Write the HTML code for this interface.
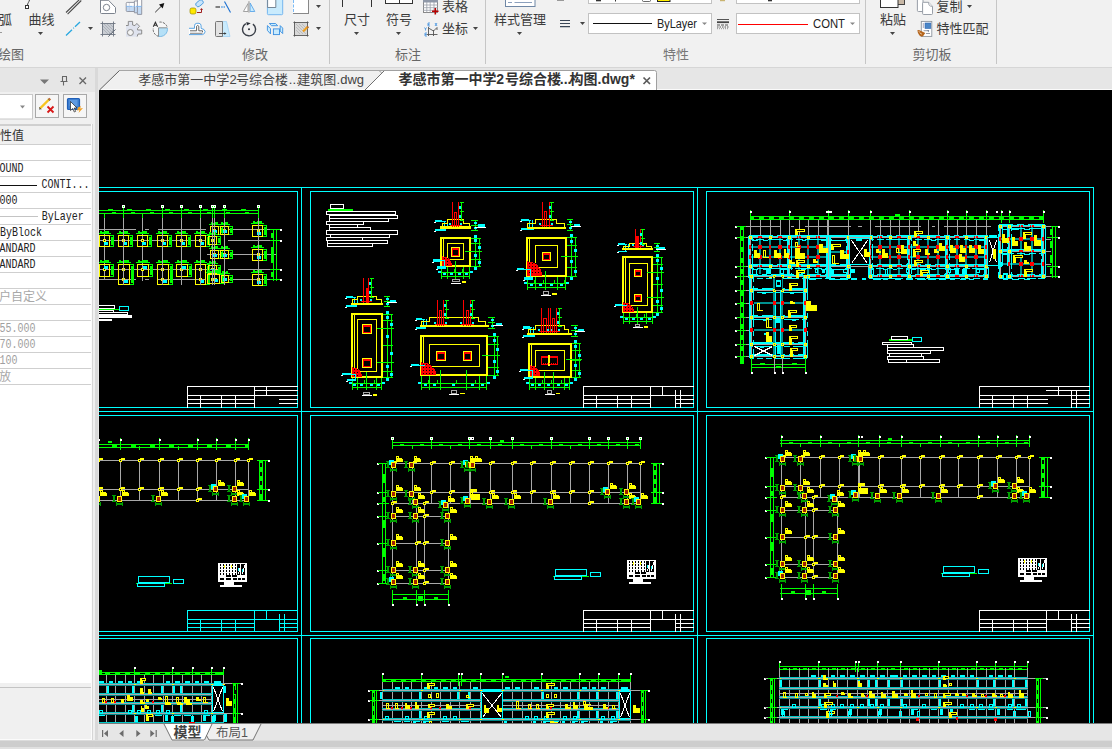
<!DOCTYPE html>
<html><head><meta charset="utf-8"><title>CAD</title>
<style>
html,body{margin:0;padding:0;background:#f0f0f0;overflow:hidden;}
body{width:1112px;height:749px;font-family:"Liberation Sans",sans-serif;}
svg{display:block;position:absolute;left:0;top:0;}
text{font-family:"Liberation Sans",sans-serif;}
.mono{font-family:"Liberation Mono",monospace;}
.serif{font-family:"Liberation Serif",serif;}
.cjk{font-family:"Liberation Sans","Noto Sans CJK SC",sans-serif;}
</style></head><body>
<svg width="1112" height="749" viewBox="0 0 1112 749">
<rect x="0" y="0" width="1112" height="749" fill="#f1f1f1"/>
<rect x="0" y="67" width="1112" height="1" fill="#d6d6d6"/>
<rect x="0" y="68" width="1112" height="22" fill="#e6e6e6"/>
<rect x="99" y="90" width="1013" height="634" fill="#000"/>
<rect x="99" y="724" width="1013" height="17" fill="#e6e6e6"/>
<rect x="99" y="723" width="1013" height="1" fill="#7a7a7a"/>
<rect x="0" y="740" width="1112" height="1" fill="#dcdcdc"/>
<rect x="0" y="741" width="1112" height="6" fill="#cdcdcd"/>
<rect x="0" y="747" width="1112" height="2" fill="#e0e0e0"/>
<rect x="179" y="0" width="1" height="64" fill="#c6c6c6"/>
<rect x="329" y="0" width="1" height="64" fill="#c6c6c6"/>
<rect x="485" y="0" width="1" height="64" fill="#c6c6c6"/>
<rect x="865" y="0" width="1" height="64" fill="#c6c6c6"/>
<rect x="996" y="0" width="1" height="64" fill="#c6c6c6"/>
<text class="cjk" x="-1" y="24" font-size="13" fill="#3c3c3c">弧</text>
<text class="cjk" x="28.5" y="24" font-size="13" fill="#3c3c3c">曲线</text>
<path d="M38 32h5l-2.5 3z" fill="#444"/>
<text class="cjk" x="-2" y="59" font-size="13" fill="#666">绘图</text>
<text class="cjk" x="242" y="59" font-size="13" fill="#666">修改</text>
<text class="cjk" x="344" y="24" font-size="13" fill="#3c3c3c">尺寸</text>
<path d="M354 32h5l-2.5 3z" fill="#444"/>
<text class="cjk" x="386" y="24" font-size="13" fill="#3c3c3c">符号</text>
<path d="M396 32h5l-2.5 3z" fill="#444"/>
<text class="cjk" x="395" y="59" font-size="13" fill="#666">标注</text>
<text class="cjk" x="442" y="10.5" font-size="13" fill="#3c3c3c">表格</text>
<text class="cjk" x="442" y="33" font-size="13" fill="#3c3c3c">坐标</text>
<path d="M473 27h5l-2.5 3z" fill="#444"/>
<text class="cjk" x="494" y="24" font-size="13" fill="#3c3c3c">样式管理</text>
<path d="M517 32h5l-2.5 3z" fill="#444"/>
<text class="cjk" x="663" y="59" font-size="13" fill="#777">特性</text>
<text class="cjk" x="880" y="24" font-size="13" fill="#3c3c3c">粘贴</text>
<path d="M890 32h5l-2.5 3z" fill="#444"/>
<text class="cjk" x="936.5" y="10.5" font-size="13" fill="#3c3c3c">复制</text>
<path d="M967 5h5l-2.5 3z" fill="#444"/>
<text class="cjk" x="936.5" y="33" font-size="13" fill="#3c3c3c">特性匹配</text>
<text class="cjk" x="912.5" y="59" font-size="13" fill="#666">剪切板</text>
<path d="M0 32h2l-1.0 1z" fill="#444"/>
<path d="M29.5 0C29 2 27.5 3.5 27.5 5" stroke="#444" fill="none"/>
<rect x="25.5" y="5.5" width="3" height="3" fill="#fff" stroke="#333"/>
<path d="M66 12.5L79.5 -.5M67.6 14.1L81.3 .5" stroke="#4a4a4a" stroke-width="1.1" fill="none"/>
<path d="M66 35.5L72 29.7M73.3 28.4L73.9 27.8M75 26.8L80 22" stroke="#29a8e0" stroke-width="1.3" fill="none"/>
<path d="M88 27h5l-2.5 3z" fill="#444"/>
<path d="M100.5 -1V12.5Q100.5 13.5 101.5 13.5H114.5Q115.5 13.5 115.5 12.5V7.5L108.5 0.3H100.5" fill="#fff" stroke="#7c838e"/>
<circle cx="106.5" cy="7.5" r="3.2" fill="#fff" stroke="#7c838e"/>
<path d="M127.2 2.4H134.4V1H137.4V0H141.7V6.4H126.2V3.4Q126.2 2.4 127.2 2.4Z" fill="#fdfdfd"/>
<path d="M126.2 6.4H141.7V14.4H137.4V12.8H134.4V11.5H127.2Q126.2 11.5 126.2 10.5Z" fill="#c4daf3"/>
<path d="M127.2 2.4H134.4V1H137.4V-1M141.7 -1V14.4H137.4V12.8H134.4V11.5H127.2Q126.2 11.5 126.2 10.5V3.4Q126.2 2.4 127.2 2.4M134.4 2.4V11.5M137.4 1V12.8" fill="none" stroke="#8b8f9c" stroke-width=".9"/>
<path d="M126.2 6.4H132.5M133.5 6.4H135M136 6.4H141.7" stroke="#7ab4f0" stroke-width=".9"/>
<path d="M129.3 3V11" stroke="#b8c4d8" stroke-width=".6"/>
<path d="M155.2 12.3L161.5 6" stroke="#333" stroke-width="1"/>
<path d="M164.3 3L159 4.6L162.7 8.5Z" fill="#111"/>
<path d="M102.5 23.5H113.5V30Q113 34 108.5 34.5H102.5Z" fill="#c9cdd3"/>
<path d="M104 24L112.5 32.5M107 24L113 30M103 26L110.5 33.5M103 29L108 34M110 24L113 27" stroke="#9aa0aa" stroke-width=".6"/>
<path d="M100.5 23.5H115.5M100.5 34.5H115.5M102.5 21.5V36.5M113.5 21.5V36.5" stroke="#6c7480" stroke-width=".9"/>
<path d="M113.5 30Q113 34 108.5 34.5" stroke="#6c7480" stroke-width=".8" fill="none"/>
<path d="M108.3 36.7L115.6 29.4" stroke="#6c7480" stroke-width="1"/>
<path d="M126 25.5H128.3V21.4H132.6V25L135 25.6L136.8 23.4L139.6 26.3L137.6 28.4V30H141.7V34H138L137.6 36.8H126Z" fill="#dfe3ee"/>
<path d="M126 25.5H128.3V21.4H132.6V25L135 25.6L136.8 23.4L139.6 26.3L137.6 28.4V30H141.7V34H138L137.2 36.5" fill="none" stroke="#8c8c8c" stroke-width="1"/>
<circle cx="130.4" cy="32.5" r="3" fill="#f3f3f3" stroke="#8c8c8c" stroke-width="1"/>
<circle cx="160.3" cy="29.2" r="7" fill="#f7f7f7"/>
<path d="M158.5 27.8H167.3A7.2 7.2 0 0 1 158.5 36.3Z" fill="#b5e0f7"/>
<path d="M158.5 27.8H167.3M158.5 27.8V36.2" stroke="#777" stroke-width=".8" fill="none"/>
<path d="M167.3 28A7.2 7.2 0 0 1 158.5 36.3" stroke="#6ab0e0" stroke-width=".8" fill="none"/>
<path d="M158.5 36.3A7.2 7.2 0 0 1 153.3 28M159.5 22.1A7.2 7.2 0 0 1 167.3 27.5" stroke="#555" stroke-width=".9" fill="none" stroke-dasharray="2.2 1.2"/>
<path d="M153.3 26.7L155.4 22.2L157.6 26.7M154.2 25.2H156.7" stroke="#333" stroke-width="1.1" fill="none"/>
<rect x="190" y="8" width="6" height="6" rx="1.8" fill="#ffe800" stroke="#9a8a00" stroke-width=".7"/>
<rect x="195.5" y="1" width="8" height="4.6" rx="2" transform="rotate(-38 199.5 3.3)" fill="#c7e4fb" stroke="#4a9be0" stroke-width=".9"/>
<path d="M197 12.5H201.5V9.5" stroke="#a02020" fill="none" stroke-width="1"/>
<path d="M200 10H203L201.5 8Z" fill="#a02020"/>
<path d="M215.5 7H220" stroke="#666" stroke-width="1.6"/>
<path d="M221.3 7H222.6M223.6 7H224.8" stroke="#3a8ee0" stroke-width="1.4"/>
<path d="M224.5 1.5L230.5 12.5" stroke="#1a6fd0" stroke-width="1.1"/>
<path d="M248 3.6L243.4 11.5H248Z" fill="#fff" stroke="#999" stroke-width=".9"/>
<path d="M250.1 3L254.8 11.5H250.1Z" fill="#c9ebfd" stroke="#5aa5e8" stroke-width=".9"/>
<rect x="248.2" y="1.2" width="1.5" height="11.4" fill="#b0b0b0"/>
<path d="M267.4 -1V13.7Q267.4 14.7 268.4 14.7H281.7Q282.7 14.7 282.7 13.7V-1Z" fill="#c9ebfd" stroke="#6ab0ee" stroke-width=".9"/>
<path d="M267.6 -1V7.5H275.8V-1Z" fill="#fff" stroke="#6a7a8a" stroke-width=".9"/>
<rect x="293.5" y="-1" width="15" height="14.5" fill="#fff" stroke="#888"/>
<path d="M293.5 0V13" stroke="#fff" stroke-width="1.5"/>
<path d="M293.5 0V12" stroke="#7abaf5" stroke-width="1" stroke-dasharray="3 1.5"/>
<path d="M316 5h5l-2.5 3z" fill="#444"/>
<path d="M189 28.3H194.5V25.8Q194.6 23.4 196.8 23.3H199Q201 23.5 201.1 25.8V28.4Q204.8 29 205.1 31.5Q205 34 202.5 34.6H189" stroke="#4a9be0" stroke-width=".9" fill="#fff"/>
<path d="M190 30.8H196.6V26.2Q197.6 24.6 198.8 26.2V30.8H202.5V32.3" stroke="#666" stroke-width="1" fill="none"/>
<path d="M190 33.3H202.5" stroke="#888" stroke-width="1.1" fill="none"/>
<path d="M222 21.5H226.5L230 36.5H222Z" fill="#c9ebfd" stroke="#8fcaf5" stroke-width=".6"/>
<path d="M222.5 21.5H216.5Q215.5 21.5 215.5 22.5V35.5Q215.5 36.5 216.5 36.5H222.5Z" fill="#e2e2e2" stroke="#777" stroke-width="1"/>
<path d="M219 33.5H225" stroke="#444" stroke-width=".9"/><path d="M226.5 33.5L224.3 32.2V34.8Z" fill="#333"/>
<path d="M252.9 24.1A6.5 6.5 0 1 1 245.8 23.7" fill="none" stroke="#3a3f48" stroke-width="1.4"/>
<path d="M246.3 21.9L250.7 23.3L246.9 25.5Z" fill="#2a2f38"/>
<circle cx="249" cy="29.3" r="1" fill="#2a2f38"/>
<path d="M269.3 23.5H275.6L277.7 25.7H271.6Z" fill="#c9ebfd" stroke="#3a8ee0" stroke-width=".9" stroke-linejoin="round"/>
<path d="M267.4 25.6L270.5 28.6V33.9L267.4 30.4Z" fill="#c9ebfd" stroke="#3a8ee0" stroke-width=".9" stroke-linejoin="round"/>
<rect x="273.4" y="28.9" width="6.1" height="5.7" fill="#c9ebfd" stroke="#3a8ee0" stroke-width=".9"/>
<path d="M280.2 25.6L282.7 28.1V33.6L280.2 31.1Z" fill="#c9ebfd" stroke="#3a8ee0" stroke-width=".9" stroke-linejoin="round"/>
<rect x="294.5" y="22.5" width="13" height="13" fill="#d8d8d8" stroke="#666"/>
<path d="M296 24L306 34M299 24L306 31M302 24L306 28M296 27L303 34M296 30L300 34" stroke="#aaa" stroke-width=".6"/>
<path d="M293.5 22.5h2M306.5 22.5h2M293.5 35.5h2M306.5 35.5h2M294.5 21.5v2M307.5 21.5v2M294.5 34.5v2M307.5 34.5v2" stroke="#555" stroke-width="1"/>
<path d="M303 31.5L307.5 27" stroke="#f0a020" stroke-width="2.2"/><path d="M307 26.3L308.6 27.8" stroke="#b06a30" stroke-width="1.4"/>
<path d="M316 27h5l-2.5 3z" fill="#444"/>
<path d="M342.5 0V7M371.5 0V7" stroke="#333" stroke-width="1"/>
<rect x="385.5" y="-1" width="27" height="4.5" fill="#fff" stroke="#333" stroke-width="1"/><path d="M399.5 0V3.5" stroke="#333"/>
<rect x="423.5" y="-1" width="14" height="13.5" fill="#fff" stroke="#888" stroke-width="1"/>
<rect x="423" y="0" width="15" height="2.5" fill="#8f98a8"/>
<path d="M426.8 2V12.5M430.2 2V12.5M434 2V12.5M423 5H438M423 7.7H438M423 10.3H438" stroke="#9aa0aa" stroke-width=".8"/>
<path d="M432 11.3H438.5M435.3 8V14.6" stroke="#b80000" stroke-width="1.6"/>
<path d="M428.5 27V36M426.5 34.5H437.5M433.5 30V36M428.5 28L433.5 31L437 27.5M437 27.5V30" stroke="#555" stroke-width=".9" fill="none"/>
<path d="M428 23h2M428 24.5h1.5M428 26h2M428 23v3M435 23l2 3M437 23l-2 3M424.5 27.5l1 1.5l1-1.5M425.5 29v1.5M425 33h2M425 34.5h1.5M425 36h2M425 33v3" stroke="#3a8ee0" stroke-width=".8" fill="none"/>
<rect x="505.5" y="-1" width="29.5" height="7.5" fill="#fff" stroke="#6f87a5" stroke-width="1"/>
<path d="M508 2.5H512M514.5 2.5H532" stroke="#8ca0bd" stroke-width="1"/>
<rect x="557" y="0" width="7" height="1" fill="#999"/>
<path d="M560 20.5H570M560 23.5H570M560 26.7H570" stroke="#3a4656" stroke-width="1.2"/>
<path d="M580 22h5l-2.5 3z" fill="#444"/>
<rect x="588.5" y="-9.5" width="123" height="13" fill="#fff" stroke="#c2c2c2"/>
<rect x="736.5" y="-9.5" width="123" height="13" fill="#fff" stroke="#c2c2c2"/>
<rect x="588.5" y="13.5" width="123" height="20" fill="#fff" stroke="#c2c2c2"/>
<rect x="736.5" y="13.5" width="123" height="20" fill="#fff" stroke="#c2c2c2"/>
<rect x="596" y="0" width="5" height="1.3" fill="#333"/><rect x="615" y="0" width="1" height="1.5" fill="#333"/>
<rect x="642.5" y="-2" width="8" height="3.5" rx="1" fill="#fff" stroke="#444" stroke-width=".8"/>
<rect x="657.5" y="-2" width="12.5" height="3.5" fill="#ffee00" stroke="#222" stroke-width="1"/>
<rect x="768" y="0" width="4" height="1.3" fill="#333"/>
<rect x="720" y="0" width="5" height="1.2" fill="#c9b370"/>
<rect x="593" y="23" width="59" height="1" fill="#111"/>
<text x="657" y="28" font-size="12" fill="#222" textLength="40" lengthAdjust="spacingAndGlyphs">ByLayer</text>
<path d="M702 22.5h5l-2.5 2.6z" fill="#888"/>
<rect x="738" y="24" width="70" height="1" fill="#ff0000"/>
<text x="813" y="28" font-size="12" fill="#222" textLength="32" lengthAdjust="spacingAndGlyphs">CONT</text>
<path d="M850 22.5h5l-2.5 2.6z" fill="#888"/>
<path d="M717 19.5H729" stroke="#555" stroke-width="1"/><path d="M717 22.2H729" stroke="#444" stroke-width="1.8"/>
<path d="M717 25H729" stroke="#555" stroke-width="1" stroke-dasharray="3 1"/><path d="M717 27H729" stroke="#555" stroke-width="1" stroke-dasharray="1.5 1"/><path d="M717 28.7H729" stroke="#777" stroke-width=".8" stroke-dasharray="1 1"/>
<rect x="897.5" y="-1" width="7" height="5.5" fill="#c8b8a6" stroke="#444" stroke-width="1"/>
<rect x="880.5" y="-1" width="17.5" height="8.5" fill="#fff" stroke="#333" stroke-width="1"/>
<path d="M917.4 -1V10.5Q917.4 11.5 918.4 11.5H923V-1Z" fill="#fff" stroke="#8d949e" stroke-width=".9"/>
<path d="M922.6 13.5V3.3Q922.6 2.3 923.6 2.3H928.6L932.5 6.4V13.5Q932.5 14.5 931.5 14.5H923.6Q922.6 14.5 922.6 13.5Z" fill="#fff" stroke="#8d949e" stroke-width=".9"/>
<path d="M928.6 2.3Q928.3 6.6 932.5 6.4" fill="#f4f4f4" stroke="#8d949e" stroke-width=".8"/>
<rect x="921.3" y="21.4" width="10.5" height="15" fill="#fff" stroke="#8d949e" stroke-width=".9"/>
<rect x="925" y="23" width="5.8" height="5.5" fill="#4a86c8" stroke="#2f66b0" stroke-width=".6"/>
<path d="M923.3 23V28" stroke="#9a96aa" stroke-width=".8"/>
<path d="M923.6 30.7H928.3M926 33.5H930" stroke="#7a8090" stroke-width=".8"/><path d="M927.4 30.3H929.2L928.3 32.2Z" fill="#5a6a80"/>
<path d="M917.3 30.3L919 30L925.3 33L923 36.2Q921 37 919.5 35.5Q917.5 33 917.3 30.3Z" fill="#b5651d"/>
<path d="M918.6 31.5L920.2 32.3M920 33.2L922 34.2" stroke="#f4e0c8" stroke-width=".7"/>
<rect x="0" y="68" width="95" height="24" fill="#e6e6e6"/>
<rect x="95" y="68" width="3" height="672" fill="#d9d9d9"/><rect x="98" y="68" width="1" height="672" fill="#e6e6e6"/>
<rect x="0" y="92" width="93" height="32" fill="#f0f0f0"/>
<path d="M40 79.5H49L44.5 84Z" fill="#777"/>
<path d="M62.5 77V81.5M66.5 77V81.5M62 76.5H67M60.5 81.5H67.5M63.5 81.5V85.5" stroke="#666" stroke-width="1.1" fill="none"/>
<path d="M79.5 77.5L86 84M86 77.5L79.5 84" stroke="#666" stroke-width="1.3"/>
<rect x="-1" y="94.5" width="33.5" height="24.5" fill="#fff" stroke="#c8c8c8"/>
<path d="M20 105.5H25L22.5 108.5Z" fill="#888"/>
<rect x="35.5" y="94.5" width="23" height="23" fill="#f6f6f6" stroke="#a8a8a8"/>
<rect x="63.5" y="94.5" width="23" height="23" fill="#f6f6f6" stroke="#a8a8a8"/>
<path d="M40 108.5L49 99.5" stroke="#f7c520" stroke-width="2.4"/><path d="M39.2 107.3L41.3 109.4M47.9 98.6L50 100.7" stroke="#333" stroke-width=".7"/>
<path d="M48.8 98.2L50.5 100" stroke="#c06a30" stroke-width="1.6"/><path d="M39 109.6L39.6 108L40.8 109.2Z" fill="#333"/>
<path d="M47.5 106.5L53.5 112.5M53.5 106.5L47.5 112.5" stroke="#d81818" stroke-width="1.8"/>
<rect x="67.5" y="98.5" width="12" height="11" rx="1" fill="#3d7fd0" stroke="#1f5fb8" stroke-width="1.2"/>
<rect x="69.5" y="100" width="8" height="6" fill="#5f9ae0"/>
<path d="M70.5 101.5V110.5L72.8 108.5L74.3 112L75.6 111.4L74.2 108L77 108Z" fill="#fff" stroke="#222" stroke-width=".7"/>
<path d="M78 107.5L81 106L80 108.5L83 108L78.5 113L79.5 110L77 110.5Z" fill="#f5a020"/>
<rect x="0" y="124" width="93" height="563" fill="#fff"/>
<rect x="0" y="124" width="92" height="1" fill="#d0d0d0"/>
<rect x="0" y="125" width="92" height="19" fill="#f0f0f0"/>
<rect x="93" y="92" width="2" height="648" fill="#f0f0f0"/>
<path d="M99.5 90L119.5 70.5H385V90Z" fill="#f0f0f0"/>
<path d="M119.5 70.5H384" stroke="#a6a6a6" stroke-width="1" fill="none"/>
<path d="M99.5 90L119.5 70.5" stroke="#505050" stroke-width=".9" fill="none"/>
<rect x="101" y="89" width="1011" height="1" fill="#fafafa"/>
<path d="M365 90L384.5 70.5H654.5Q656.5 70.5 656.5 72.5V90Z" fill="#fff"/>
<path d="M384.5 70.5H654.5Q656.5 70.5 656.5 72.5V90" stroke="#a0a0a0" stroke-width="1" fill="none"/>
<path d="M365 90L384.5 70.5" stroke="#606060" stroke-width=".9" fill="none"/>
<path d="M378.5 70.5Q380.5 71 381.5 73" stroke="#a6a6a6" stroke-width="1" fill="none"/>
<text class="cjk" y="84" font-size="13" fill="#444"><tspan x="138.3">孝感市第一中学</tspan><tspan x="229.6">2</tspan><tspan x="236">号综合楼</tspan><tspan x="288.8">...</tspan><tspan x="297.2">建筑图</tspan><tspan x="336.6">.dwg</tspan></text>
<text class="cjk" y="84" font-size="14" font-weight="bold" fill="#333"><tspan x="398.5">孝感市第一中学</tspan><tspan x="496.3">2</tspan><tspan x="505">号综合楼</tspan><tspan x="559.8">...</tspan><tspan x="569.6">构图</tspan><tspan x="597.5">.dwg*</tspan></text>
<path d="M643.5 77.5L650 84M650 77.5L643.5 84" stroke="#5a5a5a" stroke-width="1.7"/>
<rect x="102" y="730" width="1.2" height="7" fill="#6c6c6c"/>
<path d="M108 730L108 737L104 733.5Z" fill="#6c6c6c"/>
<path d="M123.5 730L123.5 737L119.3 733.5Z" fill="#6c6c6c"/>
<path d="M136.3 730L136.3 737L140.5 733.5Z" fill="#6c6c6c"/>
<path d="M150.3 730L150.3 737L154.5 733.5Z" fill="#6c6c6c"/>
<rect x="155.6" y="730" width="1.2" height="7" fill="#6c6c6c"/>
<path d="M164 724H212L204.5 740H172Z" fill="#fff"/>
<path d="M164 724L172 740H204" stroke="#666" stroke-width=".9" fill="none"/>
<path d="M212 724H261L253 740H209L206.5 735.5Z" fill="#efefef"/>
<path d="M212 724L204.5 740M206.5 735.5L209 740H253L261 724" stroke="#666" stroke-width=".9" fill="none"/>
<text class="cjk" x="173.5" y="736.5" font-size="14" font-weight="bold" fill="#444">模型</text>
<text class="cjk" x="216" y="736.5" font-size="12.5" fill="#555">布局1</text>
<rect x="0" y="144" width="91" height="1" fill="#cfcfcf"/>
<rect x="0" y="160" width="91" height="1" fill="#cfcfcf"/>
<rect x="0" y="176" width="91" height="1" fill="#cfcfcf"/>
<rect x="0" y="192" width="91" height="1" fill="#cfcfcf"/>
<rect x="0" y="208" width="91" height="1" fill="#cfcfcf"/>
<rect x="0" y="224" width="91" height="1" fill="#cfcfcf"/>
<rect x="0" y="240" width="91" height="1" fill="#cfcfcf"/>
<rect x="0" y="256" width="91" height="1" fill="#cfcfcf"/>
<rect x="0" y="272" width="91" height="1" fill="#cfcfcf"/>
<rect x="0" y="288" width="91" height="1" fill="#cfcfcf"/>
<rect x="0" y="304" width="91" height="1" fill="#cfcfcf"/>
<rect x="0" y="320" width="91" height="1" fill="#cfcfcf"/>
<rect x="0" y="336" width="91" height="1" fill="#cfcfcf"/>
<rect x="0" y="352" width="91" height="1" fill="#cfcfcf"/>
<rect x="0" y="368" width="91" height="1" fill="#cfcfcf"/>
<rect x="0" y="384" width="91" height="1" fill="#cfcfcf"/>
<rect x="0" y="125" width="91" height="1" fill="#cfcfcf"/>
<text class="cjk" x="0" y="139.5" font-size="12" fill="#333">性值</text>
<text class="mono" transform="translate(0 172) scale(1 1.22)" x="-0.5 5.5 11.5 17.5" y="0" font-size="10" fill="#222">OUND</text>
<rect x="0" y="185" width="37" height="1" fill="#111"/>
<text class="mono" transform="translate(0 188) scale(1 1.22)" x="41.5 47.5 53.5 59.5 65.5 71.5 77.5 83.5" y="0" font-size="10" fill="#222">CONTI...</text>
<text class="mono" transform="translate(0 204) scale(1 1.22)" x="-0.5 5.5 11.5" y="0" font-size="10" fill="#222">000</text>
<rect x="0" y="216" width="38" height="1" fill="#c4c4c4"/>
<text class="mono" transform="translate(0 220) scale(1 1.22)" x="41.8 47.8 53.8 59.8 65.8 71.8 77.8" y="0" font-size="10" fill="#222">ByLayer</text>
<text class="mono" transform="translate(0 236) scale(1 1.22)" x="0 6 12 18 24 30 36" y="0" font-size="10" fill="#222">ByBlock</text>
<text class="mono" transform="translate(0 252) scale(1 1.22)" x="-0.5 5.5 11.5 17.5 23.5 29.5" y="0" font-size="10" fill="#222">ANDARD</text>
<text class="mono" transform="translate(0 268) scale(1 1.22)" x="-0.5 5.5 11.5 17.5 23.5 29.5" y="0" font-size="10" fill="#222">ANDARD</text>
<text class="cjk" x="-1" y="300.5" font-size="12" fill="#a8a8a8">户自定义</text>
<text class="mono" transform="translate(0 332) scale(1 1.22)" x="-0.5 5.5 11.5 17.5 23.5 29.5" y="0" font-size="10" fill="#a0a0a0">55.000</text>
<text class="mono" transform="translate(0 348) scale(1 1.22)" x="-0.5 5.5 11.5 17.5 23.5 29.5" y="0" font-size="10" fill="#a0a0a0">70.000</text>
<text class="mono" transform="translate(0 364) scale(1 1.22)" x="-0.5 5.5 11.5" y="0" font-size="10" fill="#a0a0a0">100</text>
<text class="cjk" x="-1" y="380.5" font-size="12" fill="#a8a8a8">放</text>
<rect x="0" y="683" width="91" height="57" fill="#f0f0f0"/>
<rect x="0" y="687" width="91" height="1" fill="#c4c4c4"/>
<rect x="91" y="124" width="1" height="616" fill="#fbfbfb"/><rect x="0" y="739" width="92" height="1" fill="#fbfbfb"/>
<rect x="92" y="124" width="1" height="616" fill="#d6d6d6"/>
<clipPath id="cvc"><rect x="99" y="90" width="1013" height="633"/></clipPath>
<g clip-path="url(#cvc)" shape-rendering="crispEdges">
<path d="M99 187h995v1h-995zM99 411h995v1h-995zM99 635h995v1h-995zM301 187h1v537h-1zM697 187h1v537h-1zM1093 187h1v537h-1zM-86 191h384v1h-384zM-86 407h384v1h-384zM-86 191h1v217h-1zM297 191h1v217h-1zM-86 415h384v1h-384zM-86 631h384v1h-384zM-86 415h1v217h-1zM297 415h1v217h-1zM-86 638h384v1h-384zM-86 855h384v1h-384zM-86 638h1v218h-1zM297 638h1v218h-1zM310 191h384v1h-384zM310 407h384v1h-384zM310 191h1v217h-1zM693 191h1v217h-1zM310 415h384v1h-384zM310 631h384v1h-384zM310 415h1v217h-1zM693 415h1v217h-1zM310 638h384v1h-384zM310 855h384v1h-384zM310 638h1v218h-1zM693 638h1v218h-1zM706 191h384v1h-384zM706 407h384v1h-384zM706 191h1v217h-1zM1089 191h1v217h-1zM706 415h384v1h-384zM706 631h384v1h-384zM706 415h1v217h-1zM1089 415h1v217h-1zM706 638h384v1h-384zM706 855h384v1h-384zM706 638h1v218h-1zM1089 638h1v218h-1z" fill="#00ffff"/>
<path d="M187 386h111v1h-111zM187 386h1v22h-1zM187 395h111v1h-111zM200 395h1v13h-1zM221 395h1v13h-1zM235 395h1v13h-1zM187 399h68v1h-68zM279 399h19v1h-19zM187 403h68v1h-68zM279 403h19v1h-19zM254 386h1v22h-1zM266 386h1v10h-1zM254 390h44v1h-44z" fill="#ffffff"/>
<path d="M187 610h111v1h-111zM187 610h1v22h-1zM187 619h111v1h-111zM200 619h1v13h-1zM221 619h1v13h-1zM235 619h1v13h-1zM187 623h68v1h-68zM279 623h19v1h-19zM187 627h68v1h-68zM279 627h19v1h-19zM254 610h1v22h-1zM266 610h1v10h-1zM279 614h1v18h-1zM284 614h1v18h-1z" fill="#00ffff"/>
<path d="M583 386h111v1h-111zM583 386h1v22h-1zM583 395h111v1h-111zM596 395h1v13h-1zM617 395h1v13h-1zM631 395h1v13h-1zM583 399h68v1h-68zM675 399h19v1h-19zM583 403h68v1h-68zM675 403h19v1h-19zM650 386h1v22h-1zM662 386h1v10h-1zM675 390h1v18h-1zM680 390h1v18h-1zM583 610h111v1h-111zM583 610h1v22h-1zM583 619h111v1h-111zM596 619h1v13h-1zM617 619h1v13h-1zM631 619h1v13h-1zM583 623h68v1h-68zM675 623h19v1h-19zM583 627h68v1h-68zM675 627h19v1h-19zM650 610h1v22h-1zM662 610h1v10h-1zM675 614h1v18h-1zM680 614h1v18h-1zM979 386h111v1h-111zM979 386h1v22h-1zM979 395h111v1h-111zM992 395h1v13h-1zM1013 395h1v13h-1zM1027 395h1v13h-1zM979 399h69v1h-69zM1071 399h19v1h-19zM979 403h69v1h-69zM1071 403h19v1h-19zM1046 390h44v1h-44zM1058 386h1v10h-1zM1071 390h1v18h-1zM1076 390h1v18h-1zM979 610h111v1h-111zM979 610h1v22h-1zM979 619h111v1h-111zM992 619h1v13h-1zM1013 619h1v13h-1zM1027 619h1v13h-1zM979 623h68v1h-68zM1071 623h19v1h-19zM979 627h68v1h-68zM1071 627h19v1h-19zM1046 610h1v22h-1zM1058 610h1v10h-1zM1071 614h1v18h-1zM1076 614h1v18h-1z" fill="#ffffff"/>
<path d="M99 210h160v1h-160zM99 213h160v1h-160zM108 209h5v1h-5zM112 212h4v1h-4zM127 209h5v1h-5zM131 212h4v1h-4zM146 209h5v1h-5zM150 212h4v1h-4zM165 209h5v1h-5zM169 212h4v1h-4zM184 209h5v1h-5zM188 212h4v1h-4zM203 209h5v1h-5zM207 212h4v1h-4zM222 209h5v1h-5zM226 212h4v1h-4zM241 209h5v1h-5zM245 212h4v1h-4zM104 213h1v5h-1z" fill="#00ff00"/>
<path d="M104 218h1v62h-1z" fill="#a8a8a8"/>
<path d="M123 206h1v12h-1z" fill="#00ff00"/>
<path d="M123 218h1v67h-1z" fill="#a8a8a8"/>
<path d="M122 205h3v1h-3zM122 207h3v1h-3zM122 205h1v3h-1zM124 205h1v3h-1z" fill="#ffffff"/>
<path d="M142 213h1v5h-1z" fill="#00ff00"/>
<path d="M142 218h1v63h-1z" fill="#a8a8a8"/>
<path d="M162 206h1v12h-1z" fill="#00ff00"/>
<path d="M162 218h1v67h-1z" fill="#a8a8a8"/>
<path d="M161 205h3v1h-3zM161 207h3v1h-3zM161 205h1v3h-1zM163 205h1v3h-1z" fill="#ffffff"/>
<path d="M181 206h1v12h-1z" fill="#00ff00"/>
<path d="M181 218h1v67h-1z" fill="#a8a8a8"/>
<path d="M180 205h3v1h-3zM180 207h3v1h-3zM180 205h1v3h-1zM182 205h1v3h-1z" fill="#ffffff"/>
<path d="M200 206h1v12h-1z" fill="#00ff00"/>
<path d="M200 218h1v67h-1z" fill="#a8a8a8"/>
<path d="M199 205h3v1h-3zM199 207h3v1h-3zM199 205h1v3h-1zM201 205h1v3h-1z" fill="#ffffff"/>
<path d="M212 206h1v12h-1z" fill="#00ff00"/>
<path d="M212 218h1v67h-1z" fill="#a8a8a8"/>
<path d="M211 205h3v1h-3zM211 207h3v1h-3zM211 205h1v3h-1zM213 205h1v3h-1z" fill="#ffffff"/>
<path d="M214 206h1v12h-1z" fill="#00ff00"/>
<path d="M214 218h1v67h-1z" fill="#a8a8a8"/>
<path d="M213 205h3v1h-3zM213 207h3v1h-3zM213 205h1v3h-1zM215 205h1v3h-1z" fill="#ffffff"/>
<path d="M224 206h1v12h-1z" fill="#00ff00"/>
<path d="M224 218h1v67h-1z" fill="#a8a8a8"/>
<path d="M223 205h3v1h-3zM223 207h3v1h-3zM223 205h1v3h-1zM225 205h1v3h-1z" fill="#ffffff"/>
<path d="M258 206h1v12h-1z" fill="#00ff00"/>
<path d="M258 218h1v67h-1z" fill="#a8a8a8"/>
<path d="M257 205h3v1h-3zM257 207h3v1h-3zM257 205h1v3h-1zM259 205h1v3h-1z" fill="#ffffff"/>
<path d="M99 229h37v1h-37zM145 229h4v1h-4zM158 229h48v1h-48zM228 229h53v1h-53zM99 240h37v1h-37zM158 240h48v1h-48zM228 240h53v1h-53zM99 269h37v1h-37zM158 269h48v1h-48zM228 269h53v1h-53zM99 279h37v1h-37zM145 279h4v1h-4zM158 279h48v1h-48zM228 279h53v1h-53zM136 240h22v1h-22zM136 269h22v1h-22zM206 269h13v1h-13zM207 254h69v1h-69z" fill="#a8a8a8"/>
<path d="M273 229h1v52h-1zM276 229h1v52h-1zM270 229h10v1h-10z" fill="#00ff00"/>
<path d="M280 229h2v2h-2z" fill="#ffffff"/>
<path d="M270 240h10v1h-10z" fill="#00ff00"/>
<path d="M280 240h2v2h-2z" fill="#ffffff"/>
<path d="M270 269h10v1h-10z" fill="#00ff00"/>
<path d="M280 269h2v2h-2z" fill="#ffffff"/>
<path d="M270 279h10v1h-10z" fill="#00ff00"/>
<path d="M280 279h2v2h-2z" fill="#ffffff"/>
<path d="M271 233h2v5h-2zM271 247h2v16h-2zM271 272h2v5h-2zM100 231h9v2h-9zM98 233h13v1h-13z" fill="#00ff00"/>
<path d="M102 231h2v1h-2z" fill="#000000"/>
<path d="M113 235h1v12h-1zM111 237h2v8h-2zM110 235h4v1h-4zM110 246h4v1h-4z" fill="#00ff00"/>
<path d="M99 235h11v1h-11zM99 246h11v1h-11zM99 235h1v12h-1zM109 235h1v12h-1zM103 239h3v3h-3z" fill="#ffff00"/>
<path d="M104 240h1v1h-1z" fill="#000000"/>
<path d="M104 242h4v3h-4z" fill="#00ffff"/>
<path d="M119 231h9v2h-9zM117 233h13v1h-13z" fill="#00ff00"/>
<path d="M121 231h2v1h-2z" fill="#000000"/>
<path d="M132 235h1v12h-1zM130 237h2v8h-2zM129 235h4v1h-4zM129 246h4v1h-4z" fill="#00ff00"/>
<path d="M118 235h11v1h-11zM118 246h11v1h-11zM118 235h1v12h-1zM128 235h1v12h-1zM122 239h3v3h-3z" fill="#ffff00"/>
<path d="M123 240h1v1h-1z" fill="#000000"/>
<path d="M123 242h4v3h-4z" fill="#00ffff"/>
<path d="M138 231h9v2h-9zM136 233h13v1h-13z" fill="#00ff00"/>
<path d="M140 231h2v1h-2z" fill="#000000"/>
<path d="M151 235h1v12h-1zM149 237h2v8h-2zM148 235h4v1h-4zM148 246h4v1h-4z" fill="#00ff00"/>
<path d="M137 235h11v1h-11zM137 246h11v1h-11zM137 235h1v12h-1zM147 235h1v12h-1zM141 239h3v3h-3z" fill="#ffff00"/>
<path d="M142 240h1v1h-1z" fill="#000000"/>
<path d="M142 242h4v3h-4z" fill="#00ffff"/>
<path d="M158 231h9v2h-9zM156 233h13v1h-13z" fill="#00ff00"/>
<path d="M160 231h2v1h-2z" fill="#000000"/>
<path d="M171 235h1v12h-1zM169 237h2v8h-2zM168 235h4v1h-4zM168 246h4v1h-4z" fill="#00ff00"/>
<path d="M157 235h11v1h-11zM157 246h11v1h-11zM157 235h1v12h-1zM167 235h1v12h-1zM161 239h3v3h-3z" fill="#ffff00"/>
<path d="M162 240h1v1h-1z" fill="#000000"/>
<path d="M162 242h4v3h-4z" fill="#00ffff"/>
<path d="M177 231h9v2h-9zM175 233h13v1h-13z" fill="#00ff00"/>
<path d="M179 231h2v1h-2z" fill="#000000"/>
<path d="M190 235h1v12h-1zM188 237h2v8h-2zM187 235h4v1h-4zM187 246h4v1h-4z" fill="#00ff00"/>
<path d="M176 235h11v1h-11zM176 246h11v1h-11zM176 235h1v12h-1zM186 235h1v12h-1zM180 239h3v3h-3z" fill="#ffff00"/>
<path d="M181 240h1v1h-1z" fill="#000000"/>
<path d="M181 242h4v3h-4z" fill="#00ffff"/>
<path d="M196 231h9v2h-9zM194 233h13v1h-13z" fill="#00ff00"/>
<path d="M198 231h2v1h-2z" fill="#000000"/>
<path d="M209 235h1v12h-1zM207 237h2v8h-2zM206 235h4v1h-4zM206 246h4v1h-4z" fill="#00ff00"/>
<path d="M195 235h11v1h-11zM195 246h11v1h-11zM195 235h1v12h-1zM205 235h1v12h-1zM199 239h3v3h-3z" fill="#ffff00"/>
<path d="M200 240h1v1h-1z" fill="#000000"/>
<path d="M200 242h4v3h-4z" fill="#00ffff"/>
<path d="M100 260h9v2h-9zM98 262h13v1h-13z" fill="#00ff00"/>
<path d="M102 260h2v1h-2z" fill="#000000"/>
<path d="M113 264h1v13h-1zM111 266h2v9h-2zM110 264h4v1h-4zM110 276h4v1h-4z" fill="#00ff00"/>
<path d="M99 264h11v1h-11zM99 276h11v1h-11zM99 264h1v13h-1zM109 264h1v13h-1zM103 268h3v3h-3z" fill="#ffff00"/>
<path d="M104 269h1v1h-1z" fill="#000000"/>
<path d="M104 266h4v3h-4z" fill="#00ffff"/>
<path d="M119 260h10v2h-10zM117 262h14v1h-14z" fill="#00ff00"/>
<path d="M121 260h2v1h-2z" fill="#000000"/>
<path d="M133 264h1v21h-1zM131 266h2v17h-2zM130 264h4v1h-4zM130 284h4v1h-4z" fill="#00ff00"/>
<path d="M118 264h12v1h-12zM118 284h12v1h-12zM118 264h1v21h-1zM129 264h1v21h-1zM122 268h3v3h-3z" fill="#ffff00"/>
<path d="M123 269h1v1h-1z" fill="#000000"/>
<path d="M122 278h3v3h-3z" fill="#ffff00"/>
<path d="M123 279h1v1h-1z" fill="#000000"/>
<path d="M124 280h4v3h-4z" fill="#00ffff"/>
<path d="M138 260h10v2h-10zM136 262h14v1h-14z" fill="#00ff00"/>
<path d="M140 260h2v1h-2z" fill="#000000"/>
<path d="M152 264h1v13h-1zM150 266h2v9h-2zM149 264h4v1h-4zM149 276h4v1h-4z" fill="#00ff00"/>
<path d="M137 264h12v1h-12zM137 276h12v1h-12zM137 264h1v13h-1zM148 264h1v13h-1zM141 268h3v3h-3z" fill="#ffff00"/>
<path d="M142 269h1v1h-1z" fill="#000000"/>
<path d="M143 266h4v3h-4z" fill="#00ffff"/>
<path d="M158 260h10v2h-10zM156 262h14v1h-14z" fill="#00ff00"/>
<path d="M160 260h2v1h-2z" fill="#000000"/>
<path d="M172 264h1v21h-1zM170 266h2v17h-2zM169 264h4v1h-4zM169 284h4v1h-4z" fill="#00ff00"/>
<path d="M157 264h12v1h-12zM157 284h12v1h-12zM157 264h1v21h-1zM168 264h1v21h-1zM161 268h3v3h-3z" fill="#ffff00"/>
<path d="M162 269h1v1h-1z" fill="#000000"/>
<path d="M161 278h3v3h-3z" fill="#ffff00"/>
<path d="M162 279h1v1h-1z" fill="#000000"/>
<path d="M163 280h4v3h-4z" fill="#00ffff"/>
<path d="M177 260h10v2h-10zM175 262h14v1h-14z" fill="#00ff00"/>
<path d="M179 260h2v1h-2z" fill="#000000"/>
<path d="M191 264h1v13h-1zM189 266h2v9h-2zM188 264h4v1h-4zM188 276h4v1h-4z" fill="#00ff00"/>
<path d="M176 264h12v1h-12zM176 276h12v1h-12zM176 264h1v13h-1zM187 264h1v13h-1zM180 268h3v3h-3z" fill="#ffff00"/>
<path d="M181 269h1v1h-1z" fill="#000000"/>
<path d="M182 266h4v3h-4z" fill="#00ffff"/>
<path d="M196 260h9v2h-9zM194 262h13v1h-13z" fill="#00ff00"/>
<path d="M198 260h2v1h-2z" fill="#000000"/>
<path d="M209 264h1v21h-1zM207 266h2v17h-2zM206 264h4v1h-4zM206 284h4v1h-4z" fill="#00ff00"/>
<path d="M195 264h11v1h-11zM195 284h11v1h-11zM195 264h1v21h-1zM205 264h1v21h-1zM199 268h3v3h-3z" fill="#ffff00"/>
<path d="M200 269h1v1h-1z" fill="#000000"/>
<path d="M199 278h3v3h-3z" fill="#ffff00"/>
<path d="M200 279h1v1h-1z" fill="#000000"/>
<path d="M200 280h4v3h-4z" fill="#00ffff"/>
<path d="M211 222h7v2h-7zM209 224h11v1h-11z" fill="#00ff00"/>
<path d="M213 222h2v1h-2z" fill="#000000"/>
<path d="M222 226h1v9h-1zM220 228h2v5h-2zM219 226h4v1h-4zM219 234h4v1h-4z" fill="#00ff00"/>
<path d="M210 226h9v1h-9zM210 234h9v1h-9zM210 226h1v9h-1zM218 226h1v9h-1zM213 229h3v3h-3z" fill="#ffff00"/>
<path d="M214 230h1v1h-1z" fill="#000000"/>
<path d="M213 230h4v3h-4z" fill="#00ffff"/>
<path d="M221 222h7v2h-7zM219 224h11v1h-11z" fill="#00ff00"/>
<path d="M223 222h2v1h-2z" fill="#000000"/>
<path d="M232 226h1v9h-1zM230 228h2v5h-2zM229 226h4v1h-4zM229 234h4v1h-4z" fill="#00ff00"/>
<path d="M220 226h9v1h-9zM220 234h9v1h-9zM220 226h1v9h-1zM228 226h1v9h-1zM223 229h3v3h-3z" fill="#ffff00"/>
<path d="M224 230h1v1h-1z" fill="#000000"/>
<path d="M223 230h4v3h-4z" fill="#00ffff"/>
<path d="M209 232h7v2h-7zM207 234h11v1h-11z" fill="#00ff00"/>
<path d="M211 232h2v1h-2z" fill="#000000"/>
<path d="M220 236h1v9h-1zM218 238h2v5h-2zM217 236h4v1h-4zM217 244h4v1h-4z" fill="#00ff00"/>
<path d="M208 236h9v1h-9zM208 244h9v1h-9zM208 236h1v9h-1zM216 236h1v9h-1zM211 239h3v3h-3z" fill="#ffff00"/>
<path d="M212 240h1v1h-1z" fill="#000000"/>
<path d="M211 246h7v2h-7zM209 248h11v1h-11z" fill="#00ff00"/>
<path d="M213 246h2v1h-2z" fill="#000000"/>
<path d="M222 250h1v9h-1zM220 252h2v5h-2zM219 250h4v1h-4zM219 258h4v1h-4z" fill="#00ff00"/>
<path d="M210 250h9v1h-9zM210 258h9v1h-9zM210 250h1v9h-1zM218 250h1v9h-1zM213 253h3v3h-3z" fill="#ffff00"/>
<path d="M214 254h1v1h-1z" fill="#000000"/>
<path d="M213 254h4v3h-4z" fill="#00ffff"/>
<path d="M221 246h7v2h-7zM219 248h11v1h-11z" fill="#00ff00"/>
<path d="M223 246h2v1h-2z" fill="#000000"/>
<path d="M232 250h1v9h-1zM230 252h2v5h-2zM229 250h4v1h-4zM229 258h4v1h-4z" fill="#00ff00"/>
<path d="M220 250h9v1h-9zM220 258h9v1h-9zM220 250h1v9h-1zM228 250h1v9h-1zM223 253h3v3h-3z" fill="#ffff00"/>
<path d="M224 254h1v1h-1z" fill="#000000"/>
<path d="M223 254h4v3h-4z" fill="#00ffff"/>
<path d="M209 261h7v2h-7zM207 263h11v1h-11z" fill="#00ff00"/>
<path d="M211 261h2v1h-2z" fill="#000000"/>
<path d="M220 265h1v9h-1zM218 267h2v5h-2zM217 265h4v1h-4zM217 273h4v1h-4z" fill="#00ff00"/>
<path d="M208 265h9v1h-9zM208 273h9v1h-9zM208 265h1v9h-1zM216 265h1v9h-1zM211 268h3v3h-3z" fill="#ffff00"/>
<path d="M212 269h1v1h-1z" fill="#000000"/>
<path d="M211 269h4v3h-4z" fill="#00ffff"/>
<path d="M208 270h11v2h-11zM206 272h15v1h-15z" fill="#00ff00"/>
<path d="M210 270h2v1h-2z" fill="#000000"/>
<path d="M223 274h1v10h-1zM221 276h2v6h-2zM220 274h4v1h-4zM220 283h4v1h-4z" fill="#00ff00"/>
<path d="M207 274h13v1h-13zM207 283h13v1h-13zM207 274h1v10h-1zM219 274h1v10h-1zM211 278h3v3h-3z" fill="#ffff00"/>
<path d="M212 279h1v1h-1z" fill="#000000"/>
<path d="M214 278h3v3h-3z" fill="#ffff00"/>
<path d="M215 279h1v1h-1z" fill="#000000"/>
<path d="M214 279h4v3h-4z" fill="#00ffff"/>
<path d="M222 271h6v2h-6zM220 273h10v1h-10z" fill="#00ff00"/>
<path d="M224 271h2v1h-2z" fill="#000000"/>
<path d="M232 275h1v8h-1zM230 277h2v4h-2zM229 275h4v1h-4zM229 282h4v1h-4z" fill="#00ff00"/>
<path d="M221 275h8v1h-8zM221 282h8v1h-8zM221 275h1v8h-1zM228 275h1v8h-1zM223 278h3v3h-3z" fill="#ffff00"/>
<path d="M224 279h1v1h-1z" fill="#000000"/>
<path d="M223 278h4v3h-4z" fill="#00ffff"/>
<path d="M253 221h9v2h-9zM251 223h13v1h-13z" fill="#00ff00"/>
<path d="M255 221h2v1h-2z" fill="#000000"/>
<path d="M266 225h1v12h-1zM264 227h2v8h-2zM263 225h4v1h-4zM263 236h4v1h-4z" fill="#00ff00"/>
<path d="M252 225h11v1h-11zM252 236h11v1h-11zM252 225h1v12h-1zM262 225h1v12h-1zM257 229h3v3h-3z" fill="#ffff00"/>
<path d="M258 230h1v1h-1z" fill="#000000"/>
<path d="M257 232h4v3h-4z" fill="#00ffff"/>
<path d="M253 245h9v2h-9zM251 247h13v1h-13z" fill="#00ff00"/>
<path d="M255 245h2v1h-2z" fill="#000000"/>
<path d="M266 249h1v12h-1zM264 251h2v8h-2zM263 249h4v1h-4zM263 260h4v1h-4z" fill="#00ff00"/>
<path d="M252 249h11v1h-11zM252 260h11v1h-11zM252 249h1v12h-1zM262 249h1v12h-1zM257 253h3v3h-3z" fill="#ffff00"/>
<path d="M258 254h1v1h-1z" fill="#000000"/>
<path d="M257 256h4v3h-4z" fill="#00ffff"/>
<path d="M253 270h9v2h-9zM251 272h13v1h-13z" fill="#00ff00"/>
<path d="M255 270h2v1h-2z" fill="#000000"/>
<path d="M266 274h1v12h-1zM264 276h2v8h-2zM263 274h4v1h-4zM263 285h4v1h-4z" fill="#00ff00"/>
<path d="M252 274h11v1h-11zM252 285h11v1h-11zM252 274h1v12h-1zM262 274h1v12h-1zM257 278h3v3h-3z" fill="#ffff00"/>
<path d="M258 279h1v1h-1z" fill="#000000"/>
<path d="M257 281h4v3h-4z" fill="#00ffff"/>
<path d="M200 218h1v67h-1zM212 218h1v67h-1zM214 218h1v67h-1zM224 218h1v67h-1zM258 218h1v67h-1zM123 218h1v67h-1zM162 218h1v67h-1zM181 218h1v67h-1z" fill="#a8a8a8"/>
<path d="M98 305h17v1h-17zM98 308h17v1h-17zM98 305h1v4h-1zM114 305h1v4h-1z" fill="#ffffff"/>
<path d="M99 309h21v1h-21z" fill="#00ff00"/>
<path d="M119 306h10v1h-10zM119 310h10v1h-10zM119 306h1v5h-1zM128 306h1v5h-1z" fill="#00ffff"/>
<path d="M98 310h16v1h-16zM98 312h16v1h-16zM98 310h1v3h-1zM113 310h1v3h-1zM98 312h30v1h-30zM98 314h30v1h-30zM98 312h1v3h-1zM127 312h1v3h-1zM99 315h33v3h-33zM99 319h13v2h-13zM330 204h14v1h-14zM330 208h14v1h-14zM330 204h1v5h-1zM343 204h1v5h-1z" fill="#ffffff"/>
<path d="M328 209h25v2h-25z" fill="#00ff00"/>
<path d="M330 208h14v1h-14zM326 211h70v1h-70zM326 214h70v1h-70zM326 211h1v4h-1zM395 211h1v4h-1zM329 215h69v1h-69zM329 218h69v1h-69zM329 215h1v4h-1zM397 215h1v4h-1zM329 218h60v1h-60zM329 221h60v1h-60zM329 218h1v4h-1zM388 218h1v4h-1zM326 221h38v1h-38zM326 224h38v1h-38zM326 221h1v4h-1zM363 221h1v4h-1zM329 224h29v1h-29zM329 227h29v1h-29zM329 224h1v4h-1zM357 224h1v4h-1zM329 227h42v1h-42zM329 230h42v1h-42zM329 227h1v4h-1zM370 227h1v4h-1zM326 230h72v1h-72zM326 234h72v1h-72zM326 230h1v5h-1zM397 230h1v5h-1zM330 234h60v1h-60zM330 237h60v1h-60zM330 234h1v4h-1zM389 234h1v4h-1zM326 237h37v1h-37zM326 240h37v1h-37zM326 237h1v4h-1zM362 237h1v4h-1zM327 240h61v1h-61zM327 243h61v1h-61zM327 240h1v4h-1zM387 240h1v4h-1zM327 243h46v1h-46zM327 246h46v1h-46zM327 243h1v4h-1zM372 243h1v4h-1z" fill="#ffffff"/>
<path d="M435 220h7v2h-7z" fill="#00ffff"/>
<path d="M434 222h2v1h-2z" fill="#ffffff"/>
<path d="M435 229h11v2h-11z" fill="#00ffff"/>
<path d="M434 231h2v1h-2z" fill="#ffffff"/>
<path d="M441 221h5v1h-5zM444 221h1v9h-1zM447 221h1v7h-1zM445 229h1v1h-1z" fill="#00ffff"/>
<path d="M447 219h17v1h-17zM447 219h1v5h-1zM463 219h1v5h-1zM442 223h6v1h-6zM463 223h7v1h-7zM442 223h1v4h-1zM469 223h1v4h-1zM440 226h31v3h-31z" fill="#ffff00"/>
<path d="M452 202h1v25h-1zM458 202h1v25h-1zM454 212h1v15h-1zM456 212h1v15h-1zM454 212h3v1h-3zM450 225h12v1h-12z" fill="#ff0000"/>
<path d="M449 223h2v2h-2zM460 223h2v2h-2z" fill="#00ffff"/>
<path d="M461 202h1v19h-1zM460 202h4v1h-4zM460 211h4v1h-4zM460 220h4v1h-4z" fill="#00ff00"/>
<path d="M459 206h2v3h-2zM459 215h2v3h-2z" fill="#00ffff"/>
<path d="M475 220h1v11h-1zM471 220h7v1h-7zM471 230h7v1h-7zM471 225h7v1h-7z" fill="#00ff00"/>
<path d="M474 222h3v2h-3zM474 227h3v2h-3zM478 224h7v3h-7z" fill="#00ffff"/>
<path d="M475 227h11v1h-11z" fill="#ffffff"/>
<path d="M440 237h31v1h-31zM440 266h31v1h-31zM440 237h1v30h-1zM470 237h1v30h-1zM441 238h29v1h-29zM441 265h29v1h-29zM441 238h1v28h-1zM469 238h1v28h-1zM443 239h1v26h-1zM447 243h17v1h-17zM447 259h17v1h-17zM447 243h1v17h-1zM463 243h1v17h-1z" fill="#ffff00"/>
<path d="M442 256h1v1h-1zM442 257h5v1h-5zM442 258h7v1h-7zM442 259h8v1h-8zM442 260h8v1h-8zM442 261h9v1h-9zM442 262h9v1h-9zM442 263h10v1h-10zM442 264h10v1h-10zM442 265h10v1h-10z" fill="#ff0000"/>
<path d="M444 258h1v1h-1zM447 258h1v1h-1zM444 261h1v1h-1zM447 261h1v1h-1zM444 264h1v1h-1zM447 264h1v1h-1z" fill="#000000"/>
<path d="M451 247h9v1h-9zM451 256h9v1h-9zM451 247h1v10h-1zM459 247h1v10h-1z" fill="#ffff00"/>
<path d="M452 248h7v1h-7zM452 255h7v1h-7zM452 248h1v8h-1zM458 248h1v8h-1zM452 248h7v1h-7zM452 249h7v1h-7z" fill="#ff0000"/>
<path d="M441 272h29v1h-29zM441 276h29v1h-29zM441 267h1v12h-1zM447 267h1v12h-1zM455 267h1v12h-1zM463 267h1v12h-1zM469 267h1v12h-1zM455 261h1v18h-1z" fill="#00ff00"/>
<path d="M443 273h3v2h-3zM450 273h3v2h-3z" fill="#00ffff"/>
<path d="M454 269h1v4h-1z" fill="#00ff00"/>
<path d="M458 273h3v2h-3z" fill="#00ffff"/>
<path d="M462 269h1v4h-1z" fill="#00ff00"/>
<path d="M465 273h3v2h-3zM438 271h3v2h-3zM470 271h3v2h-3z" fill="#00ffff"/>
<path d="M475 238h1v29h-1zM479 238h1v29h-1zM471 238h10v1h-10zM471 243h10v1h-10zM471 251h10v1h-10zM471 259h10v1h-10zM471 266h10v1h-10zM465 251h17v1h-17z" fill="#00ff00"/>
<path d="M474 239h3v3h-3zM478 246h3v3h-3zM474 254h3v3h-3zM478 261h3v3h-3zM474 235h3v3h-3zM474 267h3v3h-3zM433 259h7v3h-7z" fill="#00ffff"/>
<path d="M432 262h2v1h-2z" fill="#ffffff"/>
<path d="M439 260h6v1h-6zM437 266h9v3h-9z" fill="#00ffff"/>
<path d="M436 269h2v1h-2z" fill="#ffffff"/>
<path d="M444 267h2v1h-2zM444 260h1v8h-1z" fill="#00ffff"/>
<path d="M452 279h8v1h-8zM452 281h8v1h-8zM452 279h1v3h-1zM459 279h1v3h-1z" fill="#a8a8a8"/>
<path d="M451 283h10v1h-10z" fill="#ffffff"/>
<path d="M462 281h4v2h-4z" fill="#ffff00"/>
<path d="M521 219h8v2h-8z" fill="#00ffff"/>
<path d="M520 221h2v1h-2z" fill="#ffffff"/>
<path d="M521 228h13v2h-13z" fill="#00ffff"/>
<path d="M520 230h2v1h-2z" fill="#ffffff"/>
<path d="M528 220h3v1h-3zM529 220h1v10h-1zM532 220h1v8h-1zM530 228h4v1h-4z" fill="#00ffff"/>
<path d="M535 219h22v1h-22zM535 219h1v5h-1zM556 219h1v5h-1zM527 223h9v1h-9zM556 223h9v1h-9zM527 223h1v5h-1zM564 223h1v5h-1zM527 227h39v2h-39z" fill="#ffff00"/>
<path d="M542 202h1v25h-1zM549 202h1v25h-1zM544 211h1v16h-1zM546 211h1v16h-1zM544 211h3v1h-3zM540 225h13v1h-13z" fill="#ff0000"/>
<path d="M539 223h2v2h-2zM551 223h2v2h-2z" fill="#00ffff"/>
<path d="M551 202h1v19h-1zM550 202h4v1h-4zM550 211h4v1h-4zM550 220h4v1h-4z" fill="#00ff00"/>
<path d="M549 206h2v3h-2zM549 215h2v3h-2z" fill="#00ffff"/>
<path d="M570 219h1v12h-1zM567 219h6v1h-6zM567 230h6v1h-6zM567 224h6v1h-6z" fill="#00ff00"/>
<path d="M569 221h3v2h-3zM569 227h3v2h-3zM574 224h6v2h-6z" fill="#00ffff"/>
<path d="M571 226h10v1h-10z" fill="#ffffff"/>
<path d="M526 237h41v1h-41zM526 276h41v1h-41zM526 237h1v40h-1zM566 237h1v40h-1zM527 238h39v1h-39zM527 275h39v1h-39zM527 238h1v38h-1zM565 238h1v38h-1zM529 239h1v36h-1zM535 245h23v1h-23zM535 267h23v1h-23zM535 245h1v23h-1zM557 245h1v23h-1z" fill="#ffff00"/>
<path d="M527 261h1v1h-1zM527 262h6v1h-6zM527 263h8v1h-8zM527 264h10v1h-10zM527 265h11v1h-11zM527 266h12v1h-12zM527 267h12v1h-12zM527 268h13v1h-13zM527 269h14v1h-14zM527 270h14v1h-14zM527 271h14v1h-14zM527 272h15v1h-15zM527 273h15v1h-15zM527 274h15v1h-15zM527 275h15v1h-15z" fill="#ff0000"/>
<path d="M529 263h1v1h-1zM532 263h1v1h-1zM535 263h1v1h-1zM538 263h1v1h-1zM529 266h1v1h-1zM532 266h1v1h-1zM535 266h1v1h-1zM538 266h1v1h-1zM529 269h1v1h-1zM532 269h1v1h-1zM535 269h1v1h-1zM538 269h1v1h-1zM529 272h1v1h-1zM532 272h1v1h-1zM535 272h1v1h-1zM538 272h1v1h-1z" fill="#000000"/>
<path d="M542 252h9v1h-9zM542 260h9v1h-9zM542 252h1v9h-1zM550 252h1v9h-1z" fill="#ffff00"/>
<path d="M543 253h7v1h-7zM543 259h7v1h-7zM543 253h1v7h-1zM549 253h1v7h-1zM543 253h7v1h-7zM543 254h7v1h-7z" fill="#ff0000"/>
<path d="M527 283h39v1h-39zM527 287h39v1h-39zM527 277h1v13h-1zM535 277h1v13h-1zM545 277h1v13h-1zM557 277h1v13h-1zM565 277h1v13h-1zM545 271h1v19h-1z" fill="#00ff00"/>
<path d="M530 284h3v2h-3z" fill="#00ffff"/>
<path d="M534 280h1v4h-1z" fill="#00ff00"/>
<path d="M539 284h3v2h-3z" fill="#00ffff"/>
<path d="M543 280h1v4h-1z" fill="#00ff00"/>
<path d="M550 284h3v2h-3z" fill="#00ffff"/>
<path d="M554 280h1v4h-1z" fill="#00ff00"/>
<path d="M560 284h3v2h-3z" fill="#00ffff"/>
<path d="M564 280h1v4h-1z" fill="#00ff00"/>
<path d="M524 282h3v2h-3zM566 282h3v2h-3z" fill="#00ffff"/>
<path d="M571 237h1v40h-1zM575 237h1v40h-1zM567 237h10v1h-10zM567 245h10v1h-10zM567 256h10v1h-10zM567 267h10v1h-10zM567 276h10v1h-10zM561 256h17v1h-17z" fill="#00ff00"/>
<path d="M570 240h3v3h-3zM574 249h3v3h-3zM570 260h3v3h-3zM574 270h3v3h-3zM570 234h3v3h-3zM570 277h3v3h-3zM517 268h7v2h-7z" fill="#00ffff"/>
<path d="M516 270h2v1h-2z" fill="#ffffff"/>
<path d="M523 269h8v1h-8zM524 277h9v3h-9z" fill="#00ffff"/>
<path d="M523 280h2v1h-2z" fill="#ffffff"/>
<path d="M530 278h3v1h-3zM530 269h1v10h-1z" fill="#00ffff"/>
<path d="M543 291h6v1h-6zM543 294h6v1h-6zM543 291h1v4h-1zM548 291h1v4h-1z" fill="#a8a8a8"/>
<path d="M541 295h10v1h-10z" fill="#ffffff"/>
<path d="M552 293h5v2h-5z" fill="#ffff00"/>
<path d="M618 243h7v2h-7z" fill="#00ffff"/>
<path d="M617 245h2v1h-2z" fill="#ffffff"/>
<path d="M618 251h9v1h-9z" fill="#00ffff"/>
<path d="M617 252h2v1h-2z" fill="#ffffff"/>
<path d="M624 244h3v1h-3zM625 244h1v7h-1zM628 244h1v5h-1zM626 251h1v1h-1z" fill="#00ffff"/>
<path d="M629 243h18v1h-18zM629 243h1v4h-1zM646 243h1v4h-1zM623 246h7v1h-7zM646 246h6v1h-6zM623 246h1v3h-1zM651 246h1v3h-1zM622 248h31v2h-31z" fill="#ffff00"/>
<path d="M635 229h1v19h-1zM640 229h1v19h-1zM633 246h11v1h-11z" fill="#ff0000"/>
<path d="M632 244h2v2h-2zM642 244h2v2h-2z" fill="#00ffff"/>
<path d="M636 236h3v12h-3z" fill="#ff0000"/>
<path d="M642 229h1v16h-1zM641 229h4v1h-4zM641 238h4v1h-4zM641 244h4v1h-4z" fill="#00ff00"/>
<path d="M640 233h2v3h-2zM640 242h2v3h-2z" fill="#00ffff"/>
<path d="M657 243h1v9h-1zM654 243h6v1h-6zM654 251h6v1h-6zM654 247h6v1h-6z" fill="#00ff00"/>
<path d="M656 245h3v2h-3zM656 248h3v2h-3zM659 247h6v2h-6z" fill="#00ffff"/>
<path d="M656 249h10v1h-10z" fill="#ffffff"/>
<path d="M622 256h31v1h-31zM622 312h31v1h-31zM622 256h1v57h-1zM652 256h1v57h-1zM623 257h29v1h-29zM623 311h29v1h-29zM623 257h1v55h-1zM651 257h1v55h-1zM625 258h1v53h-1zM629 263h19v1h-19zM629 305h19v1h-19zM629 263h1v43h-1zM647 263h1v43h-1z" fill="#ffff00"/>
<path d="M623 302h1v1h-1zM623 303h6v1h-6zM623 304h7v1h-7zM623 305h8v1h-8zM623 306h9v1h-9zM623 307h10v1h-10zM623 308h10v1h-10zM623 309h11v1h-11zM623 310h11v1h-11zM623 311h11v1h-11z" fill="#ff0000"/>
<path d="M625 304h1v1h-1zM628 304h1v1h-1zM631 304h1v1h-1zM625 307h1v1h-1zM628 307h1v1h-1zM631 307h1v1h-1zM625 310h1v1h-1zM628 310h1v1h-1zM631 310h1v1h-1z" fill="#000000"/>
<path d="M634 269h8v1h-8zM634 276h8v1h-8zM634 269h1v8h-1zM641 269h1v8h-1z" fill="#ffff00"/>
<path d="M635 270h6v1h-6zM635 275h6v1h-6zM635 270h1v6h-1zM640 270h1v6h-1zM635 270h6v1h-6zM635 271h6v1h-6z" fill="#ff0000"/>
<path d="M634 294h8v1h-8zM634 301h8v1h-8zM634 294h1v8h-1zM641 294h1v8h-1z" fill="#ffff00"/>
<path d="M635 295h6v1h-6zM635 300h6v1h-6zM635 295h1v6h-1zM640 295h1v6h-1zM635 295h6v1h-6zM635 296h6v1h-6z" fill="#ff0000"/>
<path d="M623 317h30v1h-30zM623 321h30v1h-30zM623 313h1v11h-1zM629 313h1v11h-1zM637 313h1v11h-1zM646 313h1v11h-1zM652 313h1v11h-1zM637 307h1v17h-1z" fill="#00ff00"/>
<path d="M625 318h3v2h-3zM632 318h3v2h-3z" fill="#00ffff"/>
<path d="M636 314h1v4h-1z" fill="#00ff00"/>
<path d="M640 318h3v2h-3z" fill="#00ffff"/>
<path d="M644 314h1v4h-1z" fill="#00ff00"/>
<path d="M648 318h3v2h-3zM620 316h3v2h-3zM653 316h3v2h-3z" fill="#00ffff"/>
<path d="M657 257h1v56h-1zM661 257h1v56h-1zM653 257h10v1h-10zM653 264h10v1h-10zM653 272h10v1h-10zM653 284h10v1h-10zM653 297h10v1h-10zM653 305h10v1h-10zM653 312h10v1h-10zM647 272h17v1h-17zM647 297h17v1h-17z" fill="#00ff00"/>
<path d="M656 259h3v3h-3zM660 267h3v3h-3zM656 277h3v3h-3zM660 289h3v3h-3zM656 300h3v3h-3zM660 307h3v3h-3zM656 254h3v3h-3zM656 313h3v3h-3zM615 304h7v2h-7z" fill="#00ffff"/>
<path d="M614 306h2v1h-2z" fill="#ffffff"/>
<path d="M621 305h6v1h-6z" fill="#00ffff"/>
<path d="M635 324h5v1h-5zM635 326h5v1h-5zM635 324h1v3h-1zM639 324h1v3h-1z" fill="#a8a8a8"/>
<path d="M633 327h10v1h-10z" fill="#ffffff"/>
<path d="M644 326h4v2h-4z" fill="#ffff00"/>
<path d="M346 296h7v2h-7z" fill="#00ffff"/>
<path d="M345 298h2v1h-2z" fill="#ffffff"/>
<path d="M346 305h11v2h-11z" fill="#00ffff"/>
<path d="M345 307h2v1h-2z" fill="#ffffff"/>
<path d="M352 297h4v1h-4zM354 297h1v9h-1zM357 297h1v7h-1zM355 305h2v1h-2z" fill="#00ffff"/>
<path d="M357 296h20v1h-20zM357 296h1v4h-1zM376 296h1v4h-1zM352 299h6v1h-6zM376 299h6v1h-6zM352 299h1v5h-1zM381 299h1v5h-1zM351 303h32v2h-32z" fill="#ffff00"/>
<path d="M363 278h1v25h-1zM368 278h1v25h-1zM366 288h1v15h-1zM367 288h1v15h-1zM366 288h2v1h-2zM361 301h11v1h-11z" fill="#ff0000"/>
<path d="M360 299h2v2h-2zM370 299h2v2h-2z" fill="#00ffff"/>
<path d="M371 278h1v20h-1zM370 278h4v1h-4zM370 287h4v1h-4zM370 297h4v1h-4z" fill="#00ff00"/>
<path d="M369 282h2v3h-2zM369 291h2v3h-2z" fill="#00ffff"/>
<path d="M387 296h1v11h-1zM384 296h6v1h-6zM384 306h6v1h-6zM384 301h6v1h-6z" fill="#00ff00"/>
<path d="M386 298h3v2h-3zM386 303h3v2h-3zM390 300h6v2h-6z" fill="#00ffff"/>
<path d="M387 302h10v1h-10z" fill="#ffffff"/>
<path d="M351 313h32v1h-32zM351 377h32v1h-32zM351 313h1v65h-1zM382 313h1v65h-1zM352 314h30v1h-30zM352 376h30v1h-30zM352 314h1v63h-1zM381 314h1v63h-1zM354 315h1v61h-1zM357 319h20v1h-20zM357 371h20v1h-20zM357 319h1v53h-1zM376 319h1v53h-1z" fill="#ffff00"/>
<path d="M352 367h1v1h-1zM352 368h5v1h-5zM352 369h7v1h-7zM352 370h8v1h-8zM352 371h8v1h-8zM352 372h9v1h-9zM352 373h9v1h-9zM352 374h10v1h-10zM352 375h10v1h-10zM352 376h10v1h-10z" fill="#ff0000"/>
<path d="M354 369h1v1h-1zM357 369h1v1h-1zM354 372h1v1h-1zM357 372h1v1h-1zM354 375h1v1h-1zM357 375h1v1h-1z" fill="#000000"/>
<path d="M362 324h10v1h-10zM362 333h10v1h-10zM362 324h1v10h-1zM371 324h1v10h-1z" fill="#ffff00"/>
<path d="M363 325h8v1h-8zM363 332h8v1h-8zM363 325h1v8h-1zM370 325h1v8h-1zM363 325h8v1h-8zM363 326h8v1h-8z" fill="#ff0000"/>
<path d="M362 358h10v1h-10zM362 367h10v1h-10zM362 358h1v10h-1zM371 358h1v10h-1z" fill="#ffff00"/>
<path d="M363 359h8v1h-8zM363 366h8v1h-8zM363 359h1v8h-1zM370 359h1v8h-1zM363 359h8v1h-8zM363 360h8v1h-8z" fill="#ff0000"/>
<path d="M352 383h30v1h-30zM352 387h30v1h-30zM352 378h1v12h-1zM357 378h1v12h-1zM366 378h1v12h-1zM376 378h1v12h-1zM381 378h1v12h-1zM366 372h1v18h-1z" fill="#00ff00"/>
<path d="M353 384h3v2h-3zM360 384h3v2h-3z" fill="#00ffff"/>
<path d="M364 380h1v4h-1z" fill="#00ff00"/>
<path d="M370 384h3v2h-3z" fill="#00ffff"/>
<path d="M374 380h1v4h-1z" fill="#00ff00"/>
<path d="M377 384h3v2h-3zM349 382h3v2h-3zM382 382h3v2h-3z" fill="#00ffff"/>
<path d="M387 314h1v64h-1zM391 314h1v64h-1zM383 314h10v1h-10zM383 320h10v1h-10zM383 328h10v1h-10zM383 345h10v1h-10zM383 362h10v1h-10zM383 371h10v1h-10zM383 377h10v1h-10zM377 328h17v1h-17zM377 362h17v1h-17z" fill="#00ff00"/>
<path d="M386 316h3v3h-3zM390 323h3v3h-3zM386 335h3v3h-3zM390 352h3v3h-3zM386 365h3v3h-3zM390 373h3v3h-3zM386 311h3v3h-3zM386 378h3v3h-3zM342 373h9v2h-9z" fill="#00ffff"/>
<path d="M341 375h2v1h-2z" fill="#ffffff"/>
<path d="M350 374h6v1h-6zM347 379h9v2h-9z" fill="#00ffff"/>
<path d="M346 381h2v1h-2z" fill="#ffffff"/>
<path d="M355 380h1v1h-1zM355 374h1v7h-1z" fill="#00ffff"/>
<path d="M363 392h7v1h-7zM363 394h7v1h-7zM363 392h1v3h-1zM369 392h1v3h-1z" fill="#a8a8a8"/>
<path d="M362 395h10v1h-10z" fill="#ffffff"/>
<path d="M373 394h4v2h-4z" fill="#ffff00"/>
<path d="M416 318h6v2h-6z" fill="#00ffff"/>
<path d="M415 320h2v1h-2z" fill="#ffffff"/>
<path d="M416 327h10v2h-10z" fill="#00ffff"/>
<path d="M415 329h2v1h-2z" fill="#ffffff"/>
<path d="M421 319h4v1h-4zM423 319h1v9h-1zM426 319h1v7h-1zM424 327h2v1h-2z" fill="#00ffff"/>
<path d="M429 317h50v1h-50zM429 317h1v5h-1zM478 317h1v5h-1zM421 321h9v1h-9zM478 321h8v1h-8zM421 321h1v5h-1zM485 321h1v5h-1zM420 325h69v2h-69z" fill="#ffff00"/>
<path d="M437 300h1v26h-1zM443 300h1v26h-1zM439 310h1v16h-1zM441 310h1v16h-1zM439 310h3v1h-3zM435 324h12v1h-12z" fill="#ff0000"/>
<path d="M434 322h2v2h-2zM445 322h2v2h-2z" fill="#00ffff"/>
<path d="M463 300h1v26h-1zM470 300h1v26h-1zM466 310h1v16h-1zM468 310h1v16h-1zM466 310h3v1h-3zM461 324h13v1h-13z" fill="#ff0000"/>
<path d="M460 322h2v2h-2zM472 322h2v2h-2z" fill="#00ffff"/>
<path d="M446 300h1v19h-1zM445 300h4v1h-4zM445 309h4v1h-4zM445 318h4v1h-4z" fill="#00ff00"/>
<path d="M444 304h2v3h-2zM444 313h2v3h-2z" fill="#00ffff"/>
<path d="M472 300h1v19h-1zM471 300h4v1h-4zM471 309h4v1h-4zM471 318h4v1h-4z" fill="#00ff00"/>
<path d="M470 304h2v3h-2zM470 313h2v3h-2z" fill="#00ffff"/>
<path d="M492 317h1v12h-1zM488 317h7v1h-7zM488 328h7v1h-7zM488 322h7v1h-7z" fill="#00ff00"/>
<path d="M491 319h3v2h-3zM491 325h3v2h-3zM496 323h6v2h-6z" fill="#00ffff"/>
<path d="M493 325h10v1h-10z" fill="#ffffff"/>
<path d="M420 335h68v1h-68zM420 375h68v1h-68zM420 335h1v41h-1zM487 335h1v41h-1zM421 336h66v1h-66zM421 374h66v1h-66zM421 336h1v39h-1zM486 336h1v39h-1zM423 337h1v37h-1zM429 344h51v1h-51zM429 366h51v1h-51zM429 344h1v23h-1zM479 344h1v23h-1z" fill="#ffff00"/>
<path d="M421 362h1v1h-1zM421 363h7v1h-7zM421 364h9v1h-9zM421 365h10v1h-10zM421 366h11v1h-11zM421 367h12v1h-12zM421 368h13v1h-13zM421 369h14v1h-14zM421 370h14v1h-14zM421 371h15v1h-15zM421 372h15v1h-15zM421 373h15v1h-15zM421 374h15v1h-15z" fill="#ff0000"/>
<path d="M423 364h1v1h-1zM426 364h1v1h-1zM429 364h1v1h-1zM432 364h1v1h-1zM423 367h1v1h-1zM426 367h1v1h-1zM429 367h1v1h-1zM432 367h1v1h-1zM423 370h1v1h-1zM426 370h1v1h-1zM429 370h1v1h-1zM432 370h1v1h-1zM423 373h1v1h-1zM426 373h1v1h-1zM429 373h1v1h-1zM432 373h1v1h-1z" fill="#000000"/>
<path d="M436 351h10v1h-10zM436 360h10v1h-10zM436 351h1v10h-1zM445 351h1v10h-1z" fill="#ffff00"/>
<path d="M437 352h8v1h-8zM437 359h8v1h-8zM437 352h1v8h-1zM444 352h1v8h-1zM437 352h8v1h-8zM437 353h8v1h-8z" fill="#ff0000"/>
<path d="M463 351h9v1h-9zM463 360h9v1h-9zM463 351h1v10h-1zM471 351h1v10h-1z" fill="#ffff00"/>
<path d="M464 352h7v1h-7zM464 359h7v1h-7zM464 352h1v8h-1zM470 352h1v8h-1zM464 352h7v1h-7zM464 353h7v1h-7z" fill="#ff0000"/>
<path d="M421 383h66v1h-66zM421 387h66v1h-66zM421 376h1v14h-1zM429 376h1v14h-1zM440 376h1v14h-1zM466 376h1v14h-1zM479 376h1v14h-1zM486 376h1v14h-1zM440 370h1v20h-1zM466 370h1v20h-1z" fill="#00ff00"/>
<path d="M424 384h3v2h-3z" fill="#00ffff"/>
<path d="M428 380h1v4h-1z" fill="#00ff00"/>
<path d="M433 384h3v2h-3z" fill="#00ffff"/>
<path d="M437 380h1v4h-1z" fill="#00ff00"/>
<path d="M452 384h3v2h-3z" fill="#00ffff"/>
<path d="M456 380h1v4h-1z" fill="#00ff00"/>
<path d="M471 384h3v2h-3z" fill="#00ffff"/>
<path d="M475 380h1v4h-1z" fill="#00ff00"/>
<path d="M481 384h3v2h-3zM418 382h3v2h-3zM487 382h3v2h-3z" fill="#00ffff"/>
<path d="M494 336h1v40h-1zM497 336h1v40h-1zM488 336h11v1h-11zM488 344h11v1h-11zM488 355h11v1h-11zM488 367h11v1h-11zM488 375h11v1h-11zM482 355h18v1h-18z" fill="#00ff00"/>
<path d="M493 339h3v3h-3zM496 348h3v3h-3zM493 360h3v3h-3zM496 370h3v3h-3zM493 333h3v3h-3zM493 376h3v3h-3zM411 364h8v2h-8z" fill="#00ffff"/>
<path d="M410 366h2v1h-2z" fill="#ffffff"/>
<path d="M418 365h7v1h-7z" fill="#00ffff"/>
<path d="M451 390h6v1h-6zM451 393h6v1h-6zM451 390h1v4h-1zM456 390h1v4h-1z" fill="#a8a8a8"/>
<path d="M449 394h10v1h-10z" fill="#ffffff"/>
<path d="M460 393h5v1h-5z" fill="#ffff00"/>
<path d="M523 326h7v3h-7z" fill="#00ffff"/>
<path d="M522 329h2v1h-2z" fill="#ffffff"/>
<path d="M523 335h12v2h-12z" fill="#00ffff"/>
<path d="M522 337h2v1h-2z" fill="#ffffff"/>
<path d="M529 327h3v1h-3zM530 327h1v9h-1zM533 327h1v7h-1zM531 335h4v1h-4z" fill="#00ffff"/>
<path d="M535 325h30v1h-30zM535 325h1v5h-1zM564 325h1v5h-1zM528 329h8v1h-8zM564 329h5v1h-5zM528 329h1v5h-1zM568 329h1v5h-1zM527 333h45v2h-45z" fill="#ffff00"/>
<path d="M541 308h1v25h-1zM548 308h1v25h-1zM543 318h1v15h-1zM546 318h1v15h-1zM543 318h4v1h-4zM539 331h13v1h-13z" fill="#ff0000"/>
<path d="M538 329h2v2h-2zM550 329h2v2h-2z" fill="#00ffff"/>
<path d="M550 308h1v25h-1zM556 308h1v25h-1zM552 318h1v15h-1zM554 318h1v15h-1zM552 318h3v1h-3zM548 331h12v1h-12z" fill="#ff0000"/>
<path d="M547 329h2v2h-2zM558 329h2v2h-2z" fill="#00ffff"/>
<path d="M559 308h1v19h-1zM558 308h4v1h-4zM558 317h4v1h-4zM558 326h4v1h-4z" fill="#00ff00"/>
<path d="M557 312h2v3h-2zM557 321h2v3h-2z" fill="#00ffff"/>
<path d="M575 325h1v12h-1zM571 325h7v1h-7zM571 336h7v1h-7zM571 330h7v1h-7z" fill="#00ff00"/>
<path d="M574 327h3v2h-3zM574 333h3v2h-3zM578 329h6v2h-6z" fill="#00ffff"/>
<path d="M575 331h10v1h-10z" fill="#ffffff"/>
<path d="M528 343h44v1h-44zM528 377h44v1h-44zM528 343h1v35h-1zM571 343h1v35h-1zM529 344h42v1h-42zM529 376h42v1h-42zM529 344h1v33h-1zM570 344h1v33h-1zM531 345h1v31h-1zM535 350h30v1h-30zM535 370h30v1h-30zM535 350h1v21h-1zM564 350h1v21h-1z" fill="#ffff00"/>
<path d="M530 365h1v1h-1zM530 366h5v1h-5zM530 367h6v1h-6zM530 368h7v1h-7zM530 369h8v1h-8zM530 370h9v1h-9zM530 371h9v1h-9zM530 372h10v1h-10zM530 373h10v1h-10zM530 374h10v1h-10zM530 375h10v1h-10z" fill="#ff0000"/>
<path d="M532 367h1v1h-1zM535 367h1v1h-1zM532 370h1v1h-1zM535 370h1v1h-1zM532 373h1v1h-1zM535 373h1v1h-1z" fill="#000000"/>
<path d="M541 356h17v1h-17zM541 364h17v1h-17zM541 356h1v9h-1zM557 356h1v9h-1zM541 356h17v1h-17zM541 357h17v1h-17z" fill="#ff0000"/>
<path d="M548 355h2v11h-2z" fill="#ffff00"/>
<path d="M543 363h1v1h-1zM545 363h1v1h-1zM547 363h1v1h-1zM549 363h1v1h-1zM551 363h1v1h-1zM553 363h1v1h-1zM555 363h1v1h-1z" fill="#ff0000"/>
<path d="M529 383h41v1h-41zM529 387h41v1h-41zM529 378h1v12h-1zM535 378h1v12h-1zM544 378h1v12h-1zM553 378h1v12h-1zM564 378h1v12h-1zM569 378h1v12h-1zM544 372h1v18h-1zM553 372h1v18h-1z" fill="#00ff00"/>
<path d="M531 384h3v2h-3zM538 384h3v2h-3z" fill="#00ffff"/>
<path d="M542 380h1v4h-1z" fill="#00ff00"/>
<path d="M547 384h3v2h-3z" fill="#00ffff"/>
<path d="M551 380h1v4h-1z" fill="#00ff00"/>
<path d="M557 384h3v2h-3z" fill="#00ffff"/>
<path d="M561 380h1v4h-1z" fill="#00ff00"/>
<path d="M565 384h3v2h-3zM526 382h3v2h-3zM570 382h3v2h-3z" fill="#00ffff"/>
<path d="M575 343h1v35h-1zM579 343h1v35h-1zM572 343h9v1h-9zM572 350h9v1h-9zM572 360h9v1h-9zM572 370h9v1h-9zM572 377h9v1h-9zM566 359h16v1h-16z" fill="#00ff00"/>
<path d="M574 345h3v3h-3zM578 354h3v3h-3zM574 364h3v3h-3zM578 372h3v3h-3zM574 340h3v3h-3zM574 378h3v3h-3zM520 369h8v2h-8z" fill="#00ffff"/>
<path d="M519 371h2v1h-2z" fill="#ffffff"/>
<path d="M527 370h6v1h-6zM524 377h9v2h-9z" fill="#00ffff"/>
<path d="M523 379h2v1h-2z" fill="#ffffff"/>
<path d="M532 378h1v1h-1zM532 370h1v9h-1z" fill="#00ffff"/>
<path d="M547 390h5v1h-5zM547 393h5v1h-5zM547 390h1v4h-1zM551 390h1v4h-1z" fill="#a8a8a8"/>
<path d="M545 394h10v1h-10z" fill="#ffffff"/>
<path d="M556 393h4v1h-4z" fill="#ffff00"/>
<path d="M750 216h294v4h-294z" fill="#00ff00"/>
<path d="M754 217h5v2h-5zM764 217h5v2h-5zM774 217h5v2h-5zM784 217h5v2h-5zM794 217h5v2h-5zM804 217h5v2h-5zM814 217h5v2h-5zM824 217h5v2h-5zM834 217h5v2h-5zM844 217h5v2h-5zM854 217h5v2h-5zM864 217h5v2h-5zM874 217h5v2h-5zM884 217h5v2h-5zM894 217h5v2h-5zM904 217h5v2h-5zM914 217h5v2h-5zM924 217h5v2h-5zM934 217h5v2h-5zM944 217h5v2h-5zM954 217h5v2h-5zM964 217h5v2h-5zM974 217h5v2h-5zM984 217h5v2h-5zM994 217h5v2h-5zM1004 217h5v2h-5zM1014 217h5v2h-5zM1024 217h5v2h-5zM1034 217h5v2h-5z" fill="#000000"/>
<path d="M895 214h5v2h-5zM750 210h1v13h-1z" fill="#00ff00"/>
<path d="M750 211h2v2h-2z" fill="#ffffff"/>
<path d="M789 210h1v13h-1z" fill="#00ff00"/>
<path d="M789 211h2v2h-2z" fill="#ffffff"/>
<path d="M828 210h1v13h-1z" fill="#00ff00"/>
<path d="M828 211h2v2h-2z" fill="#ffffff"/>
<path d="M848 210h1v13h-1z" fill="#00ff00"/>
<path d="M848 211h2v2h-2z" fill="#ffffff"/>
<path d="M870 210h1v13h-1z" fill="#00ff00"/>
<path d="M870 211h2v2h-2z" fill="#ffffff"/>
<path d="M909 210h1v13h-1z" fill="#00ff00"/>
<path d="M909 211h2v2h-2z" fill="#ffffff"/>
<path d="M947 210h1v13h-1z" fill="#00ff00"/>
<path d="M947 211h2v2h-2z" fill="#ffffff"/>
<path d="M966 210h1v13h-1z" fill="#00ff00"/>
<path d="M966 211h2v2h-2z" fill="#ffffff"/>
<path d="M986 210h1v13h-1z" fill="#00ff00"/>
<path d="M986 211h2v2h-2z" fill="#ffffff"/>
<path d="M1001 210h1v13h-1z" fill="#00ff00"/>
<path d="M1001 211h2v2h-2z" fill="#ffffff"/>
<path d="M1009 210h1v13h-1z" fill="#00ff00"/>
<path d="M1009 211h2v2h-2z" fill="#ffffff"/>
<path d="M1043 210h1v13h-1z" fill="#00ff00"/>
<path d="M1043 211h2v2h-2zM826 211h2v2h-2zM830 211h2v2h-2zM996 211h2v2h-2z" fill="#ffffff"/>
<path d="M750 220h1v17h-1zM760 220h1v17h-1zM770 220h1v17h-1zM780 220h1v17h-1zM789 220h1v17h-1zM799 220h1v17h-1zM808 220h1v17h-1zM818 220h1v17h-1zM828 220h1v17h-1zM848 220h1v17h-1zM870 220h1v17h-1zM880 220h1v17h-1zM890 220h1v17h-1zM899 220h1v17h-1zM909 220h1v17h-1zM918 220h1v17h-1zM928 220h1v17h-1zM938 220h1v17h-1zM947 220h1v17h-1zM957 220h1v17h-1zM966 220h1v17h-1zM976 220h1v17h-1zM986 220h1v17h-1zM827 220h1v17h-1zM746 226h35v1h-35zM791 226h3v1h-3zM805 226h46v1h-46zM858 226h4v1h-4zM875 226h46v1h-46zM932 226h3v1h-3zM944 226h47v1h-47z" fill="#a8a8a8"/>
<path d="M740 226h4v138h-4z" fill="#00ff00"/>
<path d="M741 230h2v6h-2zM741 241h2v6h-2zM741 252h2v6h-2zM741 263h2v6h-2zM741 274h2v6h-2zM741 285h2v6h-2zM741 296h2v6h-2zM741 307h2v6h-2zM741 318h2v6h-2zM741 329h2v6h-2zM741 340h2v6h-2zM741 351h2v6h-2z" fill="#000000"/>
<path d="M735 226h2v2h-2z" fill="#ffffff"/>
<path d="M736 226h14v1h-14z" fill="#a8a8a8"/>
<path d="M737 226h9v1h-9z" fill="#00ff00"/>
<path d="M735 237h2v2h-2z" fill="#ffffff"/>
<path d="M736 237h14v1h-14z" fill="#a8a8a8"/>
<path d="M737 237h9v1h-9z" fill="#00ff00"/>
<path d="M735 266h2v2h-2z" fill="#ffffff"/>
<path d="M736 266h14v1h-14z" fill="#a8a8a8"/>
<path d="M737 266h9v1h-9z" fill="#00ff00"/>
<path d="M735 276h2v2h-2z" fill="#ffffff"/>
<path d="M736 276h14v1h-14z" fill="#a8a8a8"/>
<path d="M737 276h9v1h-9z" fill="#00ff00"/>
<path d="M735 290h2v2h-2z" fill="#ffffff"/>
<path d="M736 290h14v1h-14z" fill="#a8a8a8"/>
<path d="M737 290h9v1h-9z" fill="#00ff00"/>
<path d="M735 303h2v2h-2z" fill="#ffffff"/>
<path d="M736 303h14v1h-14z" fill="#a8a8a8"/>
<path d="M737 303h9v1h-9z" fill="#00ff00"/>
<path d="M735 317h2v2h-2z" fill="#ffffff"/>
<path d="M736 317h14v1h-14z" fill="#a8a8a8"/>
<path d="M737 317h9v1h-9z" fill="#00ff00"/>
<path d="M735 330h2v2h-2z" fill="#ffffff"/>
<path d="M736 330h14v1h-14z" fill="#a8a8a8"/>
<path d="M737 330h9v1h-9z" fill="#00ff00"/>
<path d="M735 344h2v2h-2z" fill="#ffffff"/>
<path d="M736 344h14v1h-14z" fill="#a8a8a8"/>
<path d="M737 344h9v1h-9z" fill="#00ff00"/>
<path d="M735 356h2v2h-2z" fill="#ffffff"/>
<path d="M736 356h14v1h-14z" fill="#a8a8a8"/>
<path d="M737 356h9v1h-9z" fill="#00ff00"/>
<path d="M750 246h79v2h-79zM750 256h79v2h-79zM759 237h2v40h-2zM769 237h2v40h-2zM779 237h2v40h-2zM798 237h2v40h-2zM807 237h2v40h-2zM817 237h2v40h-2z" fill="#009090"/>
<path d="M749 235h81v1h-81zM749 236h81v1h-81zM749 239h81v1h-81z" fill="#00ffff"/>
<path d="M750 237h79v1h-79z" fill="#a8a8a8"/>
<path d="M753 239h5v2h-5zM763 239h5v2h-5zM783 239h4v2h-4z" fill="#00ffff"/>
<path d="M784 239h2v1h-2z" fill="#000000"/>
<path d="M802 239h4v2h-4z" fill="#00ffff"/>
<path d="M803 239h2v1h-2z" fill="#000000"/>
<path d="M821 239h5v2h-5zM749 264h81v1h-81zM749 265h81v1h-81zM749 268h81v1h-81z" fill="#00ffff"/>
<path d="M750 266h79v1h-79z" fill="#a8a8a8"/>
<path d="M753 268h5v2h-5zM763 268h5v2h-5zM783 268h4v2h-4zM802 268h4v2h-4zM821 268h5v2h-5z" fill="#00ffff"/>
<path d="M822 268h3v1h-3z" fill="#000000"/>
<path d="M749 274h81v1h-81zM749 275h81v1h-81zM749 278h81v1h-81z" fill="#00ffff"/>
<path d="M750 276h79v1h-79z" fill="#a8a8a8"/>
<path d="M763 278h5v2h-5zM802 278h4v2h-4zM811 278h5v2h-5zM748 236h1v42h-1zM749 236h1v42h-1zM752 236h1v42h-1z" fill="#00ffff"/>
<path d="M750 237h1v40h-1z" fill="#a8a8a8"/>
<path d="M787 236h1v42h-1zM788 236h1v42h-1zM791 236h1v42h-1z" fill="#00ffff"/>
<path d="M789 237h1v40h-1z" fill="#a8a8a8"/>
<path d="M826 236h1v42h-1zM827 236h1v42h-1zM830 236h1v42h-1z" fill="#00ffff"/>
<path d="M828 237h1v40h-1z" fill="#a8a8a8"/>
<path d="M754 239h2v1h-2zM764 239h4v1h-4zM773 235h4v1h-4zM783 239h3v1h-3zM793 239h3v1h-3zM754 268h3v1h-3zM773 264h4v1h-4zM793 268h2v1h-2zM812 268h2v1h-2zM822 268h3v1h-3zM754 278h2v1h-2zM753 274h4v1h-4zM763 274h4v1h-4zM773 274h4v1h-4zM793 278h2v1h-2zM792 274h4v1h-4zM802 278h4v1h-4zM822 278h3v1h-3zM821 274h4v1h-4zM752 241h1v3h-1zM752 251h1v3h-1zM752 270h1v3h-1zM791 270h1v3h-1zM830 241h1v3h-1zM826 260h1v3h-1zM830 270h1v3h-1z" fill="#000000"/>
<path d="M749 236h3v1h-3zM749 238h3v1h-3zM749 236h1v3h-1zM751 236h1v3h-1z" fill="#ffff00"/>
<path d="M750 237h1v1h-1z" fill="#a8a8a8"/>
<path d="M749 245h2v4h-2zM749 255h2v4h-2z" fill="#ff0000"/>
<path d="M749 265h3v1h-3zM749 267h3v1h-3zM749 265h1v3h-1zM751 265h1v3h-1z" fill="#ffff00"/>
<path d="M750 266h1v1h-1z" fill="#a8a8a8"/>
<path d="M749 275h3v1h-3zM749 277h3v1h-3zM749 275h1v3h-1zM751 275h1v3h-1z" fill="#ffff00"/>
<path d="M750 276h1v1h-1z" fill="#a8a8a8"/>
<path d="M758 236h4v2h-4zM758 245h4v4h-4zM758 255h4v4h-4zM758 265h1v2h-1zM760 265h2v2h-2zM758 275h1v2h-1zM760 275h2v2h-2z" fill="#ff0000"/>
<path d="M769 236h3v1h-3zM769 238h3v1h-3zM769 236h1v3h-1zM771 236h1v3h-1z" fill="#ffff00"/>
<path d="M770 237h1v1h-1z" fill="#a8a8a8"/>
<path d="M769 245h2v4h-2zM769 255h2v4h-2z" fill="#ff0000"/>
<path d="M769 265h3v1h-3zM769 267h3v1h-3zM769 265h1v3h-1zM771 265h1v3h-1z" fill="#ffff00"/>
<path d="M770 266h1v1h-1z" fill="#a8a8a8"/>
<path d="M769 275h3v1h-3zM769 277h3v1h-3zM769 275h1v3h-1zM771 275h1v3h-1z" fill="#ffff00"/>
<path d="M770 276h1v1h-1z" fill="#a8a8a8"/>
<path d="M778 236h4v2h-4zM778 245h4v4h-4zM778 255h4v4h-4zM778 265h1v2h-1zM780 265h2v2h-2zM778 275h4v2h-4z" fill="#ff0000"/>
<path d="M788 236h3v1h-3zM788 238h3v1h-3zM788 236h1v3h-1zM790 236h1v3h-1z" fill="#ffff00"/>
<path d="M789 237h1v1h-1z" fill="#a8a8a8"/>
<path d="M788 245h2v4h-2zM788 255h2v4h-2z" fill="#ff0000"/>
<path d="M788 265h3v1h-3zM788 267h3v1h-3zM788 265h1v3h-1zM790 265h1v3h-1z" fill="#ffff00"/>
<path d="M789 266h1v1h-1z" fill="#a8a8a8"/>
<path d="M788 275h3v1h-3zM788 277h3v1h-3zM788 275h1v3h-1zM790 275h1v3h-1z" fill="#ffff00"/>
<path d="M789 276h1v1h-1z" fill="#a8a8a8"/>
<path d="M797 236h1v2h-1zM799 236h2v2h-2zM797 245h4v4h-4zM797 255h4v4h-4zM797 265h4v2h-4zM797 275h1v2h-1zM799 275h2v2h-2z" fill="#ff0000"/>
<path d="M807 236h3v1h-3zM807 238h3v1h-3zM807 236h1v3h-1zM809 236h1v3h-1z" fill="#ffff00"/>
<path d="M808 237h1v1h-1z" fill="#a8a8a8"/>
<path d="M807 245h2v4h-2zM807 255h2v4h-2z" fill="#ff0000"/>
<path d="M807 265h3v1h-3zM807 267h3v1h-3zM807 265h1v3h-1zM809 265h1v3h-1z" fill="#ffff00"/>
<path d="M808 266h1v1h-1z" fill="#a8a8a8"/>
<path d="M807 275h3v1h-3zM807 277h3v1h-3zM807 275h1v3h-1zM809 275h1v3h-1z" fill="#ffff00"/>
<path d="M808 276h1v1h-1z" fill="#a8a8a8"/>
<path d="M816 236h1v2h-1zM818 236h2v2h-2zM816 245h4v4h-4zM816 255h4v4h-4zM816 265h4v2h-4zM816 275h4v2h-4z" fill="#ff0000"/>
<path d="M827 236h3v1h-3zM827 238h3v1h-3zM827 236h1v3h-1zM829 236h1v3h-1z" fill="#ffff00"/>
<path d="M828 237h1v1h-1z" fill="#a8a8a8"/>
<path d="M827 245h2v4h-2zM827 255h2v4h-2z" fill="#ff0000"/>
<path d="M827 265h3v1h-3zM827 267h3v1h-3zM827 265h1v3h-1zM829 265h1v3h-1z" fill="#ffff00"/>
<path d="M828 266h1v1h-1z" fill="#a8a8a8"/>
<path d="M827 275h3v1h-3zM827 277h3v1h-3zM827 275h1v3h-1zM829 275h1v3h-1z" fill="#ffff00"/>
<path d="M828 276h1v1h-1z" fill="#a8a8a8"/>
<path d="M828 251h21v2h-21z" fill="#009090"/>
<path d="M827 235h23v1h-23zM827 236h23v1h-23zM827 239h23v1h-23z" fill="#00ffff"/>
<path d="M828 237h21v1h-21z" fill="#a8a8a8"/>
<path d="M831 239h15v2h-15z" fill="#00ffff"/>
<path d="M832 239h13v1h-13z" fill="#000000"/>
<path d="M827 264h23v1h-23zM827 265h23v1h-23zM827 268h23v1h-23z" fill="#00ffff"/>
<path d="M828 266h21v1h-21z" fill="#a8a8a8"/>
<path d="M831 268h15v2h-15z" fill="#00ffff"/>
<path d="M832 268h13v1h-13z" fill="#000000"/>
<path d="M827 274h23v1h-23zM827 275h23v1h-23zM827 278h23v1h-23z" fill="#00ffff"/>
<path d="M828 276h21v1h-21z" fill="#a8a8a8"/>
<path d="M831 278h15v2h-15z" fill="#00ffff"/>
<path d="M832 278h13v1h-13z" fill="#000000"/>
<path d="M826 236h1v42h-1zM827 236h1v42h-1zM830 236h1v42h-1z" fill="#00ffff"/>
<path d="M828 237h1v40h-1z" fill="#a8a8a8"/>
<path d="M846 236h1v42h-1zM847 236h1v42h-1zM850 236h1v42h-1z" fill="#00ffff"/>
<path d="M848 237h1v40h-1z" fill="#a8a8a8"/>
<path d="M836 264h4v1h-4zM837 278h3v1h-3zM826 243h1v3h-1zM826 258h1v3h-1zM826 270h1v3h-1zM850 243h1v3h-1zM846 243h1v3h-1zM850 258h1v3h-1z" fill="#000000"/>
<path d="M827 236h3v1h-3zM827 238h3v1h-3zM827 236h1v3h-1zM829 236h1v3h-1z" fill="#ffff00"/>
<path d="M828 237h1v1h-1z" fill="#a8a8a8"/>
<path d="M827 250h2v4h-2z" fill="#ff0000"/>
<path d="M827 265h3v1h-3zM827 267h3v1h-3zM827 265h1v3h-1zM829 265h1v3h-1z" fill="#ffff00"/>
<path d="M828 266h1v1h-1z" fill="#a8a8a8"/>
<path d="M827 275h3v1h-3zM827 277h3v1h-3zM827 275h1v3h-1zM829 275h1v3h-1z" fill="#ffff00"/>
<path d="M828 276h1v1h-1z" fill="#a8a8a8"/>
<path d="M847 236h3v1h-3zM847 238h3v1h-3zM847 236h1v3h-1zM849 236h1v3h-1z" fill="#ffff00"/>
<path d="M848 237h1v1h-1z" fill="#a8a8a8"/>
<path d="M847 250h2v4h-2z" fill="#ff0000"/>
<path d="M847 265h3v1h-3zM847 267h3v1h-3zM847 265h1v3h-1zM849 265h1v3h-1z" fill="#ffff00"/>
<path d="M848 266h1v1h-1z" fill="#a8a8a8"/>
<path d="M847 275h3v1h-3zM847 277h3v1h-3zM847 275h1v3h-1zM849 275h1v3h-1z" fill="#ffff00"/>
<path d="M848 276h1v1h-1z" fill="#a8a8a8"/>
<path d="M826 235h4v43h-4z" fill="#00ffff"/>
<path d="M828 237h1v40h-1z" fill="#a8a8a8"/>
<path d="M870 246h117v2h-117zM870 256h117v2h-117zM879 237h2v40h-2zM889 237h2v40h-2zM898 237h2v40h-2zM917 237h2v40h-2zM927 237h2v40h-2zM937 237h2v40h-2zM956 237h2v40h-2zM965 237h2v40h-2zM975 237h2v40h-2z" fill="#009090"/>
<path d="M869 235h119v1h-119zM869 236h119v1h-119zM869 239h119v1h-119z" fill="#00ffff"/>
<path d="M870 237h117v1h-117z" fill="#a8a8a8"/>
<path d="M931 239h5v2h-5z" fill="#00ffff"/>
<path d="M932 239h3v1h-3z" fill="#000000"/>
<path d="M969 239h5v2h-5z" fill="#00ffff"/>
<path d="M970 239h3v1h-3z" fill="#000000"/>
<path d="M979 239h5v2h-5zM869 264h119v1h-119zM869 265h119v1h-119zM869 268h119v1h-119z" fill="#00ffff"/>
<path d="M870 266h117v1h-117z" fill="#a8a8a8"/>
<path d="M883 268h5v2h-5z" fill="#00ffff"/>
<path d="M884 268h3v1h-3z" fill="#000000"/>
<path d="M893 268h4v2h-4zM912 268h4v2h-4zM921 268h5v2h-5zM931 268h5v2h-5z" fill="#00ffff"/>
<path d="M932 268h3v1h-3z" fill="#000000"/>
<path d="M950 268h5v2h-5z" fill="#00ffff"/>
<path d="M951 268h3v1h-3z" fill="#000000"/>
<path d="M979 268h5v2h-5zM869 274h119v1h-119zM869 275h119v1h-119zM869 278h119v1h-119z" fill="#00ffff"/>
<path d="M870 276h117v1h-117z" fill="#a8a8a8"/>
<path d="M873 278h5v2h-5zM883 278h5v2h-5zM921 278h5v2h-5z" fill="#00ffff"/>
<path d="M922 278h3v1h-3z" fill="#000000"/>
<path d="M931 278h5v2h-5z" fill="#00ffff"/>
<path d="M932 278h3v1h-3z" fill="#000000"/>
<path d="M941 278h4v2h-4z" fill="#00ffff"/>
<path d="M942 278h2v1h-2z" fill="#000000"/>
<path d="M960 278h4v2h-4zM969 278h5v2h-5z" fill="#00ffff"/>
<path d="M970 278h3v1h-3z" fill="#000000"/>
<path d="M868 236h1v42h-1zM869 236h1v42h-1zM872 236h1v42h-1z" fill="#00ffff"/>
<path d="M870 237h1v40h-1z" fill="#a8a8a8"/>
<path d="M907 236h1v42h-1zM908 236h1v42h-1zM911 236h1v42h-1z" fill="#00ffff"/>
<path d="M909 237h1v40h-1z" fill="#a8a8a8"/>
<path d="M945 236h1v42h-1zM946 236h1v42h-1zM949 236h1v42h-1z" fill="#00ffff"/>
<path d="M947 237h1v40h-1z" fill="#a8a8a8"/>
<path d="M984 236h1v42h-1zM985 236h1v42h-1zM988 236h1v42h-1z" fill="#00ffff"/>
<path d="M986 237h1v40h-1z" fill="#a8a8a8"/>
<path d="M874 239h3v1h-3zM873 235h4v1h-4zM884 239h2v1h-2zM883 235h4v1h-4zM892 235h4v1h-4zM912 239h3v1h-3zM922 239h2v1h-2zM940 235h4v1h-4zM951 239h3v1h-3zM950 235h4v1h-4zM960 239h4v1h-4zM959 235h4v1h-4zM970 239h4v1h-4zM874 268h2v1h-2zM873 264h4v1h-4zM884 268h3v1h-3zM893 268h4v1h-4zM903 268h3v1h-3zM902 264h4v1h-4zM921 264h4v1h-4zM932 268h4v1h-4zM931 264h4v1h-4zM951 268h2v1h-2zM960 268h3v1h-3zM970 268h2v1h-2zM874 278h2v1h-2zM873 274h4v1h-4zM903 278h3v1h-3zM912 278h3v1h-3zM911 274h4v1h-4zM922 278h4v1h-4zM941 278h4v1h-4zM940 274h4v1h-4zM951 278h3v1h-3zM960 278h3v1h-3zM970 278h2v1h-2zM980 278h3v1h-3zM979 274h4v1h-4zM872 241h1v3h-1zM872 260h1v3h-1zM872 270h1v3h-1zM911 241h1v3h-1zM907 260h1v3h-1zM949 251h1v3h-1zM949 260h1v3h-1zM949 270h1v3h-1zM945 270h1v3h-1zM988 241h1v3h-1zM988 260h1v3h-1z" fill="#000000"/>
<path d="M869 236h3v1h-3zM869 238h3v1h-3zM869 236h1v3h-1zM871 236h1v3h-1z" fill="#ffff00"/>
<path d="M870 237h1v1h-1z" fill="#a8a8a8"/>
<path d="M869 245h2v4h-2zM869 255h2v4h-2z" fill="#ff0000"/>
<path d="M869 265h3v1h-3zM869 267h3v1h-3zM869 265h1v3h-1zM871 265h1v3h-1z" fill="#ffff00"/>
<path d="M870 266h1v1h-1z" fill="#a8a8a8"/>
<path d="M869 275h3v1h-3zM869 277h3v1h-3zM869 275h1v3h-1zM871 275h1v3h-1z" fill="#ffff00"/>
<path d="M870 276h1v1h-1z" fill="#a8a8a8"/>
<path d="M878 236h1v2h-1zM880 236h2v2h-2zM878 245h4v4h-4zM878 255h4v4h-4zM878 265h4v2h-4zM878 275h1v2h-1zM880 275h2v2h-2z" fill="#ff0000"/>
<path d="M889 236h3v1h-3zM889 238h3v1h-3zM889 236h1v3h-1zM891 236h1v3h-1z" fill="#ffff00"/>
<path d="M890 237h1v1h-1z" fill="#a8a8a8"/>
<path d="M889 245h2v4h-2zM889 255h2v4h-2z" fill="#ff0000"/>
<path d="M889 265h3v1h-3zM889 267h3v1h-3zM889 265h1v3h-1zM891 265h1v3h-1z" fill="#ffff00"/>
<path d="M890 266h1v1h-1z" fill="#a8a8a8"/>
<path d="M889 275h3v1h-3zM889 277h3v1h-3zM889 275h1v3h-1zM891 275h1v3h-1z" fill="#ffff00"/>
<path d="M890 276h1v1h-1z" fill="#a8a8a8"/>
<path d="M897 236h4v2h-4zM897 245h4v4h-4zM897 255h4v4h-4zM897 265h4v2h-4zM897 275h4v2h-4z" fill="#ff0000"/>
<path d="M908 236h3v1h-3zM908 238h3v1h-3zM908 236h1v3h-1zM910 236h1v3h-1z" fill="#ffff00"/>
<path d="M909 237h1v1h-1z" fill="#a8a8a8"/>
<path d="M908 245h2v4h-2zM908 255h2v4h-2z" fill="#ff0000"/>
<path d="M908 265h3v1h-3zM908 267h3v1h-3zM908 265h1v3h-1zM910 265h1v3h-1z" fill="#ffff00"/>
<path d="M909 266h1v1h-1z" fill="#a8a8a8"/>
<path d="M908 275h3v1h-3zM908 277h3v1h-3zM908 275h1v3h-1zM910 275h1v3h-1z" fill="#ffff00"/>
<path d="M909 276h1v1h-1z" fill="#a8a8a8"/>
<path d="M916 236h4v2h-4zM916 245h4v4h-4zM916 255h4v4h-4zM916 265h1v2h-1zM918 265h2v2h-2zM916 275h4v2h-4z" fill="#ff0000"/>
<path d="M927 236h3v1h-3zM927 238h3v1h-3zM927 236h1v3h-1zM929 236h1v3h-1z" fill="#ffff00"/>
<path d="M928 237h1v1h-1z" fill="#a8a8a8"/>
<path d="M927 245h2v4h-2zM927 255h2v4h-2z" fill="#ff0000"/>
<path d="M927 265h3v1h-3zM927 267h3v1h-3zM927 265h1v3h-1zM929 265h1v3h-1z" fill="#ffff00"/>
<path d="M928 266h1v1h-1z" fill="#a8a8a8"/>
<path d="M927 275h3v1h-3zM927 277h3v1h-3zM927 275h1v3h-1zM929 275h1v3h-1z" fill="#ffff00"/>
<path d="M928 276h1v1h-1z" fill="#a8a8a8"/>
<path d="M936 236h4v2h-4zM936 245h4v4h-4zM936 255h4v4h-4zM936 265h1v2h-1zM938 265h2v2h-2zM936 275h4v2h-4z" fill="#ff0000"/>
<path d="M946 236h3v1h-3zM946 238h3v1h-3zM946 236h1v3h-1zM948 236h1v3h-1z" fill="#ffff00"/>
<path d="M947 237h1v1h-1z" fill="#a8a8a8"/>
<path d="M946 245h2v4h-2zM946 255h2v4h-2z" fill="#ff0000"/>
<path d="M946 265h3v1h-3zM946 267h3v1h-3zM946 265h1v3h-1zM948 265h1v3h-1z" fill="#ffff00"/>
<path d="M947 266h1v1h-1z" fill="#a8a8a8"/>
<path d="M946 275h3v1h-3zM946 277h3v1h-3zM946 275h1v3h-1zM948 275h1v3h-1z" fill="#ffff00"/>
<path d="M947 276h1v1h-1z" fill="#a8a8a8"/>
<path d="M955 236h4v2h-4zM955 245h4v4h-4zM955 255h4v4h-4zM955 265h1v2h-1zM957 265h2v2h-2zM955 275h4v2h-4z" fill="#ff0000"/>
<path d="M965 236h3v1h-3zM965 238h3v1h-3zM965 236h1v3h-1zM967 236h1v3h-1z" fill="#ffff00"/>
<path d="M966 237h1v1h-1z" fill="#a8a8a8"/>
<path d="M965 245h2v4h-2zM965 255h2v4h-2z" fill="#ff0000"/>
<path d="M965 265h3v1h-3zM965 267h3v1h-3zM965 265h1v3h-1zM967 265h1v3h-1z" fill="#ffff00"/>
<path d="M966 266h1v1h-1z" fill="#a8a8a8"/>
<path d="M965 275h3v1h-3zM965 277h3v1h-3zM965 275h1v3h-1zM967 275h1v3h-1z" fill="#ffff00"/>
<path d="M966 276h1v1h-1z" fill="#a8a8a8"/>
<path d="M974 236h1v2h-1zM976 236h2v2h-2zM974 245h4v4h-4zM974 255h4v4h-4zM974 265h1v2h-1zM976 265h2v2h-2zM974 275h1v2h-1zM976 275h2v2h-2z" fill="#ff0000"/>
<path d="M985 236h3v1h-3zM985 238h3v1h-3zM985 236h1v3h-1zM987 236h1v3h-1z" fill="#ffff00"/>
<path d="M986 237h1v1h-1z" fill="#a8a8a8"/>
<path d="M985 245h2v4h-2zM985 255h2v4h-2z" fill="#ff0000"/>
<path d="M985 265h3v1h-3zM985 267h3v1h-3zM985 265h1v3h-1zM987 265h1v3h-1z" fill="#ffff00"/>
<path d="M986 266h1v1h-1z" fill="#a8a8a8"/>
<path d="M985 275h3v1h-3zM985 277h3v1h-3zM985 275h1v3h-1zM987 275h1v3h-1z" fill="#ffff00"/>
<path d="M986 276h1v1h-1z" fill="#a8a8a8"/>
<path d="M850 239h19v26h-19z" fill="#000000"/>
<path d="M849 238h21v1h-21zM849 264h21v1h-21zM849 238h1v27h-1zM869 238h1v27h-1z" fill="#00ffff"/>
<path d="M851.5 240.5L867.5 263.5M851.5 263.5L867.5 240.5" stroke="#ffffff" fill="none"/>
<path d="M848 237h23v1h-23z" fill="#a8a8a8"/>
<path d="M849 235h21v2h-21z" fill="#00ffff"/>
<path d="M848 266h23v1h-23z" fill="#a8a8a8"/>
<path d="M856 239h6v2h-6z" fill="#00ffff"/>
<path d="M988 236h10v31h-10z" fill="#000000"/>
<path d="M987 237h12v1h-12zM987 265h12v1h-12zM987 237h1v29h-1zM998 237h1v29h-1z" fill="#00ffff"/>
<path d="M989.5 240.5L996.5 262.5M989.5 262.5L996.5 240.5" stroke="#ffffff" fill="none"/>
<path d="M989 235h8v2h-8z" fill="#00ffff"/>
<path d="M993 249h3v10h-3z" fill="#ffff00"/>
<path d="M752 269h5v7h-5z" fill="#00ffff"/>
<path d="M753 270h3v5h-3z" fill="#000000"/>
<path d="M766 269h5v7h-5zM780 269h4v5h-4z" fill="#00ffff"/>
<path d="M781 270h2v3h-2z" fill="#000000"/>
<path d="M801 269h4v7h-4zM815 269h3v4h-3z" fill="#00ffff"/>
<path d="M816 270h1v2h-1z" fill="#000000"/>
<path d="M822 269h3v4h-3zM829 269h5v5h-5zM843 269h5v4h-5z" fill="#00ffff"/>
<path d="M844 270h3v2h-3z" fill="#000000"/>
<path d="M850 269h5v4h-5zM871 269h3v6h-3z" fill="#00ffff"/>
<path d="M872 270h1v4h-1z" fill="#000000"/>
<path d="M885 269h3v6h-3z" fill="#00ffff"/>
<path d="M886 270h1v4h-1z" fill="#000000"/>
<path d="M906 269h3v4h-3z" fill="#00ffff"/>
<path d="M907 270h1v2h-1z" fill="#000000"/>
<path d="M920 269h3v5h-3zM927 269h3v6h-3z" fill="#00ffff"/>
<path d="M928 270h1v4h-1z" fill="#000000"/>
<path d="M948 269h3v4h-3z" fill="#00ffff"/>
<path d="M949 270h1v2h-1z" fill="#000000"/>
<path d="M955 269h4v5h-4zM962 269h5v5h-5zM976 269h4v4h-4z" fill="#00ffff"/>
<path d="M977 270h2v2h-2z" fill="#000000"/>
<path d="M752 278h8v2h-8zM763 278h4v2h-4zM774 278h7v2h-7zM807 278h4v2h-4zM829 278h6v2h-6zM840 278h8v2h-8zM851 278h6v2h-6zM862 278h4v2h-4zM873 278h8v2h-8zM895 278h6v2h-6zM906 278h7v2h-7zM917 278h8v2h-8zM928 278h8v2h-8zM939 278h7v2h-7zM950 278h5v2h-5zM961 278h5v2h-5zM983 278h5v2h-5z" fill="#00ffff"/>
<path d="M998 224h48v55h-48z" fill="#000000"/>
<path d="M1000 238h44v2h-44zM1000 263h44v2h-44zM1020 226h2v51h-2zM1031 226h2v51h-2z" fill="#009090"/>
<path d="M999 224h46v1h-46zM999 225h46v1h-46zM999 228h46v1h-46z" fill="#00ffff"/>
<path d="M1000 226h44v1h-44z" fill="#a8a8a8"/>
<path d="M1003 228h4v2h-4z" fill="#00ffff"/>
<path d="M1004 228h2v1h-2z" fill="#000000"/>
<path d="M1012 228h7v2h-7zM1024 228h6v2h-6zM999 249h46v1h-46zM999 250h46v1h-46zM999 253h46v1h-46z" fill="#00ffff"/>
<path d="M1000 251h44v1h-44z" fill="#a8a8a8"/>
<path d="M1003 253h4v2h-4zM1024 253h6v2h-6z" fill="#00ffff"/>
<path d="M1025 253h4v1h-4z" fill="#000000"/>
<path d="M999 274h46v1h-46zM999 275h46v1h-46zM999 278h46v1h-46z" fill="#00ffff"/>
<path d="M1000 276h44v1h-44z" fill="#a8a8a8"/>
<path d="M1003 278h4v2h-4zM1012 278h7v2h-7z" fill="#00ffff"/>
<path d="M1013 278h5v1h-5z" fill="#000000"/>
<path d="M1024 278h6v2h-6zM998 225h1v53h-1zM999 225h1v53h-1zM1002 225h1v53h-1z" fill="#00ffff"/>
<path d="M1000 226h1v51h-1z" fill="#a8a8a8"/>
<path d="M1007 225h1v53h-1zM1008 225h1v53h-1zM1011 225h1v53h-1z" fill="#00ffff"/>
<path d="M1009 226h1v51h-1z" fill="#a8a8a8"/>
<path d="M1041 225h1v53h-1zM1042 225h1v53h-1zM1045 225h1v53h-1z" fill="#00ffff"/>
<path d="M1043 226h1v51h-1z" fill="#a8a8a8"/>
<path d="M1003 228h4v1h-4zM1013 224h4v1h-4zM1025 228h4v1h-4zM1024 224h4v1h-4zM1014 253h3v1h-3zM1025 253h2v1h-2zM1036 253h3v1h-3zM1003 278h2v1h-2zM1013 274h4v1h-4zM1025 278h2v1h-2zM1036 278h2v1h-2zM1035 274h4v1h-4zM998 231h1v3h-1zM1002 269h1v3h-1zM998 269h1v3h-1zM1011 231h1v3h-1zM1007 244h1v3h-1zM1011 269h1v3h-1zM1007 269h1v3h-1zM1041 256h1v3h-1z" fill="#000000"/>
<path d="M999 225h3v1h-3zM999 227h3v1h-3zM999 225h1v3h-1zM1001 225h1v3h-1z" fill="#ffff00"/>
<path d="M1000 226h1v1h-1z" fill="#a8a8a8"/>
<path d="M999 237h2v4h-2z" fill="#ff0000"/>
<path d="M999 250h3v1h-3zM999 252h3v1h-3zM999 250h1v3h-1zM1001 250h1v3h-1z" fill="#ffff00"/>
<path d="M1000 251h1v1h-1z" fill="#a8a8a8"/>
<path d="M999 262h2v4h-2z" fill="#ff0000"/>
<path d="M999 275h3v1h-3zM999 277h3v1h-3zM999 275h1v3h-1zM1001 275h1v3h-1z" fill="#ffff00"/>
<path d="M1000 276h1v1h-1z" fill="#a8a8a8"/>
<path d="M1008 225h3v1h-3zM1008 227h3v1h-3zM1008 225h1v3h-1zM1010 225h1v3h-1z" fill="#ffff00"/>
<path d="M1009 226h1v1h-1z" fill="#a8a8a8"/>
<path d="M1008 237h2v4h-2z" fill="#ff0000"/>
<path d="M1008 250h3v1h-3zM1008 252h3v1h-3zM1008 250h1v3h-1zM1010 250h1v3h-1z" fill="#ffff00"/>
<path d="M1009 251h1v1h-1z" fill="#a8a8a8"/>
<path d="M1008 262h2v4h-2z" fill="#ff0000"/>
<path d="M1008 275h3v1h-3zM1008 277h3v1h-3zM1008 275h1v3h-1zM1010 275h1v3h-1z" fill="#ffff00"/>
<path d="M1009 276h1v1h-1z" fill="#a8a8a8"/>
<path d="M1019 225h1v2h-1zM1021 225h2v2h-2zM1019 237h4v4h-4zM1019 250h4v2h-4zM1019 262h4v4h-4zM1019 275h1v2h-1zM1021 275h2v2h-2zM1030 225h1v2h-1zM1032 225h2v2h-2zM1030 237h4v4h-4zM1030 250h1v2h-1zM1032 250h2v2h-2zM1030 262h4v4h-4zM1030 275h1v2h-1zM1032 275h2v2h-2z" fill="#ff0000"/>
<path d="M1042 225h3v1h-3zM1042 227h3v1h-3zM1042 225h1v3h-1zM1044 225h1v3h-1z" fill="#ffff00"/>
<path d="M1043 226h1v1h-1z" fill="#a8a8a8"/>
<path d="M1042 237h2v4h-2z" fill="#ff0000"/>
<path d="M1042 250h3v1h-3zM1042 252h3v1h-3zM1042 250h1v3h-1zM1044 250h1v3h-1z" fill="#ffff00"/>
<path d="M1043 251h1v1h-1z" fill="#a8a8a8"/>
<path d="M1042 262h2v4h-2z" fill="#ff0000"/>
<path d="M1042 275h3v1h-3zM1042 277h3v1h-3zM1042 275h1v3h-1zM1044 275h1v3h-1z" fill="#ffff00"/>
<path d="M1043 276h1v1h-1z" fill="#a8a8a8"/>
<path d="M1001 266h8v9h-8z" fill="#000000"/>
<path d="M1003 273h5v7h-5z" fill="#00ffff"/>
<path d="M1004 275h2v3h-2z" fill="#000000"/>
<path d="M998 262h4v5h-4z" fill="#00ffff"/>
<path d="M749 279h60v80h-60z" fill="#000000"/>
<path d="M750 274h57v1h-57zM750 275h57v1h-57zM750 278h57v1h-57z" fill="#00ffff"/>
<path d="M751 276h55v1h-55z" fill="#a8a8a8"/>
<path d="M754 278h3v1h-3zM758 274h4v1h-4zM763 278h3v1h-3zM767 274h4v1h-4zM772 278h3v1h-3zM794 274h4v1h-4zM799 278h3v1h-3zM803 274h4v1h-4z" fill="#000000"/>
<path d="M750 288h57v1h-57zM750 289h57v1h-57zM750 292h57v1h-57z" fill="#00ffff"/>
<path d="M751 290h55v1h-55z" fill="#a8a8a8"/>
<path d="M754 292h3v1h-3zM758 288h4v1h-4zM763 292h3v1h-3zM785 288h4v1h-4zM790 292h3v1h-3z" fill="#000000"/>
<path d="M751 302h55v2h-55z" fill="#009090"/>
<path d="M750 315h57v1h-57zM750 316h57v1h-57zM750 319h57v1h-57z" fill="#00ffff"/>
<path d="M751 317h55v1h-55z" fill="#a8a8a8"/>
<path d="M758 315h4v1h-4zM772 319h3v1h-3zM776 315h4v1h-4zM781 319h3v1h-3zM785 315h4v1h-4zM799 319h3v1h-3zM803 315h4v1h-4z" fill="#000000"/>
<path d="M751 329h55v2h-55z" fill="#009090"/>
<path d="M750 342h57v1h-57zM750 343h57v1h-57zM750 346h57v1h-57z" fill="#00ffff"/>
<path d="M751 344h55v1h-55z" fill="#a8a8a8"/>
<path d="M772 346h3v1h-3zM781 346h3v1h-3zM790 346h3v1h-3zM794 342h4v1h-4zM803 342h4v1h-4z" fill="#000000"/>
<path d="M750 354h57v1h-57zM750 355h57v1h-57zM750 358h57v1h-57z" fill="#00ffff"/>
<path d="M751 356h55v1h-55z" fill="#a8a8a8"/>
<path d="M754 358h3v1h-3zM763 358h3v1h-3zM772 358h3v1h-3zM776 354h4v1h-4zM785 354h4v1h-4zM790 358h3v1h-3zM794 354h4v1h-4zM803 354h4v1h-4z" fill="#000000"/>
<path d="M749 276h1v82h-1zM750 276h1v82h-1zM753 276h1v82h-1z" fill="#00ffff"/>
<path d="M751 276h1v81h-1z" fill="#a8a8a8"/>
<path d="M753 282h1v4h-1zM753 300h1v4h-1zM753 327h1v4h-1zM753 336h1v4h-1zM753 345h1v4h-1z" fill="#000000"/>
<path d="M773 276h2v81h-2z" fill="#009090"/>
<path d="M775 276h1v81h-1z" fill="#00ffff"/>
<path d="M781 276h2v81h-2z" fill="#009090"/>
<path d="M780 276h1v81h-1zM803 276h1v82h-1zM804 276h1v82h-1zM807 276h1v82h-1z" fill="#00ffff"/>
<path d="M805 276h1v81h-1z" fill="#a8a8a8"/>
<path d="M807 300h1v4h-1zM807 309h1v4h-1zM807 318h1v4h-1zM807 327h1v4h-1zM807 336h1v4h-1z" fill="#000000"/>
<path d="M750 275h3v1h-3zM750 277h3v1h-3zM750 275h1v3h-1zM752 275h1v3h-1zM750 289h3v1h-3zM750 291h3v1h-3zM750 289h1v3h-1zM752 289h1v3h-1z" fill="#ffff00"/>
<path d="M750 301h3v4h-3z" fill="#ff0000"/>
<path d="M750 316h3v1h-3zM750 318h3v1h-3zM750 316h1v3h-1zM752 316h1v3h-1z" fill="#ffff00"/>
<path d="M750 328h3v4h-3z" fill="#ff0000"/>
<path d="M750 343h3v1h-3zM750 345h3v1h-3zM750 343h1v3h-1zM752 343h1v3h-1zM750 355h3v1h-3zM750 357h3v1h-3zM750 355h1v3h-1zM752 355h1v3h-1zM773 275h3v1h-3zM773 277h3v1h-3zM773 275h1v3h-1zM775 275h1v3h-1zM773 289h3v1h-3zM773 291h3v1h-3zM773 289h1v3h-1zM775 289h1v3h-1z" fill="#ffff00"/>
<path d="M773 301h3v4h-3z" fill="#ff0000"/>
<path d="M773 316h3v1h-3zM773 318h3v1h-3zM773 316h1v3h-1zM775 316h1v3h-1z" fill="#ffff00"/>
<path d="M773 328h3v4h-3z" fill="#ff0000"/>
<path d="M773 343h3v1h-3zM773 345h3v1h-3zM773 343h1v3h-1zM775 343h1v3h-1zM773 355h3v1h-3zM773 357h3v1h-3zM773 355h1v3h-1zM775 355h1v3h-1zM781 275h3v1h-3zM781 277h3v1h-3zM781 275h1v3h-1zM783 275h1v3h-1zM781 289h3v1h-3zM781 291h3v1h-3zM781 289h1v3h-1zM783 289h1v3h-1z" fill="#ffff00"/>
<path d="M781 301h3v4h-3z" fill="#ff0000"/>
<path d="M781 316h3v1h-3zM781 318h3v1h-3zM781 316h1v3h-1zM783 316h1v3h-1z" fill="#ffff00"/>
<path d="M781 328h3v4h-3z" fill="#ff0000"/>
<path d="M781 343h3v1h-3zM781 345h3v1h-3zM781 343h1v3h-1zM783 343h1v3h-1zM781 355h3v1h-3zM781 357h3v1h-3zM781 355h1v3h-1zM783 355h1v3h-1zM804 275h3v1h-3zM804 277h3v1h-3zM804 275h1v3h-1zM806 275h1v3h-1zM804 289h3v1h-3zM804 291h3v1h-3zM804 289h1v3h-1zM806 289h1v3h-1z" fill="#ffff00"/>
<path d="M804 301h3v4h-3z" fill="#ff0000"/>
<path d="M804 316h3v1h-3zM804 318h3v1h-3zM804 316h1v3h-1zM806 316h1v3h-1z" fill="#ffff00"/>
<path d="M804 328h3v4h-3z" fill="#ff0000"/>
<path d="M804 343h3v1h-3zM804 345h3v1h-3zM804 343h1v3h-1zM806 343h1v3h-1zM804 355h3v1h-3zM804 357h3v1h-3zM804 355h1v3h-1zM806 355h1v3h-1z" fill="#ffff00"/>
<path d="M775 277h7v13h-7z" fill="#000000"/>
<path d="M776 280h5v7h-5z" fill="#00ffff"/>
<path d="M777 282h3v3h-3z" fill="#000000"/>
<path d="M776 318h5v5h-5zM777 345h4v9h-4z" fill="#00ffff"/>
<path d="M754.5 346.5L772.5 355.5M754.5 355.5L772.5 346.5" stroke="#ffffff" fill="none"/>
<path d="M762 292h4v2h-4zM790 292h4v2h-4zM763 319h4v2h-4zM792 319h4v2h-4zM764 333h4v2h-4zM760 346h4v2h-4z" fill="#00ffff"/>
<path d="M751 364h55v1h-55zM751 367h55v1h-55zM760 363h5v1h-5zM792 363h5v1h-5zM776 366h5v1h-5zM751 358h1v14h-1z" fill="#00ff00"/>
<path d="M751 372h2v2h-2z" fill="#ffffff"/>
<path d="M774 358h1v14h-1z" fill="#a8a8a8"/>
<path d="M774 372h2v2h-2z" fill="#ffffff"/>
<path d="M782 358h1v14h-1z" fill="#a8a8a8"/>
<path d="M782 372h2v2h-2z" fill="#ffffff"/>
<path d="M805 358h1v14h-1z" fill="#00ff00"/>
<path d="M805 372h2v2h-2z" fill="#ffffff"/>
<path d="M1052 226h1v52h-1zM1055 226h1v52h-1zM1050 229h2v6h-2zM1050 241h2v7h-2zM1050 255h2v8h-2zM1050 268h2v6h-2z" fill="#00ff00"/>
<path d="M1058 226h2v2h-2z" fill="#ffffff"/>
<path d="M1047 226h11v1h-11z" fill="#00ff00"/>
<path d="M1058 237h2v2h-2z" fill="#ffffff"/>
<path d="M1047 237h11v1h-11z" fill="#00ff00"/>
<path d="M1058 266h2v2h-2z" fill="#ffffff"/>
<path d="M1047 266h11v1h-11z" fill="#00ff00"/>
<path d="M1058 276h2v2h-2z" fill="#ffffff"/>
<path d="M1047 276h11v1h-11z" fill="#00ff00"/>
<path d="M1045 226h6v1h-6zM1045 239h6v1h-6zM1045 251h6v1h-6zM1045 264h6v1h-6zM1045 276h6v1h-6z" fill="#a8a8a8"/>
<path d="M754 250h3v8h-3zM757 253h3v5h-3zM763 250h3v1h-3zM763 257h3v1h-3zM763 250h1v8h-1zM765 250h1v8h-1zM763 257h6v1h-6zM774 250h3v8h-3zM777 253h4v5h-4zM784 249h2v9h-2zM786 253h3v5h-3zM795 229h10v3h-10zM795 229h3v6h-3z" fill="#ffff00"/>
<path d="M797 230h7v1h-7z" fill="#000000"/>
<path d="M795 242h3v1h-3zM795 246h3v1h-3zM795 242h1v5h-1zM797 242h1v5h-1zM795 246h5v1h-5zM795 248h5v11h-5zM800 253h5v6h-5zM796 260h9v3h-9zM796 260h3v7h-3z" fill="#ffff00"/>
<path d="M798 261h6v1h-6z" fill="#000000"/>
<path d="M796 270h9v3h-9zM796 270h3v8h-3z" fill="#ffff00"/>
<path d="M798 271h6v1h-6z" fill="#000000"/>
<path d="M819 244h4v9h-4zM823 248h5v5h-5zM840 250h4v9h-4zM844 254h5v5h-5zM831 244h10v3h-10zM831 244h3v6h-3z" fill="#ffff00"/>
<path d="M833 245h7v1h-7z" fill="#000000"/>
<path d="M832 255h3v1h-3zM832 263h3v1h-3zM832 255h1v9h-1zM834 255h1v9h-1zM832 263h7v1h-7zM813 259h3v4h-3zM813 261h5v2h-5zM864 249h3v8h-3zM867 252h3v5h-3zM876 249h3v4h-3zM876 251h5v2h-5zM882 249h3v9h-3zM885 253h3v5h-3zM896 248h3v1h-3zM896 252h3v1h-3zM896 248h1v5h-1zM898 248h1v5h-1zM896 252h5v1h-5zM901 245h3v9h-3zM904 249h3v5h-3zM914 231h9v3h-9zM914 231h3v6h-3z" fill="#ffff00"/>
<path d="M916 232h6v1h-6z" fill="#000000"/>
<path d="M913 241h3v5h-3zM913 244h5v2h-5zM913 249h8v3h-8zM913 249h3v8h-3z" fill="#ffff00"/>
<path d="M915 250h5v1h-5z" fill="#000000"/>
<path d="M914 260h9v3h-9zM914 260h3v6h-3z" fill="#ffff00"/>
<path d="M916 261h6v1h-6z" fill="#000000"/>
<path d="M920 270h9v3h-9zM920 270h3v6h-3z" fill="#ffff00"/>
<path d="M922 271h6v1h-6z" fill="#000000"/>
<path d="M925 249h3v6h-3zM925 253h5v2h-5zM934 249h3v4h-3zM934 251h5v2h-5zM939 243h3v8h-3zM942 246h3v5h-3zM950 245h3v8h-3zM953 248h3v5h-3zM960 245h3v8h-3zM963 248h3v5h-3zM969 245h3v8h-3zM972 248h3v5h-3zM978 245h3v9h-3zM981 249h3v5h-3zM959 254h3v8h-3zM962 257h3v5h-3zM1002 234h3v9h-3zM1005 238h4v5h-4zM1012 237h3v9h-3zM1015 241h3v5h-3zM1023 232h9v3h-9zM1023 232h3v7h-3z" fill="#ffff00"/>
<path d="M1025 233h6v1h-6z" fill="#000000"/>
<path d="M1024 242h3v9h-3zM1027 246h4v5h-4zM1034 235h3v11h-3zM1037 240h4v6h-4zM1013 255h10v3h-10zM1013 255h3v8h-3z" fill="#ffff00"/>
<path d="M1015 256h7v1h-7z" fill="#000000"/>
<path d="M1024 260h3v4h-3zM1024 262h5v2h-5zM1024 269h9v3h-9zM1024 269h3v8h-3z" fill="#ffff00"/>
<path d="M1026 270h6v1h-6z" fill="#000000"/>
<path d="M789 283h9v3h-9zM789 283h3v8h-3z" fill="#ffff00"/>
<path d="M791 284h6v1h-6z" fill="#000000"/>
<path d="M757 303h3v1h-3zM757 310h3v1h-3zM757 303h1v8h-1zM759 303h1v8h-1zM757 310h6v1h-6zM790 301h3v3h-3zM790 302h5v2h-5zM788 310h9v3h-9zM788 310h3v8h-3z" fill="#ffff00"/>
<path d="M790 311h6v1h-6z" fill="#000000"/>
<path d="M806 301h5v10h-5zM811 305h6v6h-6zM766 318h3v1h-3zM766 327h3v1h-3zM766 318h1v10h-1zM768 318h1v10h-1zM766 327h6v1h-6zM789 325h8v3h-8zM789 325h3v6h-3z" fill="#ffff00"/>
<path d="M791 326h5v1h-5z" fill="#000000"/>
<path d="M766 332h3v10h-3zM769 336h3v6h-3zM789 336h9v3h-9zM789 336h3v9h-3z" fill="#ffff00"/>
<path d="M791 337h6v1h-6z" fill="#000000"/>
<path d="M790 348h8v3h-8zM790 348h3v9h-3z" fill="#ffff00"/>
<path d="M792 349h5v1h-5z" fill="#000000"/>
<path d="M789 260h3v4h-3zM789 262h6v2h-6z" fill="#ffff00"/>
<path d="M891 336h17v1h-17zM891 339h17v1h-17zM891 336h1v4h-1zM907 336h1v4h-1z" fill="#ffffff"/>
<path d="M889 339h23v2h-23z" fill="#00ff00"/>
<path d="M891 339h17v1h-17zM882 342h30v1h-30zM882 344h30v1h-30zM882 342h1v3h-1zM911 342h1v3h-1zM887 344h27v1h-27zM887 347h27v1h-27zM887 344h1v4h-1zM913 344h1v4h-1zM887 347h57v1h-57zM887 350h57v1h-57zM887 347h1v4h-1zM943 347h1v4h-1zM887 350h44v1h-44zM887 353h44v1h-44zM887 350h1v4h-1zM930 350h1v4h-1zM889 353h33v1h-33zM889 356h33v1h-33zM889 353h1v4h-1zM921 353h1v4h-1zM887 356h37v1h-37zM887 359h37v1h-37zM887 356h1v4h-1zM923 356h1v4h-1zM888 359h52v1h-52zM888 362h52v1h-52zM888 359h1v4h-1zM939 359h1v4h-1z" fill="#ffffff"/>
<path d="M912 337h10v1h-10zM912 341h10v1h-10zM912 337h1v5h-1zM921 337h1v5h-1z" fill="#00ffff"/>
<path d="M906 359h1v4h-1z" fill="#ffffff"/>
<path d="M392 442h249v1h-249zM392 445h249v1h-249zM400 444h4v1h-4zM420 444h4v1h-4zM439 444h4v1h-4zM458 444h4v1h-4zM477 444h4v1h-4zM498 444h4v1h-4zM520 444h4v1h-4zM539 444h4v1h-4zM559 444h4v1h-4zM578 444h4v1h-4zM597 444h4v1h-4zM616 444h4v1h-4zM635 444h4v1h-4zM500 440h4v2h-4zM392 437h1v12h-1z" fill="#00ff00"/>
<path d="M391 437h3v1h-3zM391 439h3v1h-3zM391 437h1v3h-1zM393 437h1v3h-1z" fill="#ffffff"/>
<path d="M431 437h1v12h-1z" fill="#00ff00"/>
<path d="M430 437h3v1h-3zM430 439h3v1h-3zM430 437h1v3h-1zM432 437h1v3h-1z" fill="#ffffff"/>
<path d="M469 437h1v12h-1z" fill="#00ff00"/>
<path d="M468 437h3v1h-3zM468 439h3v1h-3zM468 437h1v3h-1zM470 437h1v3h-1z" fill="#ffffff"/>
<path d="M490 437h1v12h-1z" fill="#00ff00"/>
<path d="M489 437h3v1h-3zM489 439h3v1h-3zM489 437h1v3h-1zM491 437h1v3h-1z" fill="#ffffff"/>
<path d="M512 437h1v12h-1z" fill="#00ff00"/>
<path d="M511 437h3v1h-3zM511 439h3v1h-3zM511 437h1v3h-1zM513 437h1v3h-1z" fill="#ffffff"/>
<path d="M551 437h1v12h-1z" fill="#00ff00"/>
<path d="M550 437h3v1h-3zM550 439h3v1h-3zM550 437h1v3h-1zM552 437h1v3h-1z" fill="#ffffff"/>
<path d="M589 437h1v12h-1z" fill="#00ff00"/>
<path d="M588 437h3v1h-3zM588 439h3v1h-3zM588 437h1v3h-1zM590 437h1v3h-1z" fill="#ffffff"/>
<path d="M608 437h1v12h-1z" fill="#00ff00"/>
<path d="M607 437h3v1h-3zM607 439h3v1h-3zM607 437h1v3h-1zM609 437h1v3h-1z" fill="#ffffff"/>
<path d="M627 437h1v12h-1z" fill="#00ff00"/>
<path d="M626 437h3v1h-3zM626 439h3v1h-3zM626 437h1v3h-1zM628 437h1v3h-1z" fill="#ffffff"/>
<path d="M640 437h1v12h-1z" fill="#00ff00"/>
<path d="M639 437h3v1h-3zM639 439h3v1h-3zM639 437h1v3h-1zM641 437h1v3h-1zM471 437h3v1h-3zM471 439h3v1h-3zM471 437h1v3h-1zM473 437h1v3h-1z" fill="#ffffff"/>
<path d="M412 445h1v4h-1zM450 445h1v4h-1zM531 445h1v4h-1zM570 445h1v4h-1z" fill="#00ff00"/>
<path d="M392 463h1v41h-1zM412 463h1v41h-1zM431 463h1v41h-1zM450 463h1v41h-1zM469 463h1v41h-1zM490 463h1v41h-1zM512 463h1v41h-1zM531 463h1v41h-1zM551 463h1v41h-1zM570 463h1v41h-1zM589 463h1v41h-1zM608 463h1v41h-1zM627 463h1v41h-1zM640 463h1v41h-1zM470 463h1v41h-1zM392 463h249v1h-249zM392 492h249v1h-249zM392 503h249v1h-249zM392 503h1v81h-1zM416 503h1v81h-1zM424 503h1v81h-1zM448 503h1v81h-1zM392 516h57v1h-57zM392 543h57v1h-57zM392 570h57v1h-57zM392 583h57v1h-57z" fill="#a8a8a8"/>
<path d="M382 463h1v121h-1zM385 463h1v121h-1z" fill="#00ff00"/>
<path d="M377 463h2v2h-2z" fill="#ffffff"/>
<path d="M378 463h11v1h-11z" fill="#00ff00"/>
<path d="M377 492h2v2h-2z" fill="#ffffff"/>
<path d="M378 492h11v1h-11z" fill="#00ff00"/>
<path d="M377 503h2v2h-2z" fill="#ffffff"/>
<path d="M378 503h11v1h-11z" fill="#00ff00"/>
<path d="M377 516h2v2h-2z" fill="#ffffff"/>
<path d="M378 516h11v1h-11z" fill="#00ff00"/>
<path d="M377 543h2v2h-2z" fill="#ffffff"/>
<path d="M378 543h11v1h-11z" fill="#00ff00"/>
<path d="M377 570h2v2h-2z" fill="#ffffff"/>
<path d="M378 570h11v1h-11z" fill="#00ff00"/>
<path d="M377 583h2v2h-2z" fill="#ffffff"/>
<path d="M378 583h11v1h-11zM383 474h2v9h-2zM383 497h2v5h-2zM383 520h2v8h-2zM383 548h2v9h-2zM383 574h2v7h-2zM392 594h57v1h-57zM392 599h57v1h-57zM392 590h1v14h-1z" fill="#00ff00"/>
<path d="M392 604h2v2h-2z" fill="#ffffff"/>
<path d="M416 590h1v14h-1z" fill="#00ff00"/>
<path d="M416 604h2v2h-2z" fill="#ffffff"/>
<path d="M424 590h1v14h-1z" fill="#00ff00"/>
<path d="M424 604h2v2h-2z" fill="#ffffff"/>
<path d="M448 590h1v14h-1z" fill="#00ff00"/>
<path d="M448 604h2v2h-2z" fill="#ffffff"/>
<path d="M403 597h4v2h-4zM434 597h4v2h-4zM418 596h5v5h-5zM653 463h4v41h-4z" fill="#00ff00"/>
<path d="M654 466h2v4h-2zM654 475h2v4h-2zM654 484h2v4h-2zM654 493h2v4h-2z" fill="#000000"/>
<path d="M659 463h1v41h-1z" fill="#00ff00"/>
<path d="M662 463h2v2h-2z" fill="#ffffff"/>
<path d="M651 463h11v1h-11z" fill="#00ff00"/>
<path d="M662 492h2v2h-2z" fill="#ffffff"/>
<path d="M651 492h11v1h-11z" fill="#00ff00"/>
<path d="M662 503h2v2h-2z" fill="#ffffff"/>
<path d="M651 503h11v1h-11z" fill="#00ff00"/>
<path d="M391 462h3v3h-3z" fill="#ffff00"/>
<path d="M392 463h1v1h-1z" fill="#000000"/>
<path d="M393 461h4v2h-4zM411 462h3v3h-3z" fill="#ffff00"/>
<path d="M412 463h1v1h-1z" fill="#000000"/>
<path d="M413 461h4v2h-4zM430 462h3v3h-3z" fill="#ffff00"/>
<path d="M431 463h1v1h-1z" fill="#000000"/>
<path d="M432 461h4v2h-4zM449 462h3v3h-3z" fill="#ffff00"/>
<path d="M450 463h1v1h-1z" fill="#000000"/>
<path d="M451 461h4v2h-4zM468 462h3v3h-3z" fill="#ffff00"/>
<path d="M469 463h1v1h-1z" fill="#000000"/>
<path d="M470 461h4v2h-4zM489 462h3v3h-3z" fill="#ffff00"/>
<path d="M490 463h1v1h-1z" fill="#000000"/>
<path d="M491 461h4v2h-4zM511 462h3v3h-3z" fill="#ffff00"/>
<path d="M512 463h1v1h-1z" fill="#000000"/>
<path d="M513 461h4v2h-4zM530 462h3v3h-3z" fill="#ffff00"/>
<path d="M531 463h1v1h-1z" fill="#000000"/>
<path d="M532 461h4v2h-4zM550 462h3v3h-3z" fill="#ffff00"/>
<path d="M551 463h1v1h-1z" fill="#000000"/>
<path d="M552 461h4v2h-4zM569 462h3v3h-3z" fill="#ffff00"/>
<path d="M570 463h1v1h-1z" fill="#000000"/>
<path d="M571 461h4v2h-4zM588 462h3v3h-3z" fill="#ffff00"/>
<path d="M589 463h1v1h-1z" fill="#000000"/>
<path d="M590 461h4v2h-4zM607 462h3v3h-3z" fill="#ffff00"/>
<path d="M608 463h1v1h-1z" fill="#000000"/>
<path d="M609 461h4v2h-4zM626 462h3v3h-3z" fill="#ffff00"/>
<path d="M627 463h1v1h-1z" fill="#000000"/>
<path d="M628 461h4v2h-4zM639 462h3v3h-3z" fill="#ffff00"/>
<path d="M640 463h1v1h-1z" fill="#000000"/>
<path d="M641 461h4v2h-4zM430 491h3v3h-3z" fill="#ffff00"/>
<path d="M431 492h1v1h-1z" fill="#000000"/>
<path d="M432 490h4v2h-4zM449 491h3v3h-3z" fill="#ffff00"/>
<path d="M450 492h1v1h-1z" fill="#000000"/>
<path d="M451 490h4v2h-4zM489 491h3v3h-3z" fill="#ffff00"/>
<path d="M490 492h1v1h-1z" fill="#000000"/>
<path d="M491 490h4v2h-4zM511 491h3v3h-3z" fill="#ffff00"/>
<path d="M512 492h1v1h-1z" fill="#000000"/>
<path d="M513 490h4v2h-4zM530 491h3v3h-3z" fill="#ffff00"/>
<path d="M531 492h1v1h-1z" fill="#000000"/>
<path d="M532 490h4v2h-4zM550 491h3v3h-3z" fill="#ffff00"/>
<path d="M551 492h1v1h-1z" fill="#000000"/>
<path d="M552 490h4v2h-4zM569 491h3v3h-3z" fill="#ffff00"/>
<path d="M570 492h1v1h-1z" fill="#000000"/>
<path d="M571 490h4v2h-4zM588 491h3v3h-3z" fill="#ffff00"/>
<path d="M589 492h1v1h-1z" fill="#000000"/>
<path d="M590 490h4v2h-4zM588 502h3v3h-3z" fill="#ffff00"/>
<path d="M589 503h1v1h-1z" fill="#000000"/>
<path d="M590 501h4v2h-4zM415 542h3v3h-3z" fill="#ffff00"/>
<path d="M416 543h1v1h-1z" fill="#000000"/>
<path d="M417 541h4v2h-4zM423 542h3v3h-3z" fill="#ffff00"/>
<path d="M424 543h1v1h-1z" fill="#000000"/>
<path d="M425 541h4v2h-4zM423 569h3v3h-3z" fill="#ffff00"/>
<path d="M424 570h1v1h-1z" fill="#000000"/>
<path d="M425 568h4v2h-4zM423 582h3v3h-3z" fill="#ffff00"/>
<path d="M424 583h1v1h-1z" fill="#000000"/>
<path d="M425 581h4v2h-4zM423 515h3v3h-3z" fill="#ffff00"/>
<path d="M424 516h1v1h-1z" fill="#000000"/>
<path d="M425 514h4v2h-4zM391 502h3v3h-3z" fill="#ffff00"/>
<path d="M392 503h1v1h-1z" fill="#000000"/>
<path d="M393 501h4v2h-4zM423 502h3v3h-3z" fill="#ffff00"/>
<path d="M424 503h1v1h-1z" fill="#000000"/>
<path d="M425 501h4v2h-4z" fill="#ffff00"/>
<path d="M387 461h2v7h-2zM386 461h4v1h-4zM386 467h4v1h-4zM391 469h5v2h-5zM390 468h1v4h-1zM396 468h1v4h-1z" fill="#00a000"/>
<path d="M389 460h5v5h-5z" fill="#00ffff"/>
<path d="M391 462h5v6h-5z" fill="#ffff00"/>
<path d="M392 463h3v4h-3z" fill="#a02000"/>
<path d="M396 456h3v6h-3zM399 458h3v4h-3zM402 459h1v3h-1z" fill="#ffff00"/>
<path d="M397 457h1v1h-1z" fill="#000000"/>
<path d="M405 461h2v7h-2zM404 461h4v1h-4zM404 467h4v1h-4zM409 469h5v2h-5zM408 468h1v4h-1zM414 468h1v4h-1z" fill="#00a000"/>
<path d="M409 462h5v6h-5z" fill="#ffff00"/>
<path d="M410 463h3v4h-3z" fill="#a02000"/>
<path d="M414 456h3v6h-3zM417 458h3v4h-3zM420 459h1v3h-1z" fill="#ffff00"/>
<path d="M415 457h1v1h-1z" fill="#000000"/>
<path d="M461 461h2v7h-2zM460 461h4v1h-4zM460 467h4v1h-4zM465 469h5v2h-5zM464 468h1v4h-1zM470 468h1v4h-1z" fill="#00a000"/>
<path d="M463 460h5v5h-5z" fill="#00ffff"/>
<path d="M465 462h5v6h-5z" fill="#ffff00"/>
<path d="M466 463h3v4h-3z" fill="#a02000"/>
<path d="M470 456h3v6h-3zM473 458h3v4h-3zM476 459h1v3h-1z" fill="#ffff00"/>
<path d="M471 457h1v1h-1z" fill="#000000"/>
<path d="M466 461h2v7h-2zM465 461h4v1h-4zM465 467h4v1h-4zM470 469h5v2h-5zM469 468h1v4h-1zM475 468h1v4h-1z" fill="#00a000"/>
<path d="M470 462h5v6h-5z" fill="#ffff00"/>
<path d="M471 463h3v4h-3z" fill="#a02000"/>
<path d="M475 456h3v6h-3zM478 458h3v4h-3zM481 459h1v3h-1z" fill="#ffff00"/>
<path d="M476 457h1v1h-1z" fill="#000000"/>
<path d="M387 490h2v7h-2zM386 490h4v1h-4zM386 496h4v1h-4zM391 498h5v2h-5zM390 497h1v4h-1zM396 497h1v4h-1z" fill="#00a000"/>
<path d="M391 491h5v6h-5z" fill="#ffff00"/>
<path d="M392 492h3v4h-3z" fill="#a02000"/>
<path d="M396 485h3v6h-3zM399 487h3v4h-3zM402 488h1v3h-1z" fill="#ffff00"/>
<path d="M397 486h1v1h-1z" fill="#000000"/>
<path d="M405 490h2v7h-2zM404 490h4v1h-4zM404 496h4v1h-4zM409 498h5v2h-5zM408 497h1v4h-1zM414 497h1v4h-1z" fill="#00a000"/>
<path d="M409 491h5v6h-5z" fill="#ffff00"/>
<path d="M410 492h3v4h-3z" fill="#a02000"/>
<path d="M414 485h3v6h-3zM417 487h3v4h-3zM420 488h1v3h-1z" fill="#ffff00"/>
<path d="M415 486h1v1h-1z" fill="#000000"/>
<path d="M409 498h2v7h-2zM408 498h4v1h-4zM408 504h4v1h-4zM413 506h5v2h-5zM412 505h1v4h-1zM418 505h1v4h-1z" fill="#00a000"/>
<path d="M413 499h5v6h-5z" fill="#ffff00"/>
<path d="M414 500h3v4h-3z" fill="#a02000"/>
<path d="M418 493h3v6h-3zM421 495h3v4h-3zM424 496h1v3h-1z" fill="#ffff00"/>
<path d="M419 494h1v1h-1z" fill="#000000"/>
<path d="M439 501h2v7h-2zM438 501h4v1h-4zM438 507h4v1h-4zM443 509h5v2h-5zM442 508h1v4h-1zM448 508h1v4h-1z" fill="#00a000"/>
<path d="M441 500h5v5h-5z" fill="#00ffff"/>
<path d="M443 502h5v6h-5z" fill="#ffff00"/>
<path d="M444 503h3v4h-3z" fill="#a02000"/>
<path d="M448 496h3v6h-3zM451 498h3v4h-3zM454 499h1v3h-1z" fill="#ffff00"/>
<path d="M449 497h1v1h-1z" fill="#000000"/>
<path d="M461 497h2v7h-2zM460 497h4v1h-4zM460 503h4v1h-4zM465 505h5v2h-5zM464 504h1v4h-1zM470 504h1v4h-1z" fill="#00a000"/>
<path d="M463 496h5v5h-5z" fill="#00ffff"/>
<path d="M465 498h5v6h-5z" fill="#ffff00"/>
<path d="M466 499h3v4h-3z" fill="#a02000"/>
<path d="M470 492h3v6h-3zM473 494h3v4h-3zM476 495h1v3h-1z" fill="#ffff00"/>
<path d="M471 493h1v1h-1z" fill="#000000"/>
<path d="M483 498h2v7h-2zM482 498h4v1h-4zM482 504h4v1h-4zM487 506h5v2h-5zM486 505h1v4h-1zM492 505h1v4h-1z" fill="#00a000"/>
<path d="M487 499h5v6h-5z" fill="#ffff00"/>
<path d="M488 500h3v4h-3z" fill="#a02000"/>
<path d="M492 493h3v6h-3zM495 495h3v4h-3zM498 496h1v3h-1z" fill="#ffff00"/>
<path d="M493 494h1v1h-1z" fill="#000000"/>
<path d="M505 498h2v7h-2zM504 498h4v1h-4zM504 504h4v1h-4zM509 506h5v2h-5zM508 505h1v4h-1zM514 505h1v4h-1z" fill="#00a000"/>
<path d="M509 499h5v6h-5z" fill="#ffff00"/>
<path d="M510 500h3v4h-3z" fill="#a02000"/>
<path d="M514 493h3v6h-3zM517 495h3v4h-3zM520 496h1v3h-1z" fill="#ffff00"/>
<path d="M515 494h1v1h-1z" fill="#000000"/>
<path d="M544 498h2v7h-2zM543 498h4v1h-4zM543 504h4v1h-4zM548 506h5v2h-5zM547 505h1v4h-1zM553 505h1v4h-1z" fill="#00a000"/>
<path d="M548 499h5v6h-5z" fill="#ffff00"/>
<path d="M549 500h3v4h-3z" fill="#a02000"/>
<path d="M553 493h3v6h-3zM556 495h3v4h-3zM559 496h1v3h-1z" fill="#ffff00"/>
<path d="M554 494h1v1h-1z" fill="#000000"/>
<path d="M601 488h2v7h-2zM600 488h4v1h-4zM600 494h4v1h-4zM605 496h5v2h-5zM604 495h1v4h-1zM610 495h1v4h-1z" fill="#00a000"/>
<path d="M603 487h5v5h-5z" fill="#00ffff"/>
<path d="M605 489h5v6h-5z" fill="#ffff00"/>
<path d="M606 490h3v4h-3z" fill="#a02000"/>
<path d="M610 483h3v6h-3zM613 485h3v4h-3zM616 486h1v3h-1z" fill="#ffff00"/>
<path d="M611 484h1v1h-1z" fill="#000000"/>
<path d="M620 488h2v7h-2zM619 488h4v1h-4zM619 494h4v1h-4zM624 496h5v2h-5zM623 495h1v4h-1zM629 495h1v4h-1z" fill="#00a000"/>
<path d="M624 489h5v6h-5z" fill="#ffff00"/>
<path d="M625 490h3v4h-3z" fill="#a02000"/>
<path d="M629 483h3v6h-3zM632 485h3v4h-3zM635 486h1v3h-1z" fill="#ffff00"/>
<path d="M630 484h1v1h-1z" fill="#000000"/>
<path d="M620 498h2v7h-2zM619 498h4v1h-4zM619 504h4v1h-4zM624 506h5v2h-5zM623 505h1v4h-1zM629 505h1v4h-1z" fill="#00a000"/>
<path d="M624 499h5v6h-5z" fill="#ffff00"/>
<path d="M625 500h3v4h-3z" fill="#a02000"/>
<path d="M629 493h3v6h-3zM632 495h3v4h-3zM635 496h1v3h-1z" fill="#ffff00"/>
<path d="M630 494h1v1h-1z" fill="#000000"/>
<path d="M632 498h2v7h-2zM631 498h4v1h-4zM631 504h4v1h-4zM636 506h5v2h-5zM635 505h1v4h-1zM641 505h1v4h-1z" fill="#00a000"/>
<path d="M634 497h5v5h-5z" fill="#00ffff"/>
<path d="M636 499h5v6h-5z" fill="#ffff00"/>
<path d="M637 500h3v4h-3z" fill="#a02000"/>
<path d="M641 493h3v6h-3zM644 495h3v4h-3zM647 496h1v3h-1z" fill="#ffff00"/>
<path d="M642 494h1v1h-1z" fill="#000000"/>
<path d="M387 512h2v7h-2zM386 512h4v1h-4zM386 518h4v1h-4zM391 520h5v2h-5zM390 519h1v4h-1zM396 519h1v4h-1z" fill="#00a000"/>
<path d="M391 513h5v6h-5z" fill="#ffff00"/>
<path d="M392 514h3v4h-3z" fill="#a02000"/>
<path d="M396 507h3v6h-3zM399 509h3v4h-3zM402 510h1v3h-1z" fill="#ffff00"/>
<path d="M397 508h1v1h-1z" fill="#000000"/>
<path d="M409 512h2v7h-2zM408 512h4v1h-4zM408 518h4v1h-4zM413 520h5v2h-5zM412 519h1v4h-1zM418 519h1v4h-1z" fill="#00a000"/>
<path d="M413 513h5v6h-5z" fill="#ffff00"/>
<path d="M414 514h3v4h-3z" fill="#a02000"/>
<path d="M418 507h3v6h-3zM421 509h3v4h-3zM424 510h1v3h-1z" fill="#ffff00"/>
<path d="M419 508h1v1h-1z" fill="#000000"/>
<path d="M441 512h2v7h-2zM440 512h4v1h-4zM440 518h4v1h-4zM445 520h5v2h-5zM444 519h1v4h-1zM450 519h1v4h-1z" fill="#00a000"/>
<path d="M445 513h5v6h-5z" fill="#ffff00"/>
<path d="M446 514h3v4h-3z" fill="#a02000"/>
<path d="M450 507h3v6h-3zM453 509h3v4h-3zM456 510h1v3h-1z" fill="#ffff00"/>
<path d="M451 508h1v1h-1z" fill="#000000"/>
<path d="M387 539h2v7h-2zM386 539h4v1h-4zM386 545h4v1h-4zM391 547h5v2h-5zM390 546h1v4h-1zM396 546h1v4h-1z" fill="#00a000"/>
<path d="M391 540h5v6h-5z" fill="#ffff00"/>
<path d="M392 541h3v4h-3z" fill="#a02000"/>
<path d="M396 534h3v6h-3zM399 536h3v4h-3zM402 537h1v3h-1z" fill="#ffff00"/>
<path d="M397 535h1v1h-1z" fill="#000000"/>
<path d="M441 539h2v7h-2zM440 539h4v1h-4zM440 545h4v1h-4zM445 547h5v2h-5zM444 546h1v4h-1zM450 546h1v4h-1z" fill="#00a000"/>
<path d="M445 540h5v6h-5z" fill="#ffff00"/>
<path d="M446 541h3v4h-3z" fill="#a02000"/>
<path d="M450 534h3v6h-3zM453 536h3v4h-3zM456 537h1v3h-1z" fill="#ffff00"/>
<path d="M451 535h1v1h-1z" fill="#000000"/>
<path d="M387 566h2v7h-2zM386 566h4v1h-4zM386 572h4v1h-4zM391 574h5v2h-5zM390 573h1v4h-1zM396 573h1v4h-1z" fill="#00a000"/>
<path d="M391 567h5v6h-5z" fill="#ffff00"/>
<path d="M392 568h3v4h-3z" fill="#a02000"/>
<path d="M396 561h3v6h-3zM399 563h3v4h-3zM402 564h1v3h-1z" fill="#ffff00"/>
<path d="M397 562h1v1h-1z" fill="#000000"/>
<path d="M409 566h2v7h-2zM408 566h4v1h-4zM408 572h4v1h-4zM413 574h5v2h-5zM412 573h1v4h-1zM418 573h1v4h-1z" fill="#00a000"/>
<path d="M413 567h5v6h-5z" fill="#ffff00"/>
<path d="M414 568h3v4h-3z" fill="#a02000"/>
<path d="M418 561h3v6h-3zM421 563h3v4h-3zM424 564h1v3h-1z" fill="#ffff00"/>
<path d="M419 562h1v1h-1z" fill="#000000"/>
<path d="M441 566h2v7h-2zM440 566h4v1h-4zM440 572h4v1h-4zM445 574h5v2h-5zM444 573h1v4h-1zM450 573h1v4h-1z" fill="#00a000"/>
<path d="M445 567h5v6h-5z" fill="#ffff00"/>
<path d="M446 568h3v4h-3z" fill="#a02000"/>
<path d="M450 561h3v6h-3zM453 563h3v4h-3zM456 564h1v3h-1z" fill="#ffff00"/>
<path d="M451 562h1v1h-1z" fill="#000000"/>
<path d="M387 578h2v7h-2zM386 578h4v1h-4zM386 584h4v1h-4zM391 586h5v2h-5zM390 585h1v4h-1zM396 585h1v4h-1z" fill="#00a000"/>
<path d="M389 577h5v5h-5z" fill="#00ffff"/>
<path d="M391 579h5v6h-5z" fill="#ffff00"/>
<path d="M392 580h3v4h-3z" fill="#a02000"/>
<path d="M396 573h3v6h-3zM399 575h3v4h-3zM402 576h1v3h-1z" fill="#ffff00"/>
<path d="M397 574h1v1h-1z" fill="#000000"/>
<path d="M409 578h2v7h-2zM408 578h4v1h-4zM408 584h4v1h-4zM413 586h5v2h-5zM412 585h1v4h-1zM418 585h1v4h-1z" fill="#00a000"/>
<path d="M413 579h5v6h-5z" fill="#ffff00"/>
<path d="M414 580h3v4h-3z" fill="#a02000"/>
<path d="M418 573h3v6h-3zM421 575h3v4h-3zM424 576h1v3h-1z" fill="#ffff00"/>
<path d="M419 574h1v1h-1z" fill="#000000"/>
<path d="M441 578h2v7h-2zM440 578h4v1h-4zM440 584h4v1h-4zM445 586h5v2h-5zM444 585h1v4h-1zM450 585h1v4h-1z" fill="#00a000"/>
<path d="M445 579h5v6h-5z" fill="#ffff00"/>
<path d="M446 580h3v4h-3z" fill="#a02000"/>
<path d="M450 573h3v6h-3zM453 575h3v4h-3zM456 576h1v3h-1z" fill="#ffff00"/>
<path d="M451 574h1v1h-1z" fill="#000000"/>
<path d="M470 489h7v3h-7zM471 494h9v6h-9z" fill="#ffff00"/>
<path d="M555 569h32v1h-32zM555 575h32v1h-32zM555 569h1v7h-1zM586 569h1v7h-1z" fill="#00ffff"/>
<path d="M553 576h36v1h-36z" fill="#00ff00"/>
<path d="M554 576h28v1h-28zM554 579h28v1h-28zM554 576h1v4h-1zM581 576h1v4h-1zM590 572h11v1h-11zM590 576h11v1h-11zM590 572h1v5h-1zM600 572h1v5h-1z" fill="#00ffff"/>
<path d="M627 560h29v19h-29z" fill="#ffffff"/>
<path d="M629 561h1v2h-1zM632 561h1v2h-1zM635 561h1v2h-1zM638 561h1v2h-1zM641 561h1v2h-1zM644 561h1v2h-1zM629 564h1v2h-1zM632 564h1v2h-1zM635 564h1v2h-1zM638 564h1v2h-1zM641 564h1v2h-1zM644 564h1v2h-1zM629 567h1v2h-1zM632 567h1v2h-1zM635 567h1v2h-1zM638 567h1v2h-1zM641 567h1v2h-1zM644 567h1v2h-1zM629 570h1v2h-1zM632 570h1v2h-1zM635 570h1v2h-1zM638 570h1v2h-1zM641 570h1v2h-1zM644 570h1v2h-1zM646 561h3v11h-3zM650 561h4v11h-4z" fill="#000000"/>
<path d="M647 565h2v3h-2zM651 566h2v3h-2z" fill="#00ffff"/>
<path d="M647.5 571.5L649.5 562.5M651.5 571.5L653.5 562.5" stroke="#ffffff" fill="none"/>
<path d="M633 562h1v3h-1zM640 562h1v3h-1z" fill="#ffff00"/>
<path d="M629 575h4v2h-4zM635 575h5v2h-5zM642 575h4v2h-4zM647 575h3v2h-3zM651 575h3v2h-3zM635 572h5v2h-5zM641 572h5v2h-5z" fill="#000000"/>
<path d="M633 579h10v3h-10zM629 582h22v2h-22z" fill="#ffffff"/>
<path d="M780 440h249v1h-249zM780 443h249v1h-249zM789 442h4v1h-4zM808 442h4v1h-4zM828 442h4v1h-4zM847 442h4v1h-4zM866 442h4v1h-4zM887 442h4v1h-4zM909 442h4v1h-4zM928 442h4v1h-4zM948 442h4v1h-4zM966 442h4v1h-4zM986 442h4v1h-4zM1005 442h4v1h-4zM1024 442h4v1h-4zM888 438h4v2h-4zM781 435h1v12h-1z" fill="#00ff00"/>
<path d="M781 436h2v2h-2z" fill="#ffffff"/>
<path d="M820 435h1v12h-1z" fill="#00ff00"/>
<path d="M820 436h2v2h-2z" fill="#ffffff"/>
<path d="M858 435h1v12h-1z" fill="#00ff00"/>
<path d="M858 436h2v2h-2z" fill="#ffffff"/>
<path d="M879 435h1v12h-1z" fill="#00ff00"/>
<path d="M879 436h2v2h-2z" fill="#ffffff"/>
<path d="M901 435h1v12h-1z" fill="#00ff00"/>
<path d="M901 436h2v2h-2z" fill="#ffffff"/>
<path d="M940 435h1v12h-1z" fill="#00ff00"/>
<path d="M940 436h2v2h-2z" fill="#ffffff"/>
<path d="M978 435h1v12h-1z" fill="#00ff00"/>
<path d="M978 436h2v2h-2z" fill="#ffffff"/>
<path d="M997 435h1v12h-1z" fill="#00ff00"/>
<path d="M997 436h2v2h-2z" fill="#ffffff"/>
<path d="M1016 435h1v12h-1z" fill="#00ff00"/>
<path d="M1016 436h2v2h-2z" fill="#ffffff"/>
<path d="M1029 435h1v12h-1z" fill="#00ff00"/>
<path d="M1029 436h2v2h-2zM861 436h2v2h-2z" fill="#ffffff"/>
<path d="M800 443h1v4h-1zM839 443h1v4h-1zM920 443h1v4h-1zM958 443h1v4h-1z" fill="#00ff00"/>
<path d="M781 457h1v41h-1zM800 457h1v41h-1zM820 457h1v41h-1zM839 457h1v41h-1zM858 457h1v41h-1zM879 457h1v41h-1zM901 457h1v41h-1zM920 457h1v41h-1zM940 457h1v41h-1zM958 457h1v41h-1zM978 457h1v41h-1zM997 457h1v41h-1zM1016 457h1v41h-1zM1029 457h1v41h-1zM859 457h1v41h-1zM781 457h249v1h-249zM781 486h249v1h-249zM781 497h249v1h-249zM781 497h1v81h-1zM805 497h1v81h-1zM813 497h1v81h-1zM837 497h1v81h-1zM781 510h57v1h-57zM781 537h57v1h-57zM781 564h57v1h-57zM781 577h57v1h-57z" fill="#a8a8a8"/>
<path d="M770 457h1v121h-1zM773 457h1v121h-1z" fill="#00ff00"/>
<path d="M765 457h2v2h-2z" fill="#ffffff"/>
<path d="M766 457h11v1h-11z" fill="#00ff00"/>
<path d="M765 486h2v2h-2z" fill="#ffffff"/>
<path d="M766 486h11v1h-11z" fill="#00ff00"/>
<path d="M765 497h2v2h-2z" fill="#ffffff"/>
<path d="M766 497h11v1h-11z" fill="#00ff00"/>
<path d="M765 510h2v2h-2z" fill="#ffffff"/>
<path d="M766 510h11v1h-11z" fill="#00ff00"/>
<path d="M765 537h2v2h-2z" fill="#ffffff"/>
<path d="M766 537h11v1h-11z" fill="#00ff00"/>
<path d="M765 564h2v2h-2z" fill="#ffffff"/>
<path d="M766 564h11v1h-11z" fill="#00ff00"/>
<path d="M765 577h2v2h-2z" fill="#ffffff"/>
<path d="M766 577h11v1h-11zM771 468h2v9h-2zM771 491h2v5h-2zM771 514h2v8h-2zM771 542h2v9h-2zM771 568h2v7h-2zM780 588h57v1h-57zM780 593h57v1h-57zM781 584h1v14h-1z" fill="#00ff00"/>
<path d="M781 598h2v2h-2z" fill="#ffffff"/>
<path d="M805 584h1v14h-1z" fill="#00ff00"/>
<path d="M805 598h2v2h-2z" fill="#ffffff"/>
<path d="M813 584h1v14h-1z" fill="#00ff00"/>
<path d="M813 598h2v2h-2z" fill="#ffffff"/>
<path d="M837 584h1v14h-1z" fill="#00ff00"/>
<path d="M837 598h2v2h-2z" fill="#ffffff"/>
<path d="M791 591h4v2h-4zM822 591h4v2h-4zM806 590h5v5h-5zM1041 457h4v41h-4z" fill="#00ff00"/>
<path d="M1042 460h2v4h-2zM1042 469h2v4h-2zM1042 478h2v4h-2zM1042 487h2v4h-2z" fill="#000000"/>
<path d="M1047 457h1v41h-1z" fill="#00ff00"/>
<path d="M1050 457h2v2h-2z" fill="#ffffff"/>
<path d="M1039 457h11v1h-11z" fill="#00ff00"/>
<path d="M1050 486h2v2h-2z" fill="#ffffff"/>
<path d="M1039 486h11v1h-11z" fill="#00ff00"/>
<path d="M1050 497h2v2h-2z" fill="#ffffff"/>
<path d="M1039 497h11v1h-11z" fill="#00ff00"/>
<path d="M780 456h3v3h-3z" fill="#ffff00"/>
<path d="M781 457h1v1h-1z" fill="#000000"/>
<path d="M782 455h4v2h-4zM799 456h3v3h-3z" fill="#ffff00"/>
<path d="M800 457h1v1h-1z" fill="#000000"/>
<path d="M801 455h4v2h-4zM819 456h3v3h-3z" fill="#ffff00"/>
<path d="M820 457h1v1h-1z" fill="#000000"/>
<path d="M821 455h4v2h-4zM838 456h3v3h-3z" fill="#ffff00"/>
<path d="M839 457h1v1h-1z" fill="#000000"/>
<path d="M840 455h4v2h-4zM857 456h3v3h-3z" fill="#ffff00"/>
<path d="M858 457h1v1h-1z" fill="#000000"/>
<path d="M859 455h4v2h-4zM878 456h3v3h-3z" fill="#ffff00"/>
<path d="M879 457h1v1h-1z" fill="#000000"/>
<path d="M880 455h4v2h-4zM900 456h3v3h-3z" fill="#ffff00"/>
<path d="M901 457h1v1h-1z" fill="#000000"/>
<path d="M902 455h4v2h-4zM919 456h3v3h-3z" fill="#ffff00"/>
<path d="M920 457h1v1h-1z" fill="#000000"/>
<path d="M921 455h4v2h-4zM939 456h3v3h-3z" fill="#ffff00"/>
<path d="M940 457h1v1h-1z" fill="#000000"/>
<path d="M941 455h4v2h-4zM957 456h3v3h-3z" fill="#ffff00"/>
<path d="M958 457h1v1h-1z" fill="#000000"/>
<path d="M959 455h4v2h-4zM977 456h3v3h-3z" fill="#ffff00"/>
<path d="M978 457h1v1h-1z" fill="#000000"/>
<path d="M979 455h4v2h-4zM996 456h3v3h-3z" fill="#ffff00"/>
<path d="M997 457h1v1h-1z" fill="#000000"/>
<path d="M998 455h4v2h-4zM1015 456h3v3h-3z" fill="#ffff00"/>
<path d="M1016 457h1v1h-1z" fill="#000000"/>
<path d="M1017 455h4v2h-4zM1028 456h3v3h-3z" fill="#ffff00"/>
<path d="M1029 457h1v1h-1z" fill="#000000"/>
<path d="M1030 455h4v2h-4zM819 485h3v3h-3z" fill="#ffff00"/>
<path d="M820 486h1v1h-1z" fill="#000000"/>
<path d="M821 484h4v2h-4zM838 485h3v3h-3z" fill="#ffff00"/>
<path d="M839 486h1v1h-1z" fill="#000000"/>
<path d="M840 484h4v2h-4zM878 485h3v3h-3z" fill="#ffff00"/>
<path d="M879 486h1v1h-1z" fill="#000000"/>
<path d="M880 484h4v2h-4zM900 485h3v3h-3z" fill="#ffff00"/>
<path d="M901 486h1v1h-1z" fill="#000000"/>
<path d="M902 484h4v2h-4zM919 485h3v3h-3z" fill="#ffff00"/>
<path d="M920 486h1v1h-1z" fill="#000000"/>
<path d="M921 484h4v2h-4zM939 485h3v3h-3z" fill="#ffff00"/>
<path d="M940 486h1v1h-1z" fill="#000000"/>
<path d="M941 484h4v2h-4zM957 485h3v3h-3z" fill="#ffff00"/>
<path d="M958 486h1v1h-1z" fill="#000000"/>
<path d="M959 484h4v2h-4zM977 485h3v3h-3z" fill="#ffff00"/>
<path d="M978 486h1v1h-1z" fill="#000000"/>
<path d="M979 484h4v2h-4zM977 496h3v3h-3z" fill="#ffff00"/>
<path d="M978 497h1v1h-1z" fill="#000000"/>
<path d="M979 495h4v2h-4zM804 536h3v3h-3z" fill="#ffff00"/>
<path d="M805 537h1v1h-1z" fill="#000000"/>
<path d="M806 535h4v2h-4zM812 536h3v3h-3z" fill="#ffff00"/>
<path d="M813 537h1v1h-1z" fill="#000000"/>
<path d="M814 535h4v2h-4zM812 563h3v3h-3z" fill="#ffff00"/>
<path d="M813 564h1v1h-1z" fill="#000000"/>
<path d="M814 562h4v2h-4zM812 576h3v3h-3z" fill="#ffff00"/>
<path d="M813 577h1v1h-1z" fill="#000000"/>
<path d="M814 575h4v2h-4zM812 509h3v3h-3z" fill="#ffff00"/>
<path d="M813 510h1v1h-1z" fill="#000000"/>
<path d="M814 508h4v2h-4zM780 496h3v3h-3z" fill="#ffff00"/>
<path d="M781 497h1v1h-1z" fill="#000000"/>
<path d="M782 495h4v2h-4zM812 496h3v3h-3z" fill="#ffff00"/>
<path d="M813 497h1v1h-1z" fill="#000000"/>
<path d="M814 495h4v2h-4z" fill="#ffff00"/>
<path d="M776 455h2v7h-2zM775 455h4v1h-4zM775 461h4v1h-4zM780 463h5v2h-5zM779 462h1v4h-1zM785 462h1v4h-1z" fill="#00a000"/>
<path d="M778 454h5v5h-5z" fill="#00ffff"/>
<path d="M780 456h5v6h-5z" fill="#ffff00"/>
<path d="M781 457h3v4h-3z" fill="#a02000"/>
<path d="M785 450h3v6h-3zM788 452h3v4h-3zM791 453h1v3h-1z" fill="#ffff00"/>
<path d="M786 451h1v1h-1z" fill="#000000"/>
<path d="M794 455h2v7h-2zM793 455h4v1h-4zM793 461h4v1h-4zM798 463h5v2h-5zM797 462h1v4h-1zM803 462h1v4h-1z" fill="#00a000"/>
<path d="M798 456h5v6h-5z" fill="#ffff00"/>
<path d="M799 457h3v4h-3z" fill="#a02000"/>
<path d="M803 450h3v6h-3zM806 452h3v4h-3zM809 453h1v3h-1z" fill="#ffff00"/>
<path d="M804 451h1v1h-1z" fill="#000000"/>
<path d="M849 455h2v7h-2zM848 455h4v1h-4zM848 461h4v1h-4zM853 463h5v2h-5zM852 462h1v4h-1zM858 462h1v4h-1z" fill="#00a000"/>
<path d="M851 454h5v5h-5z" fill="#00ffff"/>
<path d="M853 456h5v6h-5z" fill="#ffff00"/>
<path d="M854 457h3v4h-3z" fill="#a02000"/>
<path d="M858 450h3v6h-3zM861 452h3v4h-3zM864 453h1v3h-1z" fill="#ffff00"/>
<path d="M859 451h1v1h-1z" fill="#000000"/>
<path d="M854 455h2v7h-2zM853 455h4v1h-4zM853 461h4v1h-4zM858 463h5v2h-5zM857 462h1v4h-1zM863 462h1v4h-1z" fill="#00a000"/>
<path d="M858 456h5v6h-5z" fill="#ffff00"/>
<path d="M859 457h3v4h-3z" fill="#a02000"/>
<path d="M863 450h3v6h-3zM866 452h3v4h-3zM869 453h1v3h-1z" fill="#ffff00"/>
<path d="M864 451h1v1h-1z" fill="#000000"/>
<path d="M776 484h2v7h-2zM775 484h4v1h-4zM775 490h4v1h-4zM780 492h5v2h-5zM779 491h1v4h-1zM785 491h1v4h-1z" fill="#00a000"/>
<path d="M780 485h5v6h-5z" fill="#ffff00"/>
<path d="M781 486h3v4h-3z" fill="#a02000"/>
<path d="M785 479h3v6h-3zM788 481h3v4h-3zM791 482h1v3h-1z" fill="#ffff00"/>
<path d="M786 480h1v1h-1z" fill="#000000"/>
<path d="M794 484h2v7h-2zM793 484h4v1h-4zM793 490h4v1h-4zM798 492h5v2h-5zM797 491h1v4h-1zM803 491h1v4h-1z" fill="#00a000"/>
<path d="M798 485h5v6h-5z" fill="#ffff00"/>
<path d="M799 486h3v4h-3z" fill="#a02000"/>
<path d="M803 479h3v6h-3zM806 481h3v4h-3zM809 482h1v3h-1z" fill="#ffff00"/>
<path d="M804 480h1v1h-1z" fill="#000000"/>
<path d="M798 492h2v7h-2zM797 492h4v1h-4zM797 498h4v1h-4zM802 500h5v2h-5zM801 499h1v4h-1zM807 499h1v4h-1z" fill="#00a000"/>
<path d="M802 493h5v6h-5z" fill="#ffff00"/>
<path d="M803 494h3v4h-3z" fill="#a02000"/>
<path d="M807 487h3v6h-3zM810 489h3v4h-3zM813 490h1v3h-1z" fill="#ffff00"/>
<path d="M808 488h1v1h-1z" fill="#000000"/>
<path d="M828 495h2v7h-2zM827 495h4v1h-4zM827 501h4v1h-4zM832 503h5v2h-5zM831 502h1v4h-1zM837 502h1v4h-1z" fill="#00a000"/>
<path d="M830 494h5v5h-5z" fill="#00ffff"/>
<path d="M832 496h5v6h-5z" fill="#ffff00"/>
<path d="M833 497h3v4h-3z" fill="#a02000"/>
<path d="M837 490h3v6h-3zM840 492h3v4h-3zM843 493h1v3h-1z" fill="#ffff00"/>
<path d="M838 491h1v1h-1z" fill="#000000"/>
<path d="M849 491h2v7h-2zM848 491h4v1h-4zM848 497h4v1h-4zM853 499h5v2h-5zM852 498h1v4h-1zM858 498h1v4h-1z" fill="#00a000"/>
<path d="M851 490h5v5h-5z" fill="#00ffff"/>
<path d="M853 492h5v6h-5z" fill="#ffff00"/>
<path d="M854 493h3v4h-3z" fill="#a02000"/>
<path d="M858 486h3v6h-3zM861 488h3v4h-3zM864 489h1v3h-1z" fill="#ffff00"/>
<path d="M859 487h1v1h-1z" fill="#000000"/>
<path d="M871 492h2v7h-2zM870 492h4v1h-4zM870 498h4v1h-4zM875 500h5v2h-5zM874 499h1v4h-1zM880 499h1v4h-1z" fill="#00a000"/>
<path d="M875 493h5v6h-5z" fill="#ffff00"/>
<path d="M876 494h3v4h-3z" fill="#a02000"/>
<path d="M880 487h3v6h-3zM883 489h3v4h-3zM886 490h1v3h-1z" fill="#ffff00"/>
<path d="M881 488h1v1h-1z" fill="#000000"/>
<path d="M893 492h2v7h-2zM892 492h4v1h-4zM892 498h4v1h-4zM897 500h5v2h-5zM896 499h1v4h-1zM902 499h1v4h-1z" fill="#00a000"/>
<path d="M897 493h5v6h-5z" fill="#ffff00"/>
<path d="M898 494h3v4h-3z" fill="#a02000"/>
<path d="M902 487h3v6h-3zM905 489h3v4h-3zM908 490h1v3h-1z" fill="#ffff00"/>
<path d="M903 488h1v1h-1z" fill="#000000"/>
<path d="M932 492h2v7h-2zM931 492h4v1h-4zM931 498h4v1h-4zM936 500h5v2h-5zM935 499h1v4h-1zM941 499h1v4h-1z" fill="#00a000"/>
<path d="M936 493h5v6h-5z" fill="#ffff00"/>
<path d="M937 494h3v4h-3z" fill="#a02000"/>
<path d="M941 487h3v6h-3zM944 489h3v4h-3zM947 490h1v3h-1z" fill="#ffff00"/>
<path d="M942 488h1v1h-1z" fill="#000000"/>
<path d="M989 482h2v7h-2zM988 482h4v1h-4zM988 488h4v1h-4zM993 490h5v2h-5zM992 489h1v4h-1zM998 489h1v4h-1z" fill="#00a000"/>
<path d="M991 481h5v5h-5z" fill="#00ffff"/>
<path d="M993 483h5v6h-5z" fill="#ffff00"/>
<path d="M994 484h3v4h-3z" fill="#a02000"/>
<path d="M998 477h3v6h-3zM1001 479h3v4h-3zM1004 480h1v3h-1z" fill="#ffff00"/>
<path d="M999 478h1v1h-1z" fill="#000000"/>
<path d="M1008 482h2v7h-2zM1007 482h4v1h-4zM1007 488h4v1h-4zM1012 490h5v2h-5zM1011 489h1v4h-1zM1017 489h1v4h-1z" fill="#00a000"/>
<path d="M1012 483h5v6h-5z" fill="#ffff00"/>
<path d="M1013 484h3v4h-3z" fill="#a02000"/>
<path d="M1017 477h3v6h-3zM1020 479h3v4h-3zM1023 480h1v3h-1z" fill="#ffff00"/>
<path d="M1018 478h1v1h-1z" fill="#000000"/>
<path d="M1008 492h2v7h-2zM1007 492h4v1h-4zM1007 498h4v1h-4zM1012 500h5v2h-5zM1011 499h1v4h-1zM1017 499h1v4h-1z" fill="#00a000"/>
<path d="M1012 493h5v6h-5z" fill="#ffff00"/>
<path d="M1013 494h3v4h-3z" fill="#a02000"/>
<path d="M1017 487h3v6h-3zM1020 489h3v4h-3zM1023 490h1v3h-1z" fill="#ffff00"/>
<path d="M1018 488h1v1h-1z" fill="#000000"/>
<path d="M1020 492h2v7h-2zM1019 492h4v1h-4zM1019 498h4v1h-4zM1024 500h5v2h-5zM1023 499h1v4h-1zM1029 499h1v4h-1z" fill="#00a000"/>
<path d="M1022 491h5v5h-5z" fill="#00ffff"/>
<path d="M1024 493h5v6h-5z" fill="#ffff00"/>
<path d="M1025 494h3v4h-3z" fill="#a02000"/>
<path d="M1029 487h3v6h-3zM1032 489h3v4h-3zM1035 490h1v3h-1z" fill="#ffff00"/>
<path d="M1030 488h1v1h-1z" fill="#000000"/>
<path d="M776 506h2v7h-2zM775 506h4v1h-4zM775 512h4v1h-4zM780 514h5v2h-5zM779 513h1v4h-1zM785 513h1v4h-1z" fill="#00a000"/>
<path d="M780 507h5v6h-5z" fill="#ffff00"/>
<path d="M781 508h3v4h-3z" fill="#a02000"/>
<path d="M785 501h3v6h-3zM788 503h3v4h-3zM791 504h1v3h-1z" fill="#ffff00"/>
<path d="M786 502h1v1h-1z" fill="#000000"/>
<path d="M798 506h2v7h-2zM797 506h4v1h-4zM797 512h4v1h-4zM802 514h5v2h-5zM801 513h1v4h-1zM807 513h1v4h-1z" fill="#00a000"/>
<path d="M802 507h5v6h-5z" fill="#ffff00"/>
<path d="M803 508h3v4h-3z" fill="#a02000"/>
<path d="M807 501h3v6h-3zM810 503h3v4h-3zM813 504h1v3h-1z" fill="#ffff00"/>
<path d="M808 502h1v1h-1z" fill="#000000"/>
<path d="M829 506h2v7h-2zM828 506h4v1h-4zM828 512h4v1h-4zM833 514h5v2h-5zM832 513h1v4h-1zM838 513h1v4h-1z" fill="#00a000"/>
<path d="M833 507h5v6h-5z" fill="#ffff00"/>
<path d="M834 508h3v4h-3z" fill="#a02000"/>
<path d="M838 501h3v6h-3zM841 503h3v4h-3zM844 504h1v3h-1z" fill="#ffff00"/>
<path d="M839 502h1v1h-1z" fill="#000000"/>
<path d="M776 533h2v7h-2zM775 533h4v1h-4zM775 539h4v1h-4zM780 541h5v2h-5zM779 540h1v4h-1zM785 540h1v4h-1z" fill="#00a000"/>
<path d="M780 534h5v6h-5z" fill="#ffff00"/>
<path d="M781 535h3v4h-3z" fill="#a02000"/>
<path d="M785 528h3v6h-3zM788 530h3v4h-3zM791 531h1v3h-1z" fill="#ffff00"/>
<path d="M786 529h1v1h-1z" fill="#000000"/>
<path d="M829 533h2v7h-2zM828 533h4v1h-4zM828 539h4v1h-4zM833 541h5v2h-5zM832 540h1v4h-1zM838 540h1v4h-1z" fill="#00a000"/>
<path d="M833 534h5v6h-5z" fill="#ffff00"/>
<path d="M834 535h3v4h-3z" fill="#a02000"/>
<path d="M838 528h3v6h-3zM841 530h3v4h-3zM844 531h1v3h-1z" fill="#ffff00"/>
<path d="M839 529h1v1h-1z" fill="#000000"/>
<path d="M776 560h2v7h-2zM775 560h4v1h-4zM775 566h4v1h-4zM780 568h5v2h-5zM779 567h1v4h-1zM785 567h1v4h-1z" fill="#00a000"/>
<path d="M780 561h5v6h-5z" fill="#ffff00"/>
<path d="M781 562h3v4h-3z" fill="#a02000"/>
<path d="M785 555h3v6h-3zM788 557h3v4h-3zM791 558h1v3h-1z" fill="#ffff00"/>
<path d="M786 556h1v1h-1z" fill="#000000"/>
<path d="M798 560h2v7h-2zM797 560h4v1h-4zM797 566h4v1h-4zM802 568h5v2h-5zM801 567h1v4h-1zM807 567h1v4h-1z" fill="#00a000"/>
<path d="M802 561h5v6h-5z" fill="#ffff00"/>
<path d="M803 562h3v4h-3z" fill="#a02000"/>
<path d="M807 555h3v6h-3zM810 557h3v4h-3zM813 558h1v3h-1z" fill="#ffff00"/>
<path d="M808 556h1v1h-1z" fill="#000000"/>
<path d="M829 560h2v7h-2zM828 560h4v1h-4zM828 566h4v1h-4zM833 568h5v2h-5zM832 567h1v4h-1zM838 567h1v4h-1z" fill="#00a000"/>
<path d="M833 561h5v6h-5z" fill="#ffff00"/>
<path d="M834 562h3v4h-3z" fill="#a02000"/>
<path d="M838 555h3v6h-3zM841 557h3v4h-3zM844 558h1v3h-1z" fill="#ffff00"/>
<path d="M839 556h1v1h-1z" fill="#000000"/>
<path d="M776 572h2v7h-2zM775 572h4v1h-4zM775 578h4v1h-4zM780 580h5v2h-5zM779 579h1v4h-1zM785 579h1v4h-1z" fill="#00a000"/>
<path d="M778 571h5v5h-5z" fill="#00ffff"/>
<path d="M780 573h5v6h-5z" fill="#ffff00"/>
<path d="M781 574h3v4h-3z" fill="#a02000"/>
<path d="M785 567h3v6h-3zM788 569h3v4h-3zM791 570h1v3h-1z" fill="#ffff00"/>
<path d="M786 568h1v1h-1z" fill="#000000"/>
<path d="M798 572h2v7h-2zM797 572h4v1h-4zM797 578h4v1h-4zM802 580h5v2h-5zM801 579h1v4h-1zM807 579h1v4h-1z" fill="#00a000"/>
<path d="M802 573h5v6h-5z" fill="#ffff00"/>
<path d="M803 574h3v4h-3z" fill="#a02000"/>
<path d="M807 567h3v6h-3zM810 569h3v4h-3zM813 570h1v3h-1z" fill="#ffff00"/>
<path d="M808 568h1v1h-1z" fill="#000000"/>
<path d="M829 572h2v7h-2zM828 572h4v1h-4zM828 578h4v1h-4zM833 580h5v2h-5zM832 579h1v4h-1zM838 579h1v4h-1z" fill="#00a000"/>
<path d="M833 573h5v6h-5z" fill="#ffff00"/>
<path d="M834 574h3v4h-3z" fill="#a02000"/>
<path d="M838 567h3v6h-3zM841 569h3v4h-3zM844 570h1v3h-1z" fill="#ffff00"/>
<path d="M839 568h1v1h-1z" fill="#000000"/>
<path d="M858 483h7v3h-7zM859 488h9v6h-9z" fill="#ffff00"/>
<path d="M943 566h32v1h-32zM943 572h32v1h-32zM943 566h1v7h-1zM974 566h1v7h-1z" fill="#00ffff"/>
<path d="M941 573h36v1h-36z" fill="#00ff00"/>
<path d="M942 573h28v1h-28zM942 576h28v1h-28zM942 573h1v4h-1zM969 573h1v4h-1zM978 569h11v1h-11zM978 573h11v1h-11zM978 569h1v5h-1zM988 569h1v5h-1z" fill="#00ffff"/>
<path d="M1018 558h29v19h-29z" fill="#ffffff"/>
<path d="M1020 559h1v2h-1zM1023 559h1v2h-1zM1026 559h1v2h-1zM1029 559h1v2h-1zM1032 559h1v2h-1zM1035 559h1v2h-1zM1020 562h1v2h-1zM1023 562h1v2h-1zM1026 562h1v2h-1zM1029 562h1v2h-1zM1032 562h1v2h-1zM1035 562h1v2h-1zM1020 565h1v2h-1zM1023 565h1v2h-1zM1026 565h1v2h-1zM1029 565h1v2h-1zM1032 565h1v2h-1zM1035 565h1v2h-1zM1020 568h1v2h-1zM1023 568h1v2h-1zM1026 568h1v2h-1zM1029 568h1v2h-1zM1032 568h1v2h-1zM1035 568h1v2h-1zM1037 559h3v11h-3zM1041 559h4v11h-4z" fill="#000000"/>
<path d="M1038 563h2v3h-2zM1042 564h2v3h-2z" fill="#00ffff"/>
<path d="M1038.5 569.5L1040.5 560.5M1042.5 569.5L1044.5 560.5" stroke="#ffffff" fill="none"/>
<path d="M1024 560h1v3h-1zM1031 560h1v3h-1z" fill="#ffff00"/>
<path d="M1020 573h4v2h-4zM1026 573h5v2h-5zM1033 573h4v2h-4zM1038 573h3v2h-3zM1042 573h3v2h-3zM1026 570h5v2h-5zM1032 570h5v2h-5z" fill="#000000"/>
<path d="M1024 577h10v3h-10zM1020 580h22v2h-22z" fill="#ffffff"/>
<path d="M0 444h249v4h-249z" fill="#00ff00"/>
<path d="M3 445h14v2h-14zM22 445h14v2h-14zM41 445h14v2h-14zM60 445h14v2h-14zM79 445h14v2h-14zM98 445h14v2h-14zM117 445h14v2h-14zM136 445h14v2h-14zM155 445h14v2h-14zM174 445h14v2h-14zM193 445h14v2h-14zM212 445h14v2h-14zM231 445h14v2h-14z" fill="#000000"/>
<path d="M108 441h4v2h-4zM0 438h1v12h-1z" fill="#00ff00"/>
<path d="M0 439h2v2h-2z" fill="#ffffff"/>
<path d="M39 438h1v12h-1z" fill="#00ff00"/>
<path d="M39 439h2v2h-2z" fill="#ffffff"/>
<path d="M77 438h1v12h-1z" fill="#00ff00"/>
<path d="M77 439h2v2h-2z" fill="#ffffff"/>
<path d="M98 438h1v12h-1z" fill="#00ff00"/>
<path d="M98 439h2v2h-2z" fill="#ffffff"/>
<path d="M120 438h1v12h-1z" fill="#00ff00"/>
<path d="M120 439h2v2h-2z" fill="#ffffff"/>
<path d="M159 438h1v12h-1z" fill="#00ff00"/>
<path d="M159 439h2v2h-2z" fill="#ffffff"/>
<path d="M197 438h1v12h-1z" fill="#00ff00"/>
<path d="M197 439h2v2h-2z" fill="#ffffff"/>
<path d="M216 438h1v12h-1z" fill="#00ff00"/>
<path d="M216 439h2v2h-2z" fill="#ffffff"/>
<path d="M235 438h1v12h-1z" fill="#00ff00"/>
<path d="M235 439h2v2h-2z" fill="#ffffff"/>
<path d="M248 438h1v12h-1z" fill="#00ff00"/>
<path d="M248 439h2v2h-2zM80 439h2v2h-2z" fill="#ffffff"/>
<path d="M20 446h1v4h-1zM58 446h1v4h-1zM139 446h1v4h-1zM178 446h1v4h-1z" fill="#00ff00"/>
<path d="M0 460h1v41h-1zM20 460h1v41h-1zM39 460h1v41h-1zM58 460h1v41h-1zM77 460h1v41h-1zM98 460h1v41h-1zM120 460h1v41h-1zM139 460h1v41h-1zM159 460h1v41h-1zM178 460h1v41h-1zM197 460h1v41h-1zM216 460h1v41h-1zM235 460h1v41h-1zM248 460h1v41h-1zM78 460h1v41h-1zM0 460h249v1h-249zM0 489h249v1h-249zM0 500h249v1h-249zM0 500h1v81h-1zM24 500h1v81h-1zM32 500h1v81h-1zM56 500h1v81h-1zM0 513h57v1h-57zM0 540h57v1h-57zM0 567h57v1h-57zM0 580h57v1h-57z" fill="#a8a8a8"/>
<path d="M-10 460h1v121h-1zM-7 460h1v121h-1z" fill="#00ff00"/>
<path d="M-15 460h2v2h-2z" fill="#ffffff"/>
<path d="M-14 460h11v1h-11z" fill="#00ff00"/>
<path d="M-15 489h2v2h-2z" fill="#ffffff"/>
<path d="M-14 489h11v1h-11z" fill="#00ff00"/>
<path d="M-15 500h2v2h-2z" fill="#ffffff"/>
<path d="M-14 500h11v1h-11z" fill="#00ff00"/>
<path d="M-15 513h2v2h-2z" fill="#ffffff"/>
<path d="M-14 513h11v1h-11z" fill="#00ff00"/>
<path d="M-15 540h2v2h-2z" fill="#ffffff"/>
<path d="M-14 540h11v1h-11z" fill="#00ff00"/>
<path d="M-15 567h2v2h-2z" fill="#ffffff"/>
<path d="M-14 567h11v1h-11z" fill="#00ff00"/>
<path d="M-15 580h2v2h-2z" fill="#ffffff"/>
<path d="M-14 580h11v1h-11zM-9 471h2v9h-2zM-9 494h2v5h-2zM-9 517h2v8h-2zM-9 545h2v9h-2zM-9 571h2v7h-2zM0 591h57v1h-57zM0 596h57v1h-57zM0 587h1v14h-1z" fill="#00ff00"/>
<path d="M0 601h2v2h-2z" fill="#ffffff"/>
<path d="M24 587h1v14h-1z" fill="#00ff00"/>
<path d="M24 601h2v2h-2z" fill="#ffffff"/>
<path d="M32 587h1v14h-1z" fill="#00ff00"/>
<path d="M32 601h2v2h-2z" fill="#ffffff"/>
<path d="M56 587h1v14h-1z" fill="#00ff00"/>
<path d="M56 601h2v2h-2z" fill="#ffffff"/>
<path d="M11 594h4v2h-4zM42 594h4v2h-4zM26 593h5v5h-5zM259 460h4v41h-4z" fill="#00ff00"/>
<path d="M260 463h2v4h-2zM260 472h2v4h-2zM260 481h2v4h-2zM260 490h2v4h-2z" fill="#000000"/>
<path d="M265 460h1v41h-1z" fill="#00ff00"/>
<path d="M268 460h2v2h-2z" fill="#ffffff"/>
<path d="M257 460h11v1h-11z" fill="#00ff00"/>
<path d="M268 489h2v2h-2z" fill="#ffffff"/>
<path d="M257 489h11v1h-11z" fill="#00ff00"/>
<path d="M268 500h2v2h-2z" fill="#ffffff"/>
<path d="M257 500h11v1h-11z" fill="#00ff00"/>
<path d="M-1 459h3v3h-3z" fill="#ffff00"/>
<path d="M0 460h1v1h-1z" fill="#000000"/>
<path d="M1 458h4v2h-4zM19 459h3v3h-3z" fill="#ffff00"/>
<path d="M20 460h1v1h-1z" fill="#000000"/>
<path d="M21 458h4v2h-4zM38 459h3v3h-3z" fill="#ffff00"/>
<path d="M39 460h1v1h-1z" fill="#000000"/>
<path d="M40 458h4v2h-4zM57 459h3v3h-3z" fill="#ffff00"/>
<path d="M58 460h1v1h-1z" fill="#000000"/>
<path d="M59 458h4v2h-4zM76 459h3v3h-3z" fill="#ffff00"/>
<path d="M77 460h1v1h-1z" fill="#000000"/>
<path d="M78 458h4v2h-4zM97 459h3v3h-3z" fill="#ffff00"/>
<path d="M98 460h1v1h-1z" fill="#000000"/>
<path d="M99 458h4v2h-4zM119 459h3v3h-3z" fill="#ffff00"/>
<path d="M120 460h1v1h-1z" fill="#000000"/>
<path d="M121 458h4v2h-4zM138 459h3v3h-3z" fill="#ffff00"/>
<path d="M139 460h1v1h-1z" fill="#000000"/>
<path d="M140 458h4v2h-4zM158 459h3v3h-3z" fill="#ffff00"/>
<path d="M159 460h1v1h-1z" fill="#000000"/>
<path d="M160 458h4v2h-4zM177 459h3v3h-3z" fill="#ffff00"/>
<path d="M178 460h1v1h-1z" fill="#000000"/>
<path d="M179 458h4v2h-4zM196 459h3v3h-3z" fill="#ffff00"/>
<path d="M197 460h1v1h-1z" fill="#000000"/>
<path d="M198 458h4v2h-4zM215 459h3v3h-3z" fill="#ffff00"/>
<path d="M216 460h1v1h-1z" fill="#000000"/>
<path d="M217 458h4v2h-4zM234 459h3v3h-3z" fill="#ffff00"/>
<path d="M235 460h1v1h-1z" fill="#000000"/>
<path d="M236 458h4v2h-4zM247 459h3v3h-3z" fill="#ffff00"/>
<path d="M248 460h1v1h-1z" fill="#000000"/>
<path d="M249 458h4v2h-4zM38 488h3v3h-3z" fill="#ffff00"/>
<path d="M39 489h1v1h-1z" fill="#000000"/>
<path d="M40 487h4v2h-4zM57 488h3v3h-3z" fill="#ffff00"/>
<path d="M58 489h1v1h-1z" fill="#000000"/>
<path d="M59 487h4v2h-4zM97 488h3v3h-3z" fill="#ffff00"/>
<path d="M98 489h1v1h-1z" fill="#000000"/>
<path d="M99 487h4v2h-4zM119 488h3v3h-3z" fill="#ffff00"/>
<path d="M120 489h1v1h-1z" fill="#000000"/>
<path d="M121 487h4v2h-4zM138 488h3v3h-3z" fill="#ffff00"/>
<path d="M139 489h1v1h-1z" fill="#000000"/>
<path d="M140 487h4v2h-4zM158 488h3v3h-3z" fill="#ffff00"/>
<path d="M159 489h1v1h-1z" fill="#000000"/>
<path d="M160 487h4v2h-4zM177 488h3v3h-3z" fill="#ffff00"/>
<path d="M178 489h1v1h-1z" fill="#000000"/>
<path d="M179 487h4v2h-4zM196 488h3v3h-3z" fill="#ffff00"/>
<path d="M197 489h1v1h-1z" fill="#000000"/>
<path d="M198 487h4v2h-4zM196 499h3v3h-3z" fill="#ffff00"/>
<path d="M197 500h1v1h-1z" fill="#000000"/>
<path d="M198 498h4v2h-4zM23 539h3v3h-3z" fill="#ffff00"/>
<path d="M24 540h1v1h-1z" fill="#000000"/>
<path d="M25 538h4v2h-4zM31 539h3v3h-3z" fill="#ffff00"/>
<path d="M32 540h1v1h-1z" fill="#000000"/>
<path d="M33 538h4v2h-4zM31 566h3v3h-3z" fill="#ffff00"/>
<path d="M32 567h1v1h-1z" fill="#000000"/>
<path d="M33 565h4v2h-4zM31 579h3v3h-3z" fill="#ffff00"/>
<path d="M32 580h1v1h-1z" fill="#000000"/>
<path d="M33 578h4v2h-4zM31 512h3v3h-3z" fill="#ffff00"/>
<path d="M32 513h1v1h-1z" fill="#000000"/>
<path d="M33 511h4v2h-4zM-1 499h3v3h-3z" fill="#ffff00"/>
<path d="M0 500h1v1h-1z" fill="#000000"/>
<path d="M1 498h4v2h-4zM31 499h3v3h-3z" fill="#ffff00"/>
<path d="M32 500h1v1h-1z" fill="#000000"/>
<path d="M33 498h4v2h-4z" fill="#ffff00"/>
<path d="M-5 458h2v7h-2zM-6 458h4v1h-4zM-6 464h4v1h-4zM-1 466h5v2h-5zM-2 465h1v4h-1zM4 465h1v4h-1z" fill="#00a000"/>
<path d="M-3 457h5v5h-5z" fill="#00ffff"/>
<path d="M-1 459h5v6h-5z" fill="#ffff00"/>
<path d="M0 460h3v4h-3z" fill="#a02000"/>
<path d="M4 453h3v6h-3zM7 455h3v4h-3zM10 456h1v3h-1z" fill="#ffff00"/>
<path d="M5 454h1v1h-1z" fill="#000000"/>
<path d="M13 458h2v7h-2zM12 458h4v1h-4zM12 464h4v1h-4zM17 466h5v2h-5zM16 465h1v4h-1zM22 465h1v4h-1z" fill="#00a000"/>
<path d="M17 459h5v6h-5z" fill="#ffff00"/>
<path d="M18 460h3v4h-3z" fill="#a02000"/>
<path d="M22 453h3v6h-3zM25 455h3v4h-3zM28 456h1v3h-1z" fill="#ffff00"/>
<path d="M23 454h1v1h-1z" fill="#000000"/>
<path d="M69 458h2v7h-2zM68 458h4v1h-4zM68 464h4v1h-4zM73 466h5v2h-5zM72 465h1v4h-1zM78 465h1v4h-1z" fill="#00a000"/>
<path d="M71 457h5v5h-5z" fill="#00ffff"/>
<path d="M73 459h5v6h-5z" fill="#ffff00"/>
<path d="M74 460h3v4h-3z" fill="#a02000"/>
<path d="M78 453h3v6h-3zM81 455h3v4h-3zM84 456h1v3h-1z" fill="#ffff00"/>
<path d="M79 454h1v1h-1z" fill="#000000"/>
<path d="M74 458h2v7h-2zM73 458h4v1h-4zM73 464h4v1h-4zM78 466h5v2h-5zM77 465h1v4h-1zM83 465h1v4h-1z" fill="#00a000"/>
<path d="M78 459h5v6h-5z" fill="#ffff00"/>
<path d="M79 460h3v4h-3z" fill="#a02000"/>
<path d="M83 453h3v6h-3zM86 455h3v4h-3zM89 456h1v3h-1z" fill="#ffff00"/>
<path d="M84 454h1v1h-1z" fill="#000000"/>
<path d="M-5 487h2v7h-2zM-6 487h4v1h-4zM-6 493h4v1h-4zM-1 495h5v2h-5zM-2 494h1v4h-1zM4 494h1v4h-1z" fill="#00a000"/>
<path d="M-1 488h5v6h-5z" fill="#ffff00"/>
<path d="M0 489h3v4h-3z" fill="#a02000"/>
<path d="M4 482h3v6h-3zM7 484h3v4h-3zM10 485h1v3h-1z" fill="#ffff00"/>
<path d="M5 483h1v1h-1z" fill="#000000"/>
<path d="M13 487h2v7h-2zM12 487h4v1h-4zM12 493h4v1h-4zM17 495h5v2h-5zM16 494h1v4h-1zM22 494h1v4h-1z" fill="#00a000"/>
<path d="M17 488h5v6h-5z" fill="#ffff00"/>
<path d="M18 489h3v4h-3z" fill="#a02000"/>
<path d="M22 482h3v6h-3zM25 484h3v4h-3zM28 485h1v3h-1z" fill="#ffff00"/>
<path d="M23 483h1v1h-1z" fill="#000000"/>
<path d="M17 495h2v7h-2zM16 495h4v1h-4zM16 501h4v1h-4zM21 503h5v2h-5zM20 502h1v4h-1zM26 502h1v4h-1z" fill="#00a000"/>
<path d="M21 496h5v6h-5z" fill="#ffff00"/>
<path d="M22 497h3v4h-3z" fill="#a02000"/>
<path d="M26 490h3v6h-3zM29 492h3v4h-3zM32 493h1v3h-1z" fill="#ffff00"/>
<path d="M27 491h1v1h-1z" fill="#000000"/>
<path d="M47 498h2v7h-2zM46 498h4v1h-4zM46 504h4v1h-4zM51 506h5v2h-5zM50 505h1v4h-1zM56 505h1v4h-1z" fill="#00a000"/>
<path d="M49 497h5v5h-5z" fill="#00ffff"/>
<path d="M51 499h5v6h-5z" fill="#ffff00"/>
<path d="M52 500h3v4h-3z" fill="#a02000"/>
<path d="M56 493h3v6h-3zM59 495h3v4h-3zM62 496h1v3h-1z" fill="#ffff00"/>
<path d="M57 494h1v1h-1z" fill="#000000"/>
<path d="M69 494h2v7h-2zM68 494h4v1h-4zM68 500h4v1h-4zM73 502h5v2h-5zM72 501h1v4h-1zM78 501h1v4h-1z" fill="#00a000"/>
<path d="M71 493h5v5h-5z" fill="#00ffff"/>
<path d="M73 495h5v6h-5z" fill="#ffff00"/>
<path d="M74 496h3v4h-3z" fill="#a02000"/>
<path d="M78 489h3v6h-3zM81 491h3v4h-3zM84 492h1v3h-1z" fill="#ffff00"/>
<path d="M79 490h1v1h-1z" fill="#000000"/>
<path d="M91 495h2v7h-2zM90 495h4v1h-4zM90 501h4v1h-4zM95 503h5v2h-5zM94 502h1v4h-1zM100 502h1v4h-1z" fill="#00a000"/>
<path d="M95 496h5v6h-5z" fill="#ffff00"/>
<path d="M96 497h3v4h-3z" fill="#a02000"/>
<path d="M100 490h3v6h-3zM103 492h3v4h-3zM106 493h1v3h-1z" fill="#ffff00"/>
<path d="M101 491h1v1h-1z" fill="#000000"/>
<path d="M113 495h2v7h-2zM112 495h4v1h-4zM112 501h4v1h-4zM117 503h5v2h-5zM116 502h1v4h-1zM122 502h1v4h-1z" fill="#00a000"/>
<path d="M117 496h5v6h-5z" fill="#ffff00"/>
<path d="M118 497h3v4h-3z" fill="#a02000"/>
<path d="M122 490h3v6h-3zM125 492h3v4h-3zM128 493h1v3h-1z" fill="#ffff00"/>
<path d="M123 491h1v1h-1z" fill="#000000"/>
<path d="M152 495h2v7h-2zM151 495h4v1h-4zM151 501h4v1h-4zM156 503h5v2h-5zM155 502h1v4h-1zM161 502h1v4h-1z" fill="#00a000"/>
<path d="M156 496h5v6h-5z" fill="#ffff00"/>
<path d="M157 497h3v4h-3z" fill="#a02000"/>
<path d="M161 490h3v6h-3zM164 492h3v4h-3zM167 493h1v3h-1z" fill="#ffff00"/>
<path d="M162 491h1v1h-1z" fill="#000000"/>
<path d="M209 485h2v7h-2zM208 485h4v1h-4zM208 491h4v1h-4zM213 493h5v2h-5zM212 492h1v4h-1zM218 492h1v4h-1z" fill="#00a000"/>
<path d="M211 484h5v5h-5z" fill="#00ffff"/>
<path d="M213 486h5v6h-5z" fill="#ffff00"/>
<path d="M214 487h3v4h-3z" fill="#a02000"/>
<path d="M218 480h3v6h-3zM221 482h3v4h-3zM224 483h1v3h-1z" fill="#ffff00"/>
<path d="M219 481h1v1h-1z" fill="#000000"/>
<path d="M228 485h2v7h-2zM227 485h4v1h-4zM227 491h4v1h-4zM232 493h5v2h-5zM231 492h1v4h-1zM237 492h1v4h-1z" fill="#00a000"/>
<path d="M232 486h5v6h-5z" fill="#ffff00"/>
<path d="M233 487h3v4h-3z" fill="#a02000"/>
<path d="M237 480h3v6h-3zM240 482h3v4h-3zM243 483h1v3h-1z" fill="#ffff00"/>
<path d="M238 481h1v1h-1z" fill="#000000"/>
<path d="M228 495h2v7h-2zM227 495h4v1h-4zM227 501h4v1h-4zM232 503h5v2h-5zM231 502h1v4h-1zM237 502h1v4h-1z" fill="#00a000"/>
<path d="M232 496h5v6h-5z" fill="#ffff00"/>
<path d="M233 497h3v4h-3z" fill="#a02000"/>
<path d="M237 490h3v6h-3zM240 492h3v4h-3zM243 493h1v3h-1z" fill="#ffff00"/>
<path d="M238 491h1v1h-1z" fill="#000000"/>
<path d="M240 495h2v7h-2zM239 495h4v1h-4zM239 501h4v1h-4zM244 503h5v2h-5zM243 502h1v4h-1zM249 502h1v4h-1z" fill="#00a000"/>
<path d="M242 494h5v5h-5z" fill="#00ffff"/>
<path d="M244 496h5v6h-5z" fill="#ffff00"/>
<path d="M245 497h3v4h-3z" fill="#a02000"/>
<path d="M249 490h3v6h-3zM252 492h3v4h-3zM255 493h1v3h-1z" fill="#ffff00"/>
<path d="M250 491h1v1h-1z" fill="#000000"/>
<path d="M-5 509h2v7h-2zM-6 509h4v1h-4zM-6 515h4v1h-4zM-1 517h5v2h-5zM-2 516h1v4h-1zM4 516h1v4h-1z" fill="#00a000"/>
<path d="M-1 510h5v6h-5z" fill="#ffff00"/>
<path d="M0 511h3v4h-3z" fill="#a02000"/>
<path d="M4 504h3v6h-3zM7 506h3v4h-3zM10 507h1v3h-1z" fill="#ffff00"/>
<path d="M5 505h1v1h-1z" fill="#000000"/>
<path d="M17 509h2v7h-2zM16 509h4v1h-4zM16 515h4v1h-4zM21 517h5v2h-5zM20 516h1v4h-1zM26 516h1v4h-1z" fill="#00a000"/>
<path d="M21 510h5v6h-5z" fill="#ffff00"/>
<path d="M22 511h3v4h-3z" fill="#a02000"/>
<path d="M26 504h3v6h-3zM29 506h3v4h-3zM32 507h1v3h-1z" fill="#ffff00"/>
<path d="M27 505h1v1h-1z" fill="#000000"/>
<path d="M49 509h2v7h-2zM48 509h4v1h-4zM48 515h4v1h-4zM53 517h5v2h-5zM52 516h1v4h-1zM58 516h1v4h-1z" fill="#00a000"/>
<path d="M53 510h5v6h-5z" fill="#ffff00"/>
<path d="M54 511h3v4h-3z" fill="#a02000"/>
<path d="M58 504h3v6h-3zM61 506h3v4h-3zM64 507h1v3h-1z" fill="#ffff00"/>
<path d="M59 505h1v1h-1z" fill="#000000"/>
<path d="M-5 536h2v7h-2zM-6 536h4v1h-4zM-6 542h4v1h-4zM-1 544h5v2h-5zM-2 543h1v4h-1zM4 543h1v4h-1z" fill="#00a000"/>
<path d="M-1 537h5v6h-5z" fill="#ffff00"/>
<path d="M0 538h3v4h-3z" fill="#a02000"/>
<path d="M4 531h3v6h-3zM7 533h3v4h-3zM10 534h1v3h-1z" fill="#ffff00"/>
<path d="M5 532h1v1h-1z" fill="#000000"/>
<path d="M49 536h2v7h-2zM48 536h4v1h-4zM48 542h4v1h-4zM53 544h5v2h-5zM52 543h1v4h-1zM58 543h1v4h-1z" fill="#00a000"/>
<path d="M53 537h5v6h-5z" fill="#ffff00"/>
<path d="M54 538h3v4h-3z" fill="#a02000"/>
<path d="M58 531h3v6h-3zM61 533h3v4h-3zM64 534h1v3h-1z" fill="#ffff00"/>
<path d="M59 532h1v1h-1z" fill="#000000"/>
<path d="M-5 563h2v7h-2zM-6 563h4v1h-4zM-6 569h4v1h-4zM-1 571h5v2h-5zM-2 570h1v4h-1zM4 570h1v4h-1z" fill="#00a000"/>
<path d="M-1 564h5v6h-5z" fill="#ffff00"/>
<path d="M0 565h3v4h-3z" fill="#a02000"/>
<path d="M4 558h3v6h-3zM7 560h3v4h-3zM10 561h1v3h-1z" fill="#ffff00"/>
<path d="M5 559h1v1h-1z" fill="#000000"/>
<path d="M17 563h2v7h-2zM16 563h4v1h-4zM16 569h4v1h-4zM21 571h5v2h-5zM20 570h1v4h-1zM26 570h1v4h-1z" fill="#00a000"/>
<path d="M21 564h5v6h-5z" fill="#ffff00"/>
<path d="M22 565h3v4h-3z" fill="#a02000"/>
<path d="M26 558h3v6h-3zM29 560h3v4h-3zM32 561h1v3h-1z" fill="#ffff00"/>
<path d="M27 559h1v1h-1z" fill="#000000"/>
<path d="M49 563h2v7h-2zM48 563h4v1h-4zM48 569h4v1h-4zM53 571h5v2h-5zM52 570h1v4h-1zM58 570h1v4h-1z" fill="#00a000"/>
<path d="M53 564h5v6h-5z" fill="#ffff00"/>
<path d="M54 565h3v4h-3z" fill="#a02000"/>
<path d="M58 558h3v6h-3zM61 560h3v4h-3zM64 561h1v3h-1z" fill="#ffff00"/>
<path d="M59 559h1v1h-1z" fill="#000000"/>
<path d="M-5 575h2v7h-2zM-6 575h4v1h-4zM-6 581h4v1h-4zM-1 583h5v2h-5zM-2 582h1v4h-1zM4 582h1v4h-1z" fill="#00a000"/>
<path d="M-3 574h5v5h-5z" fill="#00ffff"/>
<path d="M-1 576h5v6h-5z" fill="#ffff00"/>
<path d="M0 577h3v4h-3z" fill="#a02000"/>
<path d="M4 570h3v6h-3zM7 572h3v4h-3zM10 573h1v3h-1z" fill="#ffff00"/>
<path d="M5 571h1v1h-1z" fill="#000000"/>
<path d="M17 575h2v7h-2zM16 575h4v1h-4zM16 581h4v1h-4zM21 583h5v2h-5zM20 582h1v4h-1zM26 582h1v4h-1z" fill="#00a000"/>
<path d="M21 576h5v6h-5z" fill="#ffff00"/>
<path d="M22 577h3v4h-3z" fill="#a02000"/>
<path d="M26 570h3v6h-3zM29 572h3v4h-3zM32 573h1v3h-1z" fill="#ffff00"/>
<path d="M27 571h1v1h-1z" fill="#000000"/>
<path d="M49 575h2v7h-2zM48 575h4v1h-4zM48 581h4v1h-4zM53 583h5v2h-5zM52 582h1v4h-1zM58 582h1v4h-1z" fill="#00a000"/>
<path d="M53 576h5v6h-5z" fill="#ffff00"/>
<path d="M54 577h3v4h-3z" fill="#a02000"/>
<path d="M58 570h3v6h-3zM61 572h3v4h-3zM64 573h1v3h-1z" fill="#ffff00"/>
<path d="M59 571h1v1h-1z" fill="#000000"/>
<path d="M78 486h7v3h-7zM79 491h9v6h-9z" fill="#ffff00"/>
<path d="M138 576h32v1h-32zM138 582h32v1h-32zM138 576h1v7h-1zM169 576h1v7h-1z" fill="#00ffff"/>
<path d="M136 583h36v1h-36z" fill="#00ff00"/>
<path d="M137 583h28v1h-28zM137 586h28v1h-28zM137 583h1v4h-1zM164 583h1v4h-1zM173 579h11v1h-11zM173 583h11v1h-11zM173 579h1v5h-1zM183 579h1v5h-1z" fill="#00ffff"/>
<path d="M218 563h29v19h-29z" fill="#ffffff"/>
<path d="M220 564h1v2h-1zM223 564h1v2h-1zM226 564h1v2h-1zM229 564h1v2h-1zM232 564h1v2h-1zM235 564h1v2h-1zM220 567h1v2h-1zM223 567h1v2h-1zM226 567h1v2h-1zM229 567h1v2h-1zM232 567h1v2h-1zM235 567h1v2h-1zM220 570h1v2h-1zM223 570h1v2h-1zM226 570h1v2h-1zM229 570h1v2h-1zM232 570h1v2h-1zM235 570h1v2h-1zM220 573h1v2h-1zM223 573h1v2h-1zM226 573h1v2h-1zM229 573h1v2h-1zM232 573h1v2h-1zM235 573h1v2h-1zM237 564h3v11h-3zM241 564h4v11h-4z" fill="#000000"/>
<path d="M238 568h2v3h-2zM242 569h2v3h-2z" fill="#00ffff"/>
<path d="M238.5 574.5L240.5 565.5M242.5 574.5L244.5 565.5" stroke="#ffffff" fill="none"/>
<path d="M224 565h1v3h-1zM231 565h1v3h-1z" fill="#ffff00"/>
<path d="M220 578h4v2h-4zM226 578h5v2h-5zM233 578h4v2h-4zM238 578h3v2h-3zM242 578h3v2h-3zM226 575h5v2h-5zM232 575h5v2h-5z" fill="#000000"/>
<path d="M224 582h10v3h-10zM220 585h22v2h-22z" fill="#ffffff"/>
<path d="M96 672h128v3h-128z" fill="#00ff00"/>
<path d="M100 673h5v1h-5zM110 673h5v1h-5zM120 673h5v1h-5zM130 673h5v1h-5zM140 673h5v1h-5zM150 673h5v1h-5zM160 673h5v1h-5zM170 673h5v1h-5zM180 673h5v1h-5zM190 673h5v1h-5zM200 673h5v1h-5zM210 673h5v1h-5z" fill="#000000"/>
<path d="M134 667h1v12h-1z" fill="#00ff00"/>
<path d="M134 667h2v2h-2z" fill="#ffffff"/>
<path d="M172 667h1v12h-1z" fill="#00ff00"/>
<path d="M172 667h2v2h-2z" fill="#ffffff"/>
<path d="M192 667h1v12h-1z" fill="#00ff00"/>
<path d="M192 667h2v2h-2z" fill="#ffffff"/>
<path d="M211 667h1v12h-1z" fill="#00ff00"/>
<path d="M211 667h2v2h-2z" fill="#ffffff"/>
<path d="M223 667h1v12h-1z" fill="#00ff00"/>
<path d="M223 667h2v2h-2z" fill="#ffffff"/>
<path d="M96 675h1v49h-1zM106 675h1v49h-1zM115 675h1v49h-1zM125 675h1v49h-1zM134 675h1v49h-1zM144 675h1v49h-1zM153 675h1v49h-1zM163 675h1v49h-1zM172 675h1v49h-1zM182 675h1v49h-1zM192 675h1v49h-1zM201 675h1v49h-1zM211 675h1v49h-1zM223 675h1v49h-1z" fill="#a8a8a8"/>
<path d="M96 683h128v1h-128z" fill="#00c8c8"/>
<path d="M96 685h128v1h-128z" fill="#008888"/>
<path d="M96 684h128v1h-128z" fill="#a8a8a8"/>
<path d="M96 693h128v1h-128z" fill="#00c8c8"/>
<path d="M96 695h128v1h-128z" fill="#008888"/>
<path d="M96 694h128v1h-128z" fill="#a8a8a8"/>
<path d="M96 702h128v1h-128z" fill="#00c8c8"/>
<path d="M96 704h128v1h-128z" fill="#008888"/>
<path d="M96 703h128v1h-128z" fill="#a8a8a8"/>
<path d="M96 712h128v1h-128z" fill="#00c8c8"/>
<path d="M96 714h128v1h-128z" fill="#008888"/>
<path d="M96 713h128v1h-128z" fill="#a8a8a8"/>
<path d="M96 722h128v1h-128z" fill="#00c8c8"/>
<path d="M96 724h128v1h-128z" fill="#008888"/>
<path d="M96 723h128v1h-128zM96 699h128v1h-128z" fill="#a8a8a8"/>
<path d="M99 681h5v2h-5zM109 681h4v2h-4zM118 681h5v2h-5zM128 681h4v2h-4zM137 681h5v2h-5zM166 681h4v2h-4zM175 681h5v2h-5zM185 681h5v2h-5zM195 681h4v2h-4zM204 681h5v2h-5zM214 681h7v2h-7zM94 686h2v7h-2zM94 705h2v7h-2zM107 686h2v7h-2zM132 686h2v7h-2zM132 705h2v7h-2zM161 686h2v7h-2zM161 705h2v7h-2zM173 686h2v7h-2zM180 686h2v7h-2zM180 705h2v7h-2zM212 686h2v7h-2zM212 705h2v7h-2zM224 686h2v7h-2zM99 710h4v1h-4zM99 713h4v1h-4zM99 710h1v4h-1zM102 710h1v4h-1zM98 715h7v1h-7zM128 710h4v1h-4zM128 713h4v1h-4zM128 710h1v4h-1zM131 710h1v4h-1zM137 710h4v1h-4zM137 713h4v1h-4zM137 710h1v4h-1zM140 710h1v4h-1zM147 710h4v1h-4zM147 713h4v1h-4zM147 710h1v4h-1zM150 710h1v4h-1zM146 715h3v6h-3zM146 715h6v1h-6zM156 710h4v1h-4zM156 713h4v1h-4zM156 710h1v4h-1zM159 710h1v4h-1zM155 715h7v1h-7zM166 710h4v1h-4zM166 713h4v1h-4zM166 710h1v4h-1zM169 710h1v4h-1zM165 715h3v6h-3zM174 715h7v1h-7zM184 715h7v1h-7zM204 710h4v1h-4zM204 713h4v1h-4zM204 710h1v4h-1zM207 710h1v4h-1zM203 715h3v6h-3zM203 715h7v1h-7zM213 715h3v6h-3z" fill="#00ffff"/>
<path d="M95 701h2v2h-2zM105 701h2v2h-2zM114 701h2v2h-2z" fill="#ff0000"/>
<path d="M134 684h2v1h-2zM134 713h2v1h-2z" fill="#ffff00"/>
<path d="M152 701h2v2h-2z" fill="#ff0000"/>
<path d="M172 684h2v1h-2zM172 713h2v1h-2zM211 684h2v1h-2zM211 713h2v1h-2zM223 684h2v1h-2zM223 713h2v1h-2z" fill="#ffff00"/>
<path d="M212 685h12v28h-12z" fill="#000000"/>
<path d="M212 685h12v1h-12zM212 712h12v1h-12zM212 685h1v28h-1zM223 685h1v28h-1z" fill="#00ffff"/>
<path d="M213.5 687.5L222.5 711.5M213.5 711.5L222.5 687.5" stroke="#ffffff" fill="none"/>
<path d="M214 683h8v2h-8z" fill="#00ffff"/>
<path d="M233 683h3v41h-3z" fill="#00ff00"/>
<path d="M234 686h1v4h-1zM234 695h1v4h-1zM234 704h1v4h-1zM234 713h1v4h-1z" fill="#000000"/>
<path d="M237 683h1v41h-1z" fill="#00ff00"/>
<path d="M241 683h2v2h-2z" fill="#ffffff"/>
<path d="M223 683h18v1h-18z" fill="#a8a8a8"/>
<path d="M232 683h8v1h-8z" fill="#00ff00"/>
<path d="M241 713h2v2h-2z" fill="#ffffff"/>
<path d="M223 713h18v1h-18z" fill="#a8a8a8"/>
<path d="M232 713h8v1h-8z" fill="#00ff00"/>
<path d="M241 723h2v2h-2z" fill="#ffffff"/>
<path d="M223 723h18v1h-18z" fill="#a8a8a8"/>
<path d="M232 723h8v1h-8zM99 670h3v5h-3z" fill="#00ff00"/>
<path d="M140 678h6v3h-6zM140 678h3v6h-3z" fill="#ffff00"/>
<path d="M142 679h3v1h-3z" fill="#000000"/>
<path d="M102 698h3v1h-3zM102 702h3v1h-3zM102 698h1v5h-1zM104 698h1v5h-1zM102 702h3v1h-3zM111 698h3v1h-3zM111 702h3v1h-3zM111 698h1v5h-1zM113 698h1v5h-1zM111 702h3v1h-3zM121 699h3v4h-3zM121 701h3v2h-3zM127 695h3v6h-3zM130 697h3v4h-3zM140 688h3v6h-3zM140 692h4v2h-4zM148 689h3v5h-3zM148 692h4v2h-4zM140 700h3v4h-3zM140 702h5v2h-5zM146 699h3v3h-3zM146 700h3v2h-3zM158 697h3v3h-3zM158 698h4v2h-4zM165 696h3v1h-3zM165 702h3v1h-3zM165 696h1v7h-1zM167 696h1v7h-1zM165 702h5v1h-5zM176 697h3v1h-3zM176 702h3v1h-3zM176 697h1v6h-1zM178 697h1v6h-1zM176 702h5v1h-5zM184 697h3v6h-3zM187 699h3v4h-3zM196 697h3v4h-3zM196 699h5v2h-5zM203 697h3v1h-3zM203 702h3v1h-3zM203 697h1v6h-1zM205 697h1v6h-1zM203 702h5v1h-5zM141 706h1v6h-1zM142 708h2v4h-2zM145 705h2v4h-2zM147 706h2v3h-2zM165 703h3v2h-3zM168 703h3v2h-3zM177 703h3v2h-3zM180 703h3v2h-3zM146 714h7v3h-7zM146 714h3v7h-3z" fill="#ffff00"/>
<path d="M148 715h4v1h-4z" fill="#000000"/>
<path d="M226 698h3v8h-3zM229 701h3v5h-3zM186 703h3v2h-3zM189 703h3v2h-3z" fill="#ffff00"/>
<path d="M135 716h3v6h-3zM171 716h3v6h-3zM191 716h3v6h-3zM212 716h3v6h-3zM224 714h3v8h-3z" fill="#00ffff"/>
<path d="M234 690h3v4h-3z" fill="#000000"/>
<path d="M189 722h6v1h-6z" fill="#ff0000"/>
<path d="M382 679h249v3h-249z" fill="#00ff00"/>
<path d="M386 680h5v1h-5zM396 680h5v1h-5zM406 680h5v1h-5zM416 680h5v1h-5zM426 680h5v1h-5zM436 680h5v1h-5zM446 680h5v1h-5zM456 680h5v1h-5zM466 680h5v1h-5zM476 680h5v1h-5zM486 680h5v1h-5zM496 680h5v1h-5zM506 680h5v1h-5zM516 680h5v1h-5zM526 680h5v1h-5zM536 680h5v1h-5zM546 680h5v1h-5zM556 680h5v1h-5zM566 680h5v1h-5zM576 680h5v1h-5zM586 680h5v1h-5zM596 680h5v1h-5zM606 680h5v1h-5zM616 680h5v1h-5z" fill="#000000"/>
<path d="M382 673h1v13h-1z" fill="#00ff00"/>
<path d="M382 673h2v2h-2z" fill="#ffffff"/>
<path d="M421 673h1v13h-1z" fill="#00ff00"/>
<path d="M421 673h2v2h-2z" fill="#ffffff"/>
<path d="M458 673h1v13h-1z" fill="#00ff00"/>
<path d="M458 673h2v2h-2z" fill="#ffffff"/>
<path d="M461 673h1v13h-1z" fill="#00ff00"/>
<path d="M461 673h2v2h-2z" fill="#ffffff"/>
<path d="M480 673h1v13h-1z" fill="#00ff00"/>
<path d="M480 673h2v2h-2z" fill="#ffffff"/>
<path d="M502 673h1v13h-1z" fill="#00ff00"/>
<path d="M502 673h2v2h-2z" fill="#ffffff"/>
<path d="M541 673h1v13h-1z" fill="#00ff00"/>
<path d="M541 673h2v2h-2z" fill="#ffffff"/>
<path d="M579 673h1v13h-1z" fill="#00ff00"/>
<path d="M579 673h2v2h-2z" fill="#ffffff"/>
<path d="M598 673h1v13h-1z" fill="#00ff00"/>
<path d="M598 673h2v2h-2z" fill="#ffffff"/>
<path d="M618 673h1v13h-1z" fill="#00ff00"/>
<path d="M618 673h2v2h-2z" fill="#ffffff"/>
<path d="M630 673h1v13h-1z" fill="#00ff00"/>
<path d="M630 673h2v2h-2z" fill="#ffffff"/>
<path d="M382 682h1v42h-1zM392 682h1v42h-1zM402 682h1v42h-1zM411 682h1v42h-1zM421 682h1v42h-1zM431 682h1v42h-1zM440 682h1v42h-1zM450 682h1v42h-1zM459 682h1v42h-1zM470 682h1v42h-1zM480 682h1v42h-1zM502 682h1v42h-1zM512 682h1v42h-1zM522 682h1v42h-1zM531 682h1v42h-1zM541 682h1v42h-1zM551 682h1v42h-1zM560 682h1v42h-1zM570 682h1v42h-1zM579 682h1v42h-1zM589 682h1v42h-1zM598 682h1v42h-1zM608 682h1v42h-1zM618 682h1v42h-1zM630 682h1v42h-1z" fill="#a8a8a8"/>
<path d="M382 689h249v1h-249z" fill="#00c8c8"/>
<path d="M382 691h249v1h-249z" fill="#008888"/>
<path d="M382 690h249v1h-249z" fill="#a8a8a8"/>
<path d="M382 699h249v1h-249z" fill="#00c8c8"/>
<path d="M382 701h249v1h-249z" fill="#008888"/>
<path d="M382 700h249v1h-249z" fill="#a8a8a8"/>
<path d="M382 708h249v1h-249z" fill="#00c8c8"/>
<path d="M382 710h249v1h-249z" fill="#008888"/>
<path d="M382 709h249v1h-249z" fill="#a8a8a8"/>
<path d="M382 718h249v1h-249z" fill="#00c8c8"/>
<path d="M382 720h249v1h-249z" fill="#008888"/>
<path d="M382 719h249v1h-249z" fill="#a8a8a8"/>
<path d="M382 728h249v1h-249z" fill="#00c8c8"/>
<path d="M382 730h249v1h-249z" fill="#008888"/>
<path d="M382 729h249v1h-249zM382 705h249v1h-249z" fill="#a8a8a8"/>
<path d="M395 687h5v2h-5zM405 687h4v2h-4zM424 687h5v2h-5zM434 687h4v2h-4zM443 687h5v2h-5zM453 687h4v2h-4zM473 687h5v2h-5zM505 687h5v2h-5zM515 687h5v2h-5zM534 687h5v2h-5zM554 687h4v2h-4zM563 687h5v2h-5zM582 687h5v2h-5zM592 687h4v2h-4zM601 687h5v2h-5zM621 687h7v2h-7zM380 692h2v7h-2zM419 692h2v7h-2zM419 711h2v7h-2zM457 692h2v7h-2zM468 692h2v7h-2zM481 692h2v7h-2zM481 711h2v7h-2zM500 692h2v7h-2zM500 711h2v7h-2zM542 692h2v7h-2zM577 692h2v7h-2zM577 711h2v7h-2zM596 692h2v7h-2zM596 711h2v7h-2zM616 692h2v7h-2zM616 711h2v7h-2zM628 692h2v7h-2zM628 711h2v7h-2zM385 716h4v1h-4zM385 719h4v1h-4zM385 716h1v4h-1zM388 716h1v4h-1zM394 721h7v1h-7zM405 716h4v1h-4zM405 719h4v1h-4zM405 716h1v4h-1zM408 716h1v4h-1zM404 721h6v1h-6zM413 721h3v6h-3zM413 721h7v1h-7zM424 716h4v1h-4zM424 719h4v1h-4zM424 716h1v4h-1zM427 716h1v4h-1zM423 721h3v6h-3zM423 721h7v1h-7zM443 716h4v1h-4zM443 719h4v1h-4zM443 716h1v4h-1zM446 716h1v4h-1zM442 721h7v1h-7zM453 716h4v1h-4zM453 719h4v1h-4zM453 716h1v4h-1zM456 716h1v4h-1zM461 721h8v1h-8zM504 721h3v6h-3zM525 716h4v1h-4zM525 719h4v1h-4zM525 716h1v4h-1zM528 716h1v4h-1zM534 716h4v1h-4zM534 719h4v1h-4zM534 716h1v4h-1zM537 716h1v4h-1zM533 721h3v6h-3zM544 716h4v1h-4zM544 719h4v1h-4zM544 716h1v4h-1zM547 716h1v4h-1zM543 721h3v6h-3zM543 721h7v1h-7zM553 721h3v6h-3zM553 721h6v1h-6zM563 716h4v1h-4zM563 719h4v1h-4zM563 716h1v4h-1zM566 716h1v4h-1zM562 721h3v6h-3zM573 716h4v1h-4zM573 719h4v1h-4zM573 716h1v4h-1zM576 716h1v4h-1zM572 721h3v6h-3zM572 721h6v1h-6zM581 721h3v6h-3zM581 721h7v1h-7zM601 716h4v1h-4zM601 719h4v1h-4zM601 716h1v4h-1zM604 716h1v4h-1zM600 721h3v6h-3zM611 716h4v1h-4zM611 719h4v1h-4zM611 716h1v4h-1zM614 716h1v4h-1zM610 721h3v6h-3zM610 721h7v1h-7zM621 716h4v1h-4zM621 719h4v1h-4zM621 716h1v4h-1zM624 716h1v4h-1z" fill="#00ffff"/>
<path d="M382 690h2v1h-2zM382 719h2v1h-2z" fill="#ffff00"/>
<path d="M391 707h2v2h-2zM401 707h2v2h-2zM410 707h2v2h-2z" fill="#ff0000"/>
<path d="M421 690h2v1h-2zM421 719h2v1h-2z" fill="#ffff00"/>
<path d="M430 707h2v2h-2zM439 707h2v2h-2z" fill="#ff0000"/>
<path d="M459 690h2v1h-2zM459 719h2v1h-2z" fill="#ffff00"/>
<path d="M469 707h2v2h-2z" fill="#ff0000"/>
<path d="M480 690h2v1h-2zM480 719h2v1h-2zM502 690h2v1h-2zM502 719h2v1h-2z" fill="#ffff00"/>
<path d="M530 707h2v2h-2z" fill="#ff0000"/>
<path d="M541 690h2v1h-2zM541 719h2v1h-2z" fill="#ffff00"/>
<path d="M550 707h2v2h-2zM569 707h2v2h-2z" fill="#ff0000"/>
<path d="M579 690h2v1h-2zM579 719h2v1h-2z" fill="#ffff00"/>
<path d="M588 707h2v2h-2z" fill="#ff0000"/>
<path d="M598 690h2v1h-2zM598 719h2v1h-2z" fill="#ffff00"/>
<path d="M607 707h2v2h-2z" fill="#ff0000"/>
<path d="M618 690h2v1h-2zM618 719h2v1h-2zM630 690h2v1h-2zM630 719h2v1h-2z" fill="#ffff00"/>
<path d="M481 691h22v28h-22z" fill="#000000"/>
<path d="M481 691h22v1h-22zM481 718h22v1h-22zM481 691h1v28h-1zM502 691h1v28h-1z" fill="#00ffff"/>
<path d="M482.5 693.5L501.5 717.5M482.5 717.5L501.5 693.5" stroke="#ffffff" fill="none"/>
<path d="M483 689h18v2h-18z" fill="#00ffff"/>
<path d="M619 691h12v28h-12z" fill="#000000"/>
<path d="M619 691h12v1h-12zM619 718h12v1h-12zM619 691h1v28h-1zM630 691h1v28h-1z" fill="#00ffff"/>
<path d="M620.5 693.5L629.5 717.5M620.5 717.5L629.5 693.5" stroke="#ffffff" fill="none"/>
<path d="M621 689h8v2h-8z" fill="#00ffff"/>
<path d="M372 690h3v34h-3z" fill="#00ff00"/>
<path d="M373 693h1v4h-1zM373 702h1v4h-1zM373 711h1v4h-1z" fill="#000000"/>
<path d="M376 690h1v34h-1z" fill="#00ff00"/>
<path d="M368 690h2v2h-2z" fill="#ffffff"/>
<path d="M369 690h14v1h-14z" fill="#a8a8a8"/>
<path d="M370 690h9v1h-9z" fill="#00ff00"/>
<path d="M368 700h2v2h-2z" fill="#ffffff"/>
<path d="M369 700h14v1h-14z" fill="#a8a8a8"/>
<path d="M370 700h9v1h-9z" fill="#00ff00"/>
<path d="M368 719h2v2h-2z" fill="#ffffff"/>
<path d="M369 719h14v1h-14z" fill="#a8a8a8"/>
<path d="M370 719h9v1h-9zM641 690h3v34h-3z" fill="#00ff00"/>
<path d="M642 693h1v4h-1zM642 702h1v4h-1zM642 711h1v4h-1z" fill="#000000"/>
<path d="M645 690h1v34h-1z" fill="#00ff00"/>
<path d="M648 690h2v2h-2z" fill="#ffffff"/>
<path d="M630 690h18v1h-18z" fill="#a8a8a8"/>
<path d="M640 690h8v1h-8z" fill="#00ff00"/>
<path d="M648 719h2v2h-2z" fill="#ffffff"/>
<path d="M630 719h18v1h-18z" fill="#a8a8a8"/>
<path d="M640 719h8v1h-8zM505 676h4v2h-4z" fill="#00ff00"/>
<path d="M427 683h8v3h-8zM427 683h3v6h-3z" fill="#ffff00"/>
<path d="M429 684h5v1h-5z" fill="#000000"/>
<path d="M428 694h3v1h-3zM428 697h3v1h-3zM428 694h1v4h-1zM430 694h1v4h-1zM428 697h4v1h-4zM436 693h3v1h-3zM436 697h3v1h-3zM436 693h1v5h-1zM438 693h1v5h-1zM436 697h3v1h-3zM386 703h3v1h-3zM386 708h3v1h-3zM386 703h1v6h-1zM388 703h1v6h-1zM386 708h4v1h-4zM395 703h3v1h-3zM395 708h3v1h-3zM395 703h1v6h-1zM397 703h1v6h-1zM395 708h4v1h-4zM405 703h2v6h-2zM407 705h3v4h-3zM415 702h2v7h-2zM417 705h2v4h-2zM428 704h7v3h-7zM428 704h3v4h-3z" fill="#ffff00"/>
<path d="M430 705h4v1h-4z" fill="#000000"/>
<path d="M446 704h3v5h-3zM449 706h3v3h-3zM466 704h8v3h-8zM466 704h3v5h-3z" fill="#ffff00"/>
<path d="M468 705h5v1h-5z" fill="#000000"/>
<path d="M427 712h8v3h-8zM427 712h3v6h-3z" fill="#ffff00"/>
<path d="M429 713h5v1h-5z" fill="#000000"/>
<path d="M466 695h3v1h-3zM466 697h3v1h-3zM466 695h1v3h-1zM468 695h1v3h-1zM466 697h4v1h-4zM484 705h2v8h-2zM486 708h3v5h-3zM497 705h2v7h-2zM499 708h3v4h-3zM516 701h3v1h-3zM516 708h3v1h-3zM516 701h1v8h-1zM518 701h1v8h-1zM516 708h5v1h-5zM528 704h3v1h-3zM528 708h3v1h-3zM528 704h1v5h-1zM530 704h1v5h-1zM528 708h4v1h-4zM536 704h3v1h-3zM536 708h3v1h-3zM536 704h1v5h-1zM538 704h1v5h-1zM536 708h4v1h-4zM546 683h9v3h-9zM546 683h3v6h-3z" fill="#ffff00"/>
<path d="M548 684h6v1h-6z" fill="#000000"/>
<path d="M546 694h3v1h-3zM546 697h3v1h-3zM546 694h1v4h-1zM548 694h1v4h-1zM546 697h3v1h-3zM554 694h3v1h-3zM554 697h3v1h-3zM554 694h1v4h-1zM556 694h1v4h-1zM554 697h3v1h-3zM546 704h8v3h-8zM546 704h3v5h-3z" fill="#ffff00"/>
<path d="M548 705h5v1h-5z" fill="#000000"/>
<path d="M565 704h3v5h-3zM565 707h6v2h-6zM573 702h2v7h-2zM575 705h3v4h-3zM583 701h3v1h-3zM583 704h3v1h-3zM583 701h1v4h-1zM585 701h1v4h-1zM583 704h8v1h-8zM584 705h4v5h-4zM588 707h5v3h-5zM603 704h3v5h-3zM603 707h5v2h-5zM612 705h3v1h-3zM612 708h3v1h-3zM612 705h1v4h-1zM614 705h1v4h-1zM612 708h4v1h-4zM546 712h9v3h-9zM546 712h3v6h-3z" fill="#ffff00"/>
<path d="M548 713h6v1h-6z" fill="#000000"/>
<path d="M633 705h3v8h-3zM636 708h4v5h-4zM429 721h3v1h-3zM429 723h3v1h-3zM429 721h1v3h-1zM431 721h1v3h-1zM429 723h8v1h-8zM550 721h4v3h-4zM554 722h4v2h-4z" fill="#ffff00"/>
<path d="M779 666h249v1h-249zM779 669h249v1h-249zM783 668h4v1h-4zM793 668h4v1h-4zM803 668h4v1h-4zM812 668h4v1h-4zM822 668h4v1h-4zM832 668h4v1h-4zM841 668h4v1h-4zM851 668h4v1h-4zM861 668h4v1h-4zM871 668h4v1h-4zM881 668h4v1h-4zM891 668h4v1h-4zM904 668h4v1h-4zM913 668h4v1h-4zM923 668h4v1h-4zM933 668h4v1h-4zM942 668h4v1h-4zM952 668h4v1h-4zM961 668h4v1h-4zM971 668h4v1h-4zM980 668h4v1h-4zM990 668h4v1h-4zM999 668h4v1h-4zM1009 668h4v1h-4zM1018 668h4v1h-4zM779 661h1v11h-1z" fill="#00ff00"/>
<path d="M779 661h2v2h-2z" fill="#ffffff"/>
<path d="M818 661h1v11h-1z" fill="#00ff00"/>
<path d="M818 661h2v2h-2z" fill="#ffffff"/>
<path d="M855 661h1v11h-1z" fill="#00ff00"/>
<path d="M855 661h2v2h-2z" fill="#ffffff"/>
<path d="M858 661h1v11h-1z" fill="#00ff00"/>
<path d="M858 661h2v2h-2z" fill="#ffffff"/>
<path d="M877 661h1v11h-1z" fill="#00ff00"/>
<path d="M877 661h2v2h-2z" fill="#ffffff"/>
<path d="M900 661h1v11h-1z" fill="#00ff00"/>
<path d="M900 661h2v2h-2z" fill="#ffffff"/>
<path d="M938 661h1v11h-1z" fill="#00ff00"/>
<path d="M938 661h2v2h-2z" fill="#ffffff"/>
<path d="M976 661h1v11h-1z" fill="#00ff00"/>
<path d="M976 661h2v2h-2z" fill="#ffffff"/>
<path d="M995 661h1v11h-1z" fill="#00ff00"/>
<path d="M995 661h2v2h-2z" fill="#ffffff"/>
<path d="M1014 661h1v11h-1z" fill="#00ff00"/>
<path d="M1014 661h2v2h-2z" fill="#ffffff"/>
<path d="M1027 661h1v11h-1z" fill="#00ff00"/>
<path d="M1027 661h2v2h-2z" fill="#ffffff"/>
<path d="M779 668h1v56h-1zM789 668h1v56h-1zM799 668h1v56h-1zM808 668h1v56h-1zM818 668h1v56h-1zM828 668h1v56h-1zM837 668h1v56h-1zM847 668h1v56h-1zM857 668h1v56h-1zM867 668h1v56h-1zM877 668h1v56h-1zM887 668h1v56h-1zM900 668h1v56h-1zM909 668h1v56h-1zM919 668h1v56h-1zM929 668h1v56h-1zM938 668h1v56h-1zM948 668h1v56h-1zM957 668h1v56h-1zM967 668h1v56h-1zM976 668h1v56h-1zM986 668h1v56h-1zM995 668h1v56h-1zM1005 668h1v56h-1zM1014 668h1v56h-1zM1027 668h1v56h-1z" fill="#a8a8a8"/>
<path d="M779 677h249v1h-249z" fill="#00c8c8"/>
<path d="M779 679h249v1h-249z" fill="#008888"/>
<path d="M779 678h249v1h-249z" fill="#a8a8a8"/>
<path d="M779 687h249v1h-249z" fill="#00c8c8"/>
<path d="M779 689h249v1h-249z" fill="#008888"/>
<path d="M779 688h249v1h-249z" fill="#a8a8a8"/>
<path d="M779 696h249v1h-249z" fill="#00c8c8"/>
<path d="M779 698h249v1h-249z" fill="#008888"/>
<path d="M779 697h249v1h-249z" fill="#a8a8a8"/>
<path d="M779 706h249v1h-249z" fill="#00c8c8"/>
<path d="M779 708h249v1h-249z" fill="#008888"/>
<path d="M779 707h249v1h-249z" fill="#a8a8a8"/>
<path d="M779 716h249v1h-249z" fill="#00c8c8"/>
<path d="M779 718h249v1h-249z" fill="#008888"/>
<path d="M779 717h249v1h-249zM779 693h249v1h-249z" fill="#a8a8a8"/>
<path d="M811 675h5v2h-5zM821 675h5v2h-5zM831 675h4v2h-4zM840 675h5v2h-5zM850 675h5v2h-5zM860 675h5v2h-5zM870 675h5v2h-5zM880 675h5v2h-5zM890 675h8v2h-8zM903 675h4v2h-4zM912 675h5v2h-5zM922 675h5v2h-5zM932 675h4v2h-4zM941 675h5v2h-5zM951 675h4v2h-4zM960 675h5v2h-5zM970 675h4v2h-4zM989 675h4v2h-4zM998 675h5v2h-5zM1008 675h4v2h-4zM780 680h2v7h-2zM819 680h2v7h-2zM819 699h2v7h-2zM858 680h2v7h-2zM868 680h2v7h-2zM868 699h2v7h-2zM875 680h2v7h-2zM875 699h2v7h-2zM888 680h2v7h-2zM888 699h2v7h-2zM901 680h2v7h-2zM901 699h2v7h-2zM939 680h2v7h-2zM939 699h2v7h-2zM977 680h2v7h-2zM993 680h2v7h-2zM993 699h2v7h-2zM1012 680h2v7h-2zM1012 699h2v7h-2zM1025 680h2v7h-2zM1025 699h2v7h-2zM781 709h3v6h-3zM781 709h7v1h-7zM792 704h4v1h-4zM792 707h4v1h-4zM792 704h1v4h-1zM795 704h1v4h-1zM821 704h4v1h-4zM821 707h4v1h-4zM821 704h1v4h-1zM824 704h1v4h-1zM820 709h7v1h-7zM831 704h4v1h-4zM831 707h4v1h-4zM831 704h1v4h-1zM834 704h1v4h-1zM830 709h3v6h-3zM830 709h6v1h-6zM840 704h4v1h-4zM840 707h4v1h-4zM840 704h1v4h-1zM843 704h1v4h-1zM850 704h4v1h-4zM850 707h4v1h-4zM850 704h1v4h-1zM853 704h1v4h-1zM849 709h3v6h-3zM860 704h4v1h-4zM860 707h4v1h-4zM860 704h1v4h-1zM863 704h1v4h-1zM870 704h4v1h-4zM870 707h4v1h-4zM870 704h1v4h-1zM873 704h1v4h-1zM880 704h4v1h-4zM880 707h4v1h-4zM880 704h1v4h-1zM883 704h1v4h-1zM879 709h3v6h-3zM903 704h4v1h-4zM903 707h4v1h-4zM903 704h1v4h-1zM906 704h1v4h-1zM911 709h3v6h-3zM911 709h7v1h-7zM922 704h4v1h-4zM922 707h4v1h-4zM922 704h1v4h-1zM925 704h1v4h-1zM931 709h6v1h-6zM940 709h3v6h-3zM950 709h3v6h-3zM960 704h4v1h-4zM960 707h4v1h-4zM960 704h1v4h-1zM963 704h1v4h-1zM970 704h4v1h-4zM970 707h4v1h-4zM970 704h1v4h-1zM973 704h1v4h-1zM969 709h6v1h-6zM979 704h4v1h-4zM979 707h4v1h-4zM979 704h1v4h-1zM982 704h1v4h-1zM978 709h7v1h-7zM989 704h4v1h-4zM989 707h4v1h-4zM989 704h1v4h-1zM992 704h1v4h-1zM988 709h6v1h-6zM997 709h3v6h-3zM1008 704h4v1h-4zM1008 707h4v1h-4zM1008 704h1v4h-1zM1011 704h1v4h-1zM1007 709h6v1h-6zM1017 704h4v1h-4zM1017 707h4v1h-4zM1017 704h1v4h-1zM1020 704h1v4h-1zM1016 709h10v1h-10z" fill="#00ffff"/>
<path d="M779 678h2v1h-2zM779 707h2v1h-2zM818 678h2v1h-2zM818 707h2v1h-2z" fill="#ffff00"/>
<path d="M836 695h2v2h-2z" fill="#ff0000"/>
<path d="M857 678h2v1h-2zM857 707h2v1h-2z" fill="#ffff00"/>
<path d="M866 695h2v2h-2z" fill="#ff0000"/>
<path d="M877 678h2v1h-2zM877 707h2v1h-2zM900 678h2v1h-2zM900 707h2v1h-2z" fill="#ffff00"/>
<path d="M918 695h2v2h-2z" fill="#ff0000"/>
<path d="M938 678h2v1h-2zM938 707h2v1h-2z" fill="#ffff00"/>
<path d="M966 695h2v2h-2z" fill="#ff0000"/>
<path d="M976 678h2v1h-2zM976 707h2v1h-2z" fill="#ffff00"/>
<path d="M985 695h2v2h-2z" fill="#ff0000"/>
<path d="M995 678h2v1h-2zM995 707h2v1h-2z" fill="#ffff00"/>
<path d="M1004 695h2v2h-2z" fill="#ff0000"/>
<path d="M1014 678h2v1h-2zM1014 707h2v1h-2zM1027 678h2v1h-2zM1027 707h2v1h-2z" fill="#ffff00"/>
<path d="M770 678h3v46h-3z" fill="#00ff00"/>
<path d="M771 681h1v4h-1zM771 690h1v4h-1zM771 699h1v4h-1zM771 708h1v4h-1zM771 717h1v4h-1z" fill="#000000"/>
<path d="M774 678h1v46h-1z" fill="#00ff00"/>
<path d="M764 678h2v2h-2z" fill="#ffffff"/>
<path d="M765 678h15v1h-15z" fill="#a8a8a8"/>
<path d="M768 678h9v1h-9z" fill="#00ff00"/>
<path d="M764 707h2v2h-2z" fill="#ffffff"/>
<path d="M765 707h15v1h-15z" fill="#a8a8a8"/>
<path d="M768 707h9v1h-9z" fill="#00ff00"/>
<path d="M764 717h2v2h-2z" fill="#ffffff"/>
<path d="M765 717h15v1h-15z" fill="#a8a8a8"/>
<path d="M768 717h9v1h-9zM1036 678h3v46h-3z" fill="#00ff00"/>
<path d="M1037 681h1v4h-1zM1037 690h1v4h-1zM1037 699h1v4h-1zM1037 708h1v4h-1zM1037 717h1v4h-1z" fill="#000000"/>
<path d="M1040 678h1v46h-1z" fill="#00ff00"/>
<path d="M1046 678h2v2h-2z" fill="#ffffff"/>
<path d="M1027 678h19v1h-19z" fill="#a8a8a8"/>
<path d="M1035 678h8v1h-8z" fill="#00ff00"/>
<path d="M1046 707h2v2h-2z" fill="#ffffff"/>
<path d="M1027 707h19v1h-19z" fill="#a8a8a8"/>
<path d="M1035 707h8v1h-8z" fill="#00ff00"/>
<path d="M1046 717h2v2h-2z" fill="#ffffff"/>
<path d="M1027 717h19v1h-19z" fill="#a8a8a8"/>
<path d="M1035 717h8v1h-8z" fill="#00ff00"/>
<path d="M823 675h3v5h-3zM823 678h5v2h-5zM823 683h3v4h-3zM823 685h5v2h-5zM833 681h1v6h-1zM834 683h2v4h-2zM858 681h2v6h-2zM860 683h2v4h-2zM783 692h3v1h-3zM783 697h3v1h-3zM783 692h1v6h-1zM785 692h1v6h-1zM783 697h4v1h-4zM795 693h3v1h-3zM795 697h3v1h-3zM795 693h1v5h-1zM797 693h1v5h-1zM795 697h3v1h-3zM805 693h3v1h-3zM805 695h3v1h-3zM805 693h1v3h-1zM807 693h1v3h-1zM805 695h3v1h-3zM812 692h2v6h-2zM814 694h2v4h-2zM824 693h7v3h-7zM824 693h3v5h-3z" fill="#ffff00"/>
<path d="M826 694h4v1h-4z" fill="#000000"/>
<path d="M841 692h3v3h-3zM841 693h4v2h-4zM848 693h3v5h-3zM848 696h5v2h-5zM861 693h3v4h-3zM861 695h4v2h-4zM869 691h3v7h-3zM872 694h3v4h-3zM881 692h2v6h-2zM883 694h3v4h-3zM892 691h3v7h-3zM895 694h3v4h-3zM904 693h3v3h-3zM904 694h4v2h-4zM911 690h2v8h-2zM913 693h3v5h-3zM925 693h3v1h-3zM925 695h3v1h-3zM925 693h1v3h-1zM927 693h1v3h-1zM925 695h3v1h-3zM934 693h3v1h-3zM934 697h3v1h-3zM934 693h1v5h-1zM936 693h1v5h-1zM934 697h3v1h-3zM943 676h6v3h-6zM943 676h3v4h-3z" fill="#ffff00"/>
<path d="M945 677h3v1h-3z" fill="#000000"/>
<path d="M943 684h3v3h-3zM943 685h4v2h-4zM949 683h3v1h-3zM949 685h3v1h-3zM949 683h1v3h-1zM951 683h1v3h-1zM949 685h3v1h-3zM943 693h8v3h-8zM943 693h3v5h-3z" fill="#ffff00"/>
<path d="M945 694h5v1h-5z" fill="#000000"/>
<path d="M955 693h3v3h-3zM955 694h4v2h-4zM962 693h3v3h-3zM962 694h4v2h-4zM972 693h3v4h-3zM972 695h5v2h-5zM981 694h3v1h-3zM981 696h3v1h-3zM981 694h1v3h-1zM983 694h1v3h-1zM981 696h4v1h-4zM992 693h3v4h-3zM992 695h5v2h-5zM1000 694h3v1h-3zM1000 696h3v1h-3zM1000 694h1v3h-1zM1002 694h1v3h-1zM1000 696h4v1h-4zM1008 692h2v6h-2zM1010 694h3v4h-3zM1019 690h2v8h-2zM1021 693h3v5h-3zM824 702h9v3h-9zM824 702h3v6h-3z" fill="#ffff00"/>
<path d="M826 703h6v1h-6z" fill="#000000"/>
<path d="M943 702h9v3h-9zM943 702h3v5h-3z" fill="#ffff00"/>
<path d="M945 703h6v1h-6z" fill="#000000"/>
<path d="M826 711h9v3h-9zM826 711h3v7h-3z" fill="#ffff00"/>
<path d="M828 712h6v1h-6z" fill="#000000"/>
<path d="M949 712h8v3h-8zM949 712h3v6h-3z" fill="#ffff00"/>
<path d="M951 713h5v1h-5z" fill="#000000"/>
<path d="M782 711h3v1h-3zM782 716h3v1h-3zM782 711h1v6h-1zM784 711h1v6h-1zM829 711h3v1h-3zM829 716h3v1h-3zM829 711h1v6h-1zM831 711h1v6h-1zM848 711h3v1h-3zM848 716h3v1h-3zM848 711h1v6h-1zM850 711h1v6h-1zM878 711h3v1h-3zM878 716h3v1h-3zM878 711h1v6h-1zM880 711h1v6h-1zM899 711h3v1h-3zM899 716h3v1h-3zM899 711h1v6h-1zM901 711h1v6h-1zM917 711h3v1h-3zM917 716h3v1h-3zM917 711h1v6h-1zM919 711h1v6h-1zM1013 711h3v1h-3zM1013 716h3v1h-3zM1013 711h1v6h-1zM1015 711h1v6h-1zM1028 711h3v1h-3zM1028 716h3v1h-3zM1028 711h1v6h-1zM1030 711h1v6h-1z" fill="#00ffff"/>
<path d="M994 718h3v3h-3zM916 718h3v3h-3zM956 717h2v3h-2z" fill="#ff0000"/>
</g>
</svg>
</body></html>
